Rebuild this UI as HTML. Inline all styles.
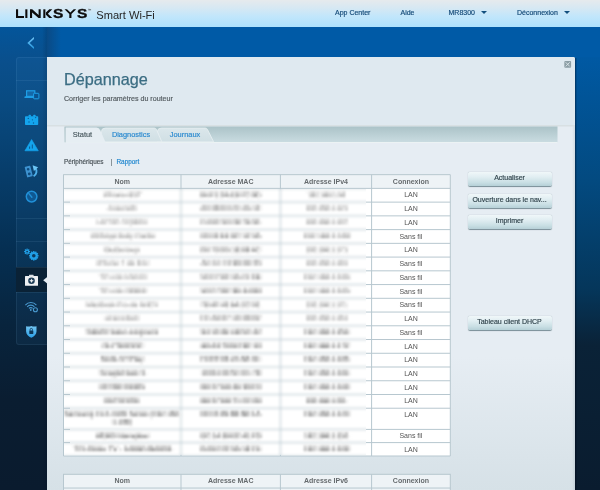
<!DOCTYPE html>
<html><head><meta charset="utf-8">
<style>
*{margin:0;padding:0;box-sizing:border-box}
html,body{width:600px;height:490px;overflow:hidden}
body{position:relative;font-family:"Liberation Sans",sans-serif;background:linear-gradient(to bottom,#0a5aa5 27px,#0059a3 57px,#034a80 180px,#05365a 290px,#0a2237 345px,#0a1c2f 490px)}
.abs{position:absolute}
.btn,.nav,.tab,.lk,#sub{-webkit-text-stroke:0.18px currentColor}
#title{-webkit-text-stroke:0.25px currentColor}
#hdr{left:0;top:0;width:600px;height:27px;background:linear-gradient(to bottom,#e6eaed 0%,#d6e8f3 30%,#c2e6fb 60%,#ade1fd 100%)}
#logo{left:16px;top:8px;font-weight:bold;font-size:12.4px;letter-spacing:0;color:#111;transform-origin:0 0;transform:scaleX(1.36);line-height:12px}
#tm{left:88px;top:8px;font-size:4px;color:#111;font-weight:bold}
#smart{left:96.3px;top:8.6px;font-size:11.1px;color:#262626;line-height:12px}
.nav{top:8px;font-size:7px;color:#164c7a;line-height:9px}
.tri{width:0;height:0;border-left:3px solid transparent;border-right:3px solid transparent;border-top:3.5px solid #12507f}
#topbar{left:47px;top:27px;width:553px;height:30px;background:linear-gradient(to right,#0a4a85 0px,#005aa6 14px,#005aa6 100%)}
#leftbar{left:0;top:27px;width:47px;height:463px;background:linear-gradient(to bottom,#03559a 0px,#0a4f8c 35px,#094b82 73px,#073d6a 148px,#052f52 223px,#08243d 298px,#0a1d31 373px,#0a1b2e 463px)}
#lshade{left:42px;top:27px;width:5px;height:463px;background:linear-gradient(to right,rgba(0,0,0,0),rgba(0,10,30,0.16))}
#chev{left:27px;top:36px}
#side{left:15.5px;top:57px;width:31.5px;height:288px;background:rgba(90,170,240,0.06);border:1px solid rgba(150,200,240,0.09);border-right:none;border-radius:3px 0 0 3px}
.sep{left:15.5px;width:31.5px;height:1px;background:rgba(150,200,240,0.1)}
#sel{left:15.5px;top:267px;width:31.5px;height:25px;background:#0a2236}
#panel{left:47px;top:57px;width:528px;height:433px;background:linear-gradient(to bottom,#e6edf3 0px,#e6edf3 300px,#d6e1e7 433px);border-radius:0 2px 0 0}
#rshade{left:575px;top:58px;width:2px;height:432px;background:linear-gradient(to right,rgba(0,5,20,0.45),rgba(0,5,20,0))}
#phead{left:47px;top:57px;width:528px;height:69px;background:#dfe9f0;border-bottom:1px solid #cfd9de;border-radius:0 2px 0 0}
#title{left:64px;top:70px;font-size:16.2px;color:#3b6d83;line-height:18px}
#sub{left:64px;top:95.2px;font-size:7.1px;color:#555d62;line-height:8px}
#close{left:564.5px;top:60.5px;width:7px;height:7px;border:1px solid #8d9ea5;background:#cfd9de}
#strip{left:65px;top:126.5px;width:492.5px;height:15.5px;background:linear-gradient(to bottom,#a9c0c6,#cbdde2)}
.tab{top:127.5px;height:14.5px;font-size:7.4px;line-height:14px;text-align:center}
.lk{top:157.5px;font-size:6.4px;line-height:8px}
table{position:absolute;border-collapse:collapse;font-size:7px;color:#444;background:#fff}
td,th{border:1px solid #b9c9d1;text-align:center;padding:0;line-height:8px}

.btn{left:467.5px;width:84px;height:14.2px;border-radius:2px;background:linear-gradient(to bottom,#f0f7f9 0%,#e1eef2 35%,#c9dfe4 75%,#b6d0d7 100%);box-shadow:0 0.8px 0.8px rgba(50,80,90,0.6);font-size:7px;color:#34474f;text-align:center;line-height:12.8px}
.bt{font-size:7px;line-height:8px;color:#5a5a5a;text-align:center;white-space:nowrap}
.bm{color:#4a4a4a}
.ct{font-size:7px;line-height:8px;color:#555;text-align:center}
.th{font-size:7px;line-height:8px;color:#666b6e;font-weight:bold;text-align:center}
#wrap{position:absolute;left:0;top:0;width:600px;height:490px;will-change:transform}
</style></head><body><div id="wrap">
<div id="hdr" class="abs"></div>
<svg class="abs" style="left:0;top:0" width="100" height="27" viewBox="0 0 100 27">
<g fill="#0d0d0d">
<path d="M16 9.3 H18.1 V16 H24 V18 H16 Z"/>
<path d="M25.3 9.3 H27.4 V18 H25.3 Z"/>
<path d="M30 9.3 H32.2 L38.6 14.9 V9.3 H40.7 V18 H38.5 L32.1 12.4 V18 H30 Z"/>
<path d="M43.3 9.3 H45.4 V18 H43.3 Z"/>
<path d="M49.3 9.3 H52.3 L47.9 13.65 L52.3 18 H49.3 L45.9 14.8 V12.5 Z"/>
<path d="M64.5 9.3 H67 L70.35 12.6 L73.7 9.3 H76.2 L71.45 14 V18 H69.3 V14 Z"/>
</g>
<text x="53.1" y="18" font-family="Liberation Sans" font-weight="bold" font-size="12.3" textLength="10.3" lengthAdjust="spacingAndGlyphs" fill="#0d0d0d" stroke="#0d0d0d" stroke-width="0.35">S</text>
<text x="77.1" y="18" font-family="Liberation Sans" font-weight="bold" font-size="12.3" textLength="10.3" lengthAdjust="spacingAndGlyphs" fill="#0d0d0d" stroke="#0d0d0d" stroke-width="0.35">S</text>
<path d="M88.2 9.2 H89.4 M88.8 9.2 V10.5 M89.6 10.5 V9.2 L90.1 9.9 L90.6 9.2 V10.5" stroke="#333" stroke-width="0.4" fill="none"/>
</svg>

<div id="smart" class="abs">Smart Wi-Fi</div>
<div class="abs nav" style="left:335px">App Center</div>
<div class="abs nav" style="left:400.5px">Aide</div>
<div class="abs nav" style="left:448.5px">MR8300</div>
<div class="abs tri" style="left:481px;top:11px"></div>
<div class="abs nav" style="left:517px">Déconnexion</div>
<div class="abs tri" style="left:563.8px;top:11px"></div>

<div id="leftbar" class="abs"></div>
<div id="topbar" class="abs"></div>
<div id="lshade" class="abs"></div>

<div id="side" class="abs"></div>
<div class="abs sep" style="top:80px"></div>
<div class="abs sep" style="top:218px"></div>
<div class="abs sep" style="top:241px"></div>
<div id="sel" class="abs"></div>
<div class="abs sep" style="top:267px"></div>
<div class="abs sep" style="top:292px"></div>

<svg class="abs" style="left:0;top:0;filter:blur(0.25px)" width="50" height="350" viewBox="0 0 50 350">
<defs>
<linearGradient id="shg" x1="0" y1="0" x2="0" y2="1"><stop offset="0" stop-color="#74c6f2"/><stop offset="1" stop-color="#2b9fe6"/></linearGradient>
</defs>
<!-- laptop + phone -->
<g fill="none" stroke="#1e9ee6">
<rect x="26.6" y="90.8" width="8.2" height="5.6" stroke-width="1.2" fill="#1468a8"/>
</g>
<path d="M24.8 96.3 H34 V98.1 H24.3 Z" fill="#1e9ee6"/>
<rect x="33.6" y="93.3" width="5.3" height="5.5" rx="0.6" fill="#0b528e" stroke="#1e9ee6" stroke-width="1"/>
<!-- calendar -->
<rect x="25" y="116.2" width="13.2" height="8.9" rx="0.8" fill="#14a5ee"/>
<rect x="28.7" y="114.8" width="2.2" height="2" rx="0.5" fill="#14a5ee"/>
<rect x="33.3" y="114.8" width="2.2" height="2" rx="0.5" fill="#14a5ee"/>
<g fill="#0b5d99"><circle cx="28.3" cy="118.4" r="0.7"/><circle cx="35.6" cy="117.6" r="0.7"/><circle cx="32.4" cy="119.8" r="0.6"/><circle cx="29" cy="122" r="0.7"/><circle cx="33.5" cy="123" r="0.7"/></g>
<!-- warning -->
<path d="M31.6 139.5 L38.3 150.8 H24.9 Z" fill="#14a5ee" stroke="#14a5ee" stroke-width="0.6" stroke-linejoin="round"/>
<path d="M32.3 144.5 V148.5 M29.6 146.5 V148.8" stroke="#0b4f85" stroke-width="0.9"/>
<!-- rotate phone -->
<g transform="rotate(-14 28.7 171.5)">
<rect x="25.8" y="166.2" width="5.8" height="10.8" rx="0.8" fill="#3d92d0"/>
<circle cx="28.7" cy="169.2" r="1.3" fill="#0f4b7e"/><circle cx="28.7" cy="174" r="1.4" fill="#0f4b7e"/>
</g>
<path d="M33.6 176.3 C36.9 174.3 37.2 170.5 35.5 168.3" fill="none" stroke="#4fb0ea" stroke-width="1.9"/>
<path d="M32.6 165.2 L38.2 167.3 L33.9 170.9 Z" fill="#6cc6f6"/>
<!-- speedometer -->
<circle cx="31.6" cy="196.6" r="5.3" fill="#0f5892" stroke="#2190d8" stroke-width="1.5"/>
<path d="M28.9 193.6 L31.9 197.3" stroke="#2190d8" stroke-width="1.4" stroke-linecap="round"/>
<!-- gears -->
<g transform="translate(27.1 251.6)">
<circle r="2.2" fill="#22a0e8"/>
<g fill="#22a0e8">
<rect x="-0.6" y="-3" width="1.2" height="1.2"/>
<rect x="-0.6" y="-3" width="1.2" height="1.2" transform="rotate(45)"/>
<rect x="-0.6" y="-3" width="1.2" height="1.2" transform="rotate(90)"/>
<rect x="-0.6" y="-3" width="1.2" height="1.2" transform="rotate(135)"/>
<rect x="-0.6" y="-3" width="1.2" height="1.2" transform="rotate(180)"/>
<rect x="-0.6" y="-3" width="1.2" height="1.2" transform="rotate(225)"/>
<rect x="-0.6" y="-3" width="1.2" height="1.2" transform="rotate(270)"/>
<rect x="-0.6" y="-3" width="1.2" height="1.2" transform="rotate(315)"/>
</g>
<circle r="0.9" fill="#0b3a60"/>
</g>
<g transform="translate(33.8 255.8)">
<circle r="3.9" fill="#22a0e8"/>
<g fill="#22a0e8">
<rect x="-0.7" y="-4.8" width="1.4" height="1.6" transform="rotate(0)"/>
<rect x="-0.7" y="-4.8" width="1.4" height="1.6" transform="rotate(30)"/>
<rect x="-0.7" y="-4.8" width="1.4" height="1.6" transform="rotate(60)"/>
<rect x="-0.7" y="-4.8" width="1.4" height="1.6" transform="rotate(90)"/>
<rect x="-0.7" y="-4.8" width="1.4" height="1.6" transform="rotate(120)"/>
<rect x="-0.7" y="-4.8" width="1.4" height="1.6" transform="rotate(150)"/>
<rect x="-0.7" y="-4.8" width="1.4" height="1.6" transform="rotate(180)"/>
<rect x="-0.7" y="-4.8" width="1.4" height="1.6" transform="rotate(210)"/>
<rect x="-0.7" y="-4.8" width="1.4" height="1.6" transform="rotate(240)"/>
<rect x="-0.7" y="-4.8" width="1.4" height="1.6" transform="rotate(270)"/>
<rect x="-0.7" y="-4.8" width="1.4" height="1.6" transform="rotate(300)"/>
<rect x="-0.7" y="-4.8" width="1.4" height="1.6" transform="rotate(330)"/>
</g>
<circle r="1.8" fill="#0b3a60"/>
</g>
<!-- medical kit -->
<rect x="25" y="276" width="13" height="9.8" rx="0.5" fill="#eef0f2"/>
<rect x="29" y="274.7" width="4.6" height="1.8" rx="0.4" fill="#d8dde2"/>
<circle cx="31.5" cy="280.8" r="3.3" fill="#1c3c55"/>
<path d="M31.5 278.5 L32.2 280.1 L33.8 280.8 L32.2 281.5 L31.5 283.1 L30.8 281.5 L29.2 280.8 L30.8 280.1 Z" fill="#eef0f2"/>
<path d="M47.2 277 L43.2 280.2 L47.2 283.4 Z" fill="#e6edf3"/>
<!-- wifi -->
<g fill="none" stroke="#4a9ad0" stroke-width="1.1">
<path d="M25.4 305.1 A7.2 7.2 0 0 1 36.4 305.1"/>
<path d="M27.2 306.8 A4.8 4.8 0 0 1 34.4 306.8"/>
<path d="M29 308.4 A2.4 2.4 0 0 1 32.6 308.4"/>
</g>
<circle cx="30.8" cy="310" r="0.9" fill="#4a9ad0"/>
<circle cx="35.4" cy="309.8" r="2" fill="#0b2d4a" stroke="#4a9ad0" stroke-width="1.1"/>
<!-- shield -->
<path d="M26.1 326.3 C28 326.8 30 326.6 31.3 325.9 C32.6 326.6 34.6 326.8 36.5 326.3 V331.5 C36.5 334.5 34 336.6 31.3 337.8 C28.6 336.6 26.1 334.5 26.1 331.5 Z" fill="url(#shg)"/>
<rect x="29.3" y="330.4" width="4" height="3.6" rx="0.4" fill="#0c3556"/>
<path d="M30.1 330.6 V329.6 A1.2 1.2 0 0 1 32.5 329.6 V330.6" fill="none" stroke="#0c3556" stroke-width="0.8"/>
<!-- chevron -->
<linearGradient id="chg" x1="0" y1="0" x2="0" y2="1"><stop offset="0" stop-color="#72c4f6"/><stop offset="1" stop-color="#2598de"/></linearGradient><path d="M33.9 36.9 L27.3 43 L33.9 49.1 L34 46.9 L29.7 43 L34 39.1 Z" fill="url(#chg)"/>
</svg>

<div id="panel" class="abs"></div>
<div id="rshade" class="abs"></div>
<div class="abs" style="left:572px;top:126px;width:3px;height:364px;background:linear-gradient(to right,rgba(120,145,160,0),rgba(120,145,160,0.18))"></div>
<div id="phead" class="abs"></div>
<div id="title" class="abs">Dépannage</div>
<div id="sub" class="abs">Corriger les paramètres du routeur</div>
<svg class="abs" style="left:560px;top:56px" width="16" height="16" viewBox="560 56 16 16"><rect x="564.3" y="60.9" width="6.8" height="6.9" rx="1" fill="#8d9fa6"/><path d="M565.7 62.3 L569.7 66.4 M569.7 62.3 L565.7 66.4" stroke="#dde7eb" stroke-width="0.9"/></svg>

<svg class="abs" style="left:0;top:0" width="600" height="160" viewBox="0 0 600 160">
<defs>
<linearGradient id="stg" x1="0" y1="0" x2="0" y2="1"><stop offset="0" stop-color="#abc3c8"/><stop offset="1" stop-color="#cadce1"/></linearGradient>
<linearGradient id="itg" x1="0" y1="0" x2="0" y2="1"><stop offset="0" stop-color="#dbe7eb"/><stop offset="1" stop-color="#d0dfe4"/></linearGradient>
</defs>
<rect x="47" y="125" width="528" height="1.5" fill="#d8e0e3"/>
<rect x="64.5" y="126.5" width="493" height="16" fill="url(#stg)"/>
<line x1="64.5" y1="142.6" x2="557.5" y2="142.6" stroke="#eef4f6" stroke-width="1"/>
<path d="M157.5 141.8 V131.5 Q157.5 128 161.5 128 H205.3 Q206.8 128 207.6 129.7 L213.6 141.8 Z" fill="url(#itg)" stroke="#e9f0f3" stroke-width="0.8"/>
<path d="M101.5 141.8 V131.5 Q101.5 128 105.5 128 H154.3 Q155.8 128 156.6 129.7 L161.8 141.8 Z" fill="url(#itg)" stroke="#e9f0f3" stroke-width="0.8"/>
<path d="M65.3 142.8 V127.6 H96.5 Q99 127.6 100.2 130.2 L105.8 142.8 Z" fill="#e6eef3"/>
<line x1="65.2" y1="127" x2="65.2" y2="142.5" stroke="#a9bec4" stroke-width="0.6"/>
</svg>

<div class="abs tab" style="left:65.5px;width:34px;color:#4a5a60">Statut</div>
<div class="abs tab" style="left:103px;width:56px;color:#2a8ad0">Diagnostics</div>
<div class="abs tab" style="left:160px;width:50px;color:#2a8ad0">Journaux</div>

<div class="abs lk" style="left:64px;color:#4a5358">Périphériques</div>
<div class="abs" style="left:111px;top:159px;width:0.8px;height:7px;background:#8a9499"></div>
<div class="abs lk" style="left:116.5px;color:#2288d0">Rapport</div>

<svg class="abs" style="left:0;top:0" width="600" height="490" viewBox="0 0 600 490"><rect x="63.5" y="174.65" width="386.8" height="281.35" fill="#fff"/><rect x="63.5" y="174.65" width="386.8" height="13.74" fill="#eef3f6"/><line x1="63.5" y1="174.65" x2="450.3" y2="174.65" stroke="#b7c7cf" stroke-width="1"/><line x1="63.5" y1="188.39000000000001" x2="450.3" y2="188.39000000000001" stroke="#b7c7cf" stroke-width="1"/><line x1="63.5" y1="202.13000000000002" x2="450.3" y2="202.13000000000002" stroke="#b7c7cf" stroke-width="1"/><line x1="63.5" y1="215.87000000000003" x2="450.3" y2="215.87000000000003" stroke="#b7c7cf" stroke-width="1"/><line x1="63.5" y1="229.61000000000004" x2="450.3" y2="229.61000000000004" stroke="#b7c7cf" stroke-width="1"/><line x1="63.5" y1="243.35000000000005" x2="450.3" y2="243.35000000000005" stroke="#b7c7cf" stroke-width="1"/><line x1="63.5" y1="257.09000000000003" x2="450.3" y2="257.09000000000003" stroke="#b7c7cf" stroke-width="1"/><line x1="63.5" y1="270.83000000000004" x2="450.3" y2="270.83000000000004" stroke="#b7c7cf" stroke-width="1"/><line x1="63.5" y1="284.57000000000005" x2="450.3" y2="284.57000000000005" stroke="#b7c7cf" stroke-width="1"/><line x1="63.5" y1="298.31000000000006" x2="450.3" y2="298.31000000000006" stroke="#b7c7cf" stroke-width="1"/><line x1="63.5" y1="312.05000000000007" x2="450.3" y2="312.05000000000007" stroke="#b7c7cf" stroke-width="1"/><line x1="63.5" y1="325.7900000000001" x2="450.3" y2="325.7900000000001" stroke="#b7c7cf" stroke-width="1"/><line x1="63.5" y1="339.5300000000001" x2="450.3" y2="339.5300000000001" stroke="#b7c7cf" stroke-width="1"/><line x1="63.5" y1="353.2700000000001" x2="450.3" y2="353.2700000000001" stroke="#b7c7cf" stroke-width="1"/><line x1="63.5" y1="367.0100000000001" x2="450.3" y2="367.0100000000001" stroke="#b7c7cf" stroke-width="1"/><line x1="63.5" y1="380.7500000000001" x2="450.3" y2="380.7500000000001" stroke="#b7c7cf" stroke-width="1"/><line x1="63.5" y1="394.4900000000001" x2="450.3" y2="394.4900000000001" stroke="#b7c7cf" stroke-width="1"/><line x1="63.5" y1="408.23000000000013" x2="450.3" y2="408.23000000000013" stroke="#b7c7cf" stroke-width="1"/><line x1="63.5" y1="429.4" x2="450.3" y2="429.4" stroke="#b7c7cf" stroke-width="1"/><line x1="63.5" y1="442.6" x2="450.3" y2="442.6" stroke="#b7c7cf" stroke-width="1"/><line x1="63.5" y1="456.0" x2="450.3" y2="456.0" stroke="#b7c7cf" stroke-width="1"/><line x1="63.5" y1="174.65" x2="63.5" y2="456.0" stroke="#b7c7cf" stroke-width="1"/><line x1="181.0" y1="174.65" x2="181.0" y2="456.0" stroke="#b7c7cf" stroke-width="1"/><line x1="280.4" y1="174.65" x2="280.4" y2="456.0" stroke="#b7c7cf" stroke-width="1"/><line x1="371.6" y1="174.65" x2="371.6" y2="456.0" stroke="#b7c7cf" stroke-width="1"/><line x1="450.3" y1="174.65" x2="450.3" y2="456.0" stroke="#b7c7cf" stroke-width="1"/><rect x="63.5" y="474.3" width="386.8" height="30" fill="#eef3f6" stroke="#b7c7cf" stroke-width="1"/><line x1="63.5" y1="488.04" x2="450.3" y2="488.04" stroke="#b7c7cf" stroke-width="1"/><line x1="181.0" y1="474.3" x2="181.0" y2="514.3" stroke="#b7c7cf" stroke-width="1"/><line x1="280.4" y1="474.3" x2="280.4" y2="514.3" stroke="#b7c7cf" stroke-width="1"/><line x1="371.6" y1="474.3" x2="371.6" y2="514.3" stroke="#b7c7cf" stroke-width="1"/></svg><div class="abs" style="left:64px;top:188.99px;width:302px;height:266.40999999999997px;overflow:hidden"><div class="abs" style="left:-64px;top:-188.99px;width:600px;height:490px;filter:blur(1.5px)"><svg class="abs" style="left:0;top:0" width="600" height="490"><rect x="60" y="188.39000000000001" width="320" height="267.61" fill="#fff"/><line x1="63.5" y1="188.39000000000001" x2="450.3" y2="188.39000000000001" stroke="#b7c7cf" stroke-width="1"/><line x1="63.5" y1="202.13000000000002" x2="450.3" y2="202.13000000000002" stroke="#b7c7cf" stroke-width="1"/><line x1="63.5" y1="215.87000000000003" x2="450.3" y2="215.87000000000003" stroke="#b7c7cf" stroke-width="1"/><line x1="63.5" y1="229.61000000000004" x2="450.3" y2="229.61000000000004" stroke="#b7c7cf" stroke-width="1"/><line x1="63.5" y1="243.35000000000005" x2="450.3" y2="243.35000000000005" stroke="#b7c7cf" stroke-width="1"/><line x1="63.5" y1="257.09000000000003" x2="450.3" y2="257.09000000000003" stroke="#b7c7cf" stroke-width="1"/><line x1="63.5" y1="270.83000000000004" x2="450.3" y2="270.83000000000004" stroke="#b7c7cf" stroke-width="1"/><line x1="63.5" y1="284.57000000000005" x2="450.3" y2="284.57000000000005" stroke="#b7c7cf" stroke-width="1"/><line x1="63.5" y1="298.31000000000006" x2="450.3" y2="298.31000000000006" stroke="#b7c7cf" stroke-width="1"/><line x1="63.5" y1="312.05000000000007" x2="450.3" y2="312.05000000000007" stroke="#b7c7cf" stroke-width="1"/><line x1="63.5" y1="325.7900000000001" x2="450.3" y2="325.7900000000001" stroke="#b7c7cf" stroke-width="1"/><line x1="63.5" y1="339.5300000000001" x2="450.3" y2="339.5300000000001" stroke="#b7c7cf" stroke-width="1"/><line x1="63.5" y1="353.2700000000001" x2="450.3" y2="353.2700000000001" stroke="#b7c7cf" stroke-width="1"/><line x1="63.5" y1="367.0100000000001" x2="450.3" y2="367.0100000000001" stroke="#b7c7cf" stroke-width="1"/><line x1="63.5" y1="380.7500000000001" x2="450.3" y2="380.7500000000001" stroke="#b7c7cf" stroke-width="1"/><line x1="63.5" y1="394.4900000000001" x2="450.3" y2="394.4900000000001" stroke="#b7c7cf" stroke-width="1"/><line x1="63.5" y1="408.23000000000013" x2="450.3" y2="408.23000000000013" stroke="#b7c7cf" stroke-width="1"/><line x1="63.5" y1="429.4" x2="450.3" y2="429.4" stroke="#b7c7cf" stroke-width="1"/><line x1="63.5" y1="442.6" x2="450.3" y2="442.6" stroke="#b7c7cf" stroke-width="1"/><line x1="63.5" y1="456.0" x2="450.3" y2="456.0" stroke="#b7c7cf" stroke-width="1"/><line x1="181.0" y1="174.65" x2="181.0" y2="456.0" stroke="#b7c7cf" stroke-width="1"/><line x1="280.4" y1="174.65" x2="280.4" y2="456.0" stroke="#b7c7cf" stroke-width="1"/></svg></div><div class="abs" style="left:-64px;top:-188.99px;width:600px;height:490px"><svg class="abs" style="left:0;top:0;filter:blur(0.9px)" width="600" height="490"><rect x="103.5" y="191.0" width="2.6" height="3.0" fill="#e8e8e8"/><rect x="106.1" y="191.0" width="2.6" height="3.0" fill="#dcdcdc"/><rect x="108.7" y="191.0" width="2.6" height="3.0" fill="#d6d6d6"/><rect x="111.3" y="191.0" width="2.6" height="3.0" fill="#eeeeee"/><rect x="113.9" y="191.0" width="2.6" height="3.0" fill="#f2f2f2"/><rect x="116.5" y="191.0" width="2.6" height="3.0" fill="#f4f4f4"/><rect x="119.1" y="191.0" width="2.6" height="3.0" fill="#eeeeee"/><rect x="121.7" y="191.0" width="2.6" height="3.0" fill="#f3f3f3"/><rect x="124.3" y="191.0" width="2.6" height="3.0" fill="#f9f9f9"/><rect x="126.9" y="191.0" width="2.6" height="3.0" fill="#f3f3f3"/><rect x="129.5" y="191.0" width="2.6" height="3.0" fill="#d9d9d9"/><rect x="132.1" y="191.0" width="2.6" height="3.0" fill="#e3e3e3"/><rect x="134.7" y="191.0" width="2.6" height="3.0" fill="#e5e5e5"/><rect x="137.3" y="191.0" width="2.6" height="3.0" fill="#d3d3d3"/><rect x="139.9" y="191.0" width="2.6" height="3.0" fill="#ececec"/><rect x="199.7" y="191.0" width="2.6" height="3.0" fill="#dcdcdc"/><rect x="202.3" y="191.0" width="2.6" height="3.0" fill="#d6d6d6"/><rect x="204.9" y="191.0" width="2.6" height="3.0" fill="#e7e7e7"/><rect x="207.5" y="191.0" width="2.6" height="3.0" fill="#e5e5e5"/><rect x="210.1" y="191.0" width="2.6" height="3.0" fill="#d5d5d5"/><rect x="212.7" y="191.0" width="2.6" height="3.0" fill="#e5e5e5"/><rect x="215.3" y="191.0" width="2.6" height="3.0" fill="#d5d5d5"/><rect x="217.9" y="191.0" width="2.6" height="3.0" fill="#f6f6f6"/><rect x="220.5" y="191.0" width="2.6" height="3.0" fill="#cfcfcf"/><rect x="223.1" y="191.0" width="2.6" height="3.0" fill="#e2e2e2"/><rect x="225.7" y="191.0" width="2.6" height="3.0" fill="#d3d3d3"/><rect x="228.3" y="191.0" width="2.6" height="3.0" fill="#f6f6f6"/><rect x="230.9" y="191.0" width="2.6" height="3.0" fill="#d6d6d6"/><rect x="233.5" y="191.0" width="2.6" height="3.0" fill="#e2e2e2"/><rect x="236.1" y="191.0" width="2.6" height="3.0" fill="#d0d0d0"/><rect x="238.7" y="191.0" width="2.6" height="3.0" fill="#e6e6e6"/><rect x="241.3" y="191.0" width="2.6" height="3.0" fill="#dfdfdf"/><rect x="243.9" y="191.0" width="2.6" height="3.0" fill="#d1d1d1"/><rect x="246.5" y="191.0" width="2.6" height="3.0" fill="#d3d3d3"/><rect x="249.1" y="191.0" width="2.6" height="3.0" fill="#ececec"/><rect x="251.7" y="191.0" width="2.6" height="3.0" fill="#d8d8d8"/><rect x="254.3" y="191.0" width="2.6" height="3.0" fill="#cccccc"/><rect x="256.9" y="191.0" width="2.6" height="3.0" fill="#d6d6d6"/><rect x="259.5" y="191.0" width="2.6" height="3.0" fill="#f3f3f3"/><rect x="306.3" y="191.0" width="2.6" height="3.0" fill="#f5f5f5"/><rect x="308.9" y="191.0" width="2.6" height="3.0" fill="#e5e5e5"/><rect x="311.5" y="191.0" width="2.6" height="3.0" fill="#d1d1d1"/><rect x="314.1" y="191.0" width="2.6" height="3.0" fill="#e2e2e2"/><rect x="316.7" y="191.0" width="2.6" height="3.0" fill="#e5e5e5"/><rect x="319.3" y="191.0" width="2.6" height="3.0" fill="#f0f0f0"/><rect x="321.9" y="191.0" width="2.6" height="3.0" fill="#e7e7e7"/><rect x="324.5" y="191.0" width="2.6" height="3.0" fill="#d8d8d8"/><rect x="327.1" y="191.0" width="2.6" height="3.0" fill="#e0e0e0"/><rect x="329.7" y="191.0" width="2.6" height="3.0" fill="#eaeaea"/><rect x="332.3" y="191.0" width="2.6" height="3.0" fill="#e4e4e4"/><rect x="334.9" y="191.0" width="2.6" height="3.0" fill="#f6f6f6"/><rect x="337.5" y="191.0" width="2.6" height="3.0" fill="#e1e1e1"/><rect x="340.1" y="191.0" width="2.6" height="3.0" fill="#e9e9e9"/><rect x="342.7" y="191.0" width="2.6" height="3.0" fill="#d5d5d5"/><rect x="103.5" y="194.0" width="2.6" height="3.0" fill="#c6c6c6"/><rect x="106.1" y="194.0" width="2.6" height="3.0" fill="#d0d0d0"/><rect x="108.7" y="194.0" width="2.6" height="3.0" fill="#c8c8c8"/><rect x="111.3" y="194.0" width="2.6" height="3.0" fill="#d3d3d3"/><rect x="113.9" y="194.0" width="2.6" height="3.0" fill="#d0d0d0"/><rect x="116.5" y="194.0" width="2.6" height="3.0" fill="#b3b3b3"/><rect x="119.1" y="194.0" width="2.6" height="3.0" fill="#cfcfcf"/><rect x="121.7" y="194.0" width="2.6" height="3.0" fill="#c6c6c6"/><rect x="124.3" y="194.0" width="2.6" height="3.0" fill="#d1d1d1"/><rect x="126.9" y="194.0" width="2.6" height="3.0" fill="#d9d9d9"/><rect x="129.5" y="194.0" width="2.6" height="3.0" fill="#bababa"/><rect x="132.1" y="194.0" width="2.6" height="3.0" fill="#d8d8d8"/><rect x="134.7" y="194.0" width="2.6" height="3.0" fill="#cccccc"/><rect x="137.3" y="194.0" width="2.6" height="3.0" fill="#d4d4d4"/><rect x="199.7" y="194.0" width="2.6" height="3.0" fill="#c1c1c1"/><rect x="202.3" y="194.0" width="2.6" height="3.0" fill="#b1b1b1"/><rect x="204.9" y="194.0" width="2.6" height="3.0" fill="#bbbbbb"/><rect x="207.5" y="194.0" width="2.6" height="3.0" fill="#c7c7c7"/><rect x="210.1" y="194.0" width="2.6" height="3.0" fill="#bbbbbb"/><rect x="212.7" y="194.0" width="2.6" height="3.0" fill="#e6e6e6"/><rect x="215.3" y="194.0" width="2.6" height="3.0" fill="#bfbfbf"/><rect x="217.9" y="194.0" width="2.6" height="3.0" fill="#f1f1f1"/><rect x="220.5" y="194.0" width="2.6" height="3.0" fill="#c2c2c2"/><rect x="223.1" y="194.0" width="2.6" height="3.0" fill="#bcbcbc"/><rect x="225.7" y="194.0" width="2.6" height="3.0" fill="#adadad"/><rect x="228.3" y="194.0" width="2.6" height="3.0" fill="#cfcfcf"/><rect x="230.9" y="194.0" width="2.6" height="3.0" fill="#b6b6b6"/><rect x="233.5" y="194.0" width="2.6" height="3.0" fill="#d3d3d3"/><rect x="236.1" y="194.0" width="2.6" height="3.0" fill="#a9a9a9"/><rect x="238.7" y="194.0" width="2.6" height="3.0" fill="#d1d1d1"/><rect x="241.3" y="194.0" width="2.6" height="3.0" fill="#cfcfcf"/><rect x="243.9" y="194.0" width="2.6" height="3.0" fill="#cecece"/><rect x="246.5" y="194.0" width="2.6" height="3.0" fill="#dfdfdf"/><rect x="249.1" y="194.0" width="2.6" height="3.0" fill="#e6e6e6"/><rect x="251.7" y="194.0" width="2.6" height="3.0" fill="#c3c3c3"/><rect x="254.3" y="194.0" width="2.6" height="3.0" fill="#959595"/><rect x="256.9" y="194.0" width="2.6" height="3.0" fill="#e0e0e0"/><rect x="259.5" y="194.0" width="2.6" height="3.0" fill="#d7d7d7"/><rect x="308.9" y="194.0" width="2.6" height="3.0" fill="#cfcfcf"/><rect x="311.5" y="194.0" width="2.6" height="3.0" fill="#b2b2b2"/><rect x="314.1" y="194.0" width="2.6" height="3.0" fill="#cdcdcd"/><rect x="316.7" y="194.0" width="2.6" height="3.0" fill="#dfdfdf"/><rect x="319.3" y="194.0" width="2.6" height="3.0" fill="#f3f3f3"/><rect x="321.9" y="194.0" width="2.6" height="3.0" fill="#c1c1c1"/><rect x="324.5" y="194.0" width="2.6" height="3.0" fill="#aeaeae"/><rect x="327.1" y="194.0" width="2.6" height="3.0" fill="#c3c3c3"/><rect x="329.7" y="194.0" width="2.6" height="3.0" fill="#cfcfcf"/><rect x="332.3" y="194.0" width="2.6" height="3.0" fill="#dfdfdf"/><rect x="334.9" y="194.0" width="2.6" height="3.0" fill="#e4e4e4"/><rect x="337.5" y="194.0" width="2.6" height="3.0" fill="#d6d6d6"/><rect x="340.1" y="194.0" width="2.6" height="3.0" fill="#b8b8b8"/><rect x="342.7" y="194.0" width="2.6" height="3.0" fill="#c1c1c1"/><rect x="103.5" y="196.9" width="2.6" height="3.0" fill="#fafafa"/><rect x="113.9" y="196.9" width="2.6" height="3.0" fill="#f8f8f8"/><rect x="116.5" y="196.9" width="2.6" height="3.0" fill="#f9f9f9"/><rect x="121.7" y="196.9" width="2.6" height="3.0" fill="#f8f8f8"/><rect x="129.5" y="196.9" width="2.6" height="3.0" fill="#f5f5f5"/><rect x="132.1" y="196.9" width="2.6" height="3.0" fill="#f9f9f9"/><rect x="134.7" y="196.9" width="2.6" height="3.0" fill="#f7f7f7"/><rect x="199.7" y="196.9" width="2.6" height="3.0" fill="#f6f6f6"/><rect x="202.3" y="196.9" width="2.6" height="3.0" fill="#f7f7f7"/><rect x="207.5" y="196.9" width="2.6" height="3.0" fill="#f7f7f7"/><rect x="215.3" y="196.9" width="2.6" height="3.0" fill="#eeeeee"/><rect x="217.9" y="196.9" width="2.6" height="3.0" fill="#f9f9f9"/><rect x="220.5" y="196.9" width="2.6" height="3.0" fill="#f0f0f0"/><rect x="228.3" y="196.9" width="2.6" height="3.0" fill="#f5f5f5"/><rect x="230.9" y="196.9" width="2.6" height="3.0" fill="#f5f5f5"/><rect x="233.5" y="196.9" width="2.6" height="3.0" fill="#f1f1f1"/><rect x="236.1" y="196.9" width="2.6" height="3.0" fill="#f2f2f2"/><rect x="246.5" y="196.9" width="2.6" height="3.0" fill="#f2f2f2"/><rect x="251.7" y="196.9" width="2.6" height="3.0" fill="#f5f5f5"/><rect x="254.3" y="196.9" width="2.6" height="3.0" fill="#f9f9f9"/><rect x="256.9" y="196.9" width="2.6" height="3.0" fill="#f2f2f2"/><rect x="308.9" y="196.9" width="2.6" height="3.0" fill="#f4f4f4"/><rect x="311.5" y="196.9" width="2.6" height="3.0" fill="#f5f5f5"/><rect x="314.1" y="196.9" width="2.6" height="3.0" fill="#f6f6f6"/><rect x="316.7" y="196.9" width="2.6" height="3.0" fill="#f5f5f5"/><rect x="319.3" y="196.9" width="2.6" height="3.0" fill="#f6f6f6"/><rect x="321.9" y="196.9" width="2.6" height="3.0" fill="#f6f6f6"/><rect x="324.5" y="196.9" width="2.6" height="3.0" fill="#f6f6f6"/><rect x="327.1" y="196.9" width="2.6" height="3.0" fill="#f6f6f6"/><rect x="329.7" y="196.9" width="2.6" height="3.0" fill="#f8f8f8"/><rect x="332.3" y="196.9" width="2.6" height="3.0" fill="#f6f6f6"/><rect x="334.9" y="196.9" width="2.6" height="3.0" fill="#f5f5f5"/><rect x="337.5" y="196.9" width="2.6" height="3.0" fill="#f8f8f8"/><rect x="340.1" y="196.9" width="2.6" height="3.0" fill="#fafafa"/><rect x="342.7" y="196.9" width="2.6" height="3.0" fill="#f6f6f6"/><rect x="108.7" y="204.7" width="2.6" height="3.0" fill="#d3d3d3"/><rect x="111.3" y="204.7" width="2.6" height="3.0" fill="#e6e6e6"/><rect x="113.9" y="204.7" width="2.6" height="3.0" fill="#e7e7e7"/><rect x="116.5" y="204.7" width="2.6" height="3.0" fill="#dddddd"/><rect x="119.1" y="204.7" width="2.6" height="3.0" fill="#e9e9e9"/><rect x="121.7" y="204.7" width="2.6" height="3.0" fill="#e8e8e8"/><rect x="124.3" y="204.7" width="2.6" height="3.0" fill="#dedede"/><rect x="126.9" y="204.7" width="2.6" height="3.0" fill="#e5e5e5"/><rect x="129.5" y="204.7" width="2.6" height="3.0" fill="#dbdbdb"/><rect x="132.1" y="204.7" width="2.6" height="3.0" fill="#c8c8c8"/><rect x="134.7" y="204.7" width="2.6" height="3.0" fill="#e7e7e7"/><rect x="199.7" y="204.7" width="2.6" height="3.0" fill="#f1f1f1"/><rect x="202.3" y="204.7" width="2.6" height="3.0" fill="#c2c2c2"/><rect x="204.9" y="204.7" width="2.6" height="3.0" fill="#cecece"/><rect x="207.5" y="204.7" width="2.6" height="3.0" fill="#d1d1d1"/><rect x="210.1" y="204.7" width="2.6" height="3.0" fill="#e0e0e0"/><rect x="212.7" y="204.7" width="2.6" height="3.0" fill="#c9c9c9"/><rect x="215.3" y="204.7" width="2.6" height="3.0" fill="#aeaeae"/><rect x="217.9" y="204.7" width="2.6" height="3.0" fill="#d4d4d4"/><rect x="220.5" y="204.7" width="2.6" height="3.0" fill="#c7c7c7"/><rect x="223.1" y="204.7" width="2.6" height="3.0" fill="#cccccc"/><rect x="225.7" y="204.7" width="2.6" height="3.0" fill="#d5d5d5"/><rect x="228.3" y="204.7" width="2.6" height="3.0" fill="#cecece"/><rect x="230.9" y="204.7" width="2.6" height="3.0" fill="#e2e2e2"/><rect x="233.5" y="204.7" width="2.6" height="3.0" fill="#c8c8c8"/><rect x="236.1" y="204.7" width="2.6" height="3.0" fill="#c8c8c8"/><rect x="238.7" y="204.7" width="2.6" height="3.0" fill="#e1e1e1"/><rect x="241.3" y="204.7" width="2.6" height="3.0" fill="#ebebeb"/><rect x="243.9" y="204.7" width="2.6" height="3.0" fill="#c4c4c4"/><rect x="246.5" y="204.7" width="2.6" height="3.0" fill="#c6c6c6"/><rect x="249.1" y="204.7" width="2.6" height="3.0" fill="#ededed"/><rect x="251.7" y="204.7" width="2.6" height="3.0" fill="#e5e5e5"/><rect x="254.3" y="204.7" width="2.6" height="3.0" fill="#d9d9d9"/><rect x="256.9" y="204.7" width="2.6" height="3.0" fill="#bababa"/><rect x="259.5" y="204.7" width="2.6" height="3.0" fill="#f0f0f0"/><rect x="306.3" y="204.7" width="2.6" height="3.0" fill="#d3d3d3"/><rect x="308.9" y="204.7" width="2.6" height="3.0" fill="#d5d5d5"/><rect x="311.5" y="204.7" width="2.6" height="3.0" fill="#d0d0d0"/><rect x="314.1" y="204.7" width="2.6" height="3.0" fill="#d0d0d0"/><rect x="316.7" y="204.7" width="2.6" height="3.0" fill="#f9f9f9"/><rect x="319.3" y="204.7" width="2.6" height="3.0" fill="#d6d6d6"/><rect x="321.9" y="204.7" width="2.6" height="3.0" fill="#c4c4c4"/><rect x="324.5" y="204.7" width="2.6" height="3.0" fill="#d2d2d2"/><rect x="327.1" y="204.7" width="2.6" height="3.0" fill="#d1d1d1"/><rect x="329.7" y="204.7" width="2.6" height="3.0" fill="#f6f6f6"/><rect x="332.3" y="204.7" width="2.6" height="3.0" fill="#dadada"/><rect x="334.9" y="204.7" width="2.6" height="3.0" fill="#f9f9f9"/><rect x="337.5" y="204.7" width="2.6" height="3.0" fill="#d6d6d6"/><rect x="340.1" y="204.7" width="2.6" height="3.0" fill="#dedede"/><rect x="342.7" y="204.7" width="2.6" height="3.0" fill="#d8d8d8"/><rect x="345.3" y="204.7" width="2.6" height="3.0" fill="#dcdcdc"/><rect x="106.1" y="207.7" width="2.6" height="3.0" fill="#ededed"/><rect x="108.7" y="207.7" width="2.6" height="3.0" fill="#d0d0d0"/><rect x="111.3" y="207.7" width="2.6" height="3.0" fill="#d2d2d2"/><rect x="113.9" y="207.7" width="2.6" height="3.0" fill="#d1d1d1"/><rect x="116.5" y="207.7" width="2.6" height="3.0" fill="#bebebe"/><rect x="119.1" y="207.7" width="2.6" height="3.0" fill="#c7c7c7"/><rect x="121.7" y="207.7" width="2.6" height="3.0" fill="#d1d1d1"/><rect x="124.3" y="207.7" width="2.6" height="3.0" fill="#d9d9d9"/><rect x="126.9" y="207.7" width="2.6" height="3.0" fill="#c1c1c1"/><rect x="129.5" y="207.7" width="2.6" height="3.0" fill="#cbcbcb"/><rect x="132.1" y="207.7" width="2.6" height="3.0" fill="#c9c9c9"/><rect x="134.7" y="207.7" width="2.6" height="3.0" fill="#dddddd"/><rect x="199.7" y="207.7" width="2.6" height="3.0" fill="#d1d1d1"/><rect x="202.3" y="207.7" width="2.6" height="3.0" fill="#c1c1c1"/><rect x="204.9" y="207.7" width="2.6" height="3.0" fill="#c6c6c6"/><rect x="207.5" y="207.7" width="2.6" height="3.0" fill="#cdcdcd"/><rect x="210.1" y="207.7" width="2.6" height="3.0" fill="#dcdcdc"/><rect x="212.7" y="207.7" width="2.6" height="3.0" fill="#c2c2c2"/><rect x="215.3" y="207.7" width="2.6" height="3.0" fill="#acacac"/><rect x="217.9" y="207.7" width="2.6" height="3.0" fill="#cacaca"/><rect x="220.5" y="207.7" width="2.6" height="3.0" fill="#c3c3c3"/><rect x="223.1" y="207.7" width="2.6" height="3.0" fill="#c6c6c6"/><rect x="225.7" y="207.7" width="2.6" height="3.0" fill="#cfcfcf"/><rect x="228.3" y="207.7" width="2.6" height="3.0" fill="#cacaca"/><rect x="230.9" y="207.7" width="2.6" height="3.0" fill="#d1d1d1"/><rect x="233.5" y="207.7" width="2.6" height="3.0" fill="#d1d1d1"/><rect x="236.1" y="207.7" width="2.6" height="3.0" fill="#c6c6c6"/><rect x="238.7" y="207.7" width="2.6" height="3.0" fill="#e0e0e0"/><rect x="241.3" y="207.7" width="2.6" height="3.0" fill="#d4d4d4"/><rect x="243.9" y="207.7" width="2.6" height="3.0" fill="#bfbfbf"/><rect x="246.5" y="207.7" width="2.6" height="3.0" fill="#c2c2c2"/><rect x="249.1" y="207.7" width="2.6" height="3.0" fill="#c9c9c9"/><rect x="251.7" y="207.7" width="2.6" height="3.0" fill="#e6e6e6"/><rect x="254.3" y="207.7" width="2.6" height="3.0" fill="#c6c6c6"/><rect x="256.9" y="207.7" width="2.6" height="3.0" fill="#b7b7b7"/><rect x="259.5" y="207.7" width="2.6" height="3.0" fill="#f1f1f1"/><rect x="306.3" y="207.7" width="2.6" height="3.0" fill="#c6c6c6"/><rect x="308.9" y="207.7" width="2.6" height="3.0" fill="#cfcfcf"/><rect x="311.5" y="207.7" width="2.6" height="3.0" fill="#c5c5c5"/><rect x="314.1" y="207.7" width="2.6" height="3.0" fill="#d4d4d4"/><rect x="316.7" y="207.7" width="2.6" height="3.0" fill="#eeeeee"/><rect x="319.3" y="207.7" width="2.6" height="3.0" fill="#c8c8c8"/><rect x="321.9" y="207.7" width="2.6" height="3.0" fill="#cecece"/><rect x="324.5" y="207.7" width="2.6" height="3.0" fill="#bcbcbc"/><rect x="327.1" y="207.7" width="2.6" height="3.0" fill="#cdcdcd"/><rect x="329.7" y="207.7" width="2.6" height="3.0" fill="#ececec"/><rect x="332.3" y="207.7" width="2.6" height="3.0" fill="#cbcbcb"/><rect x="334.9" y="207.7" width="2.6" height="3.0" fill="#eeeeee"/><rect x="337.5" y="207.7" width="2.6" height="3.0" fill="#c8c8c8"/><rect x="340.1" y="207.7" width="2.6" height="3.0" fill="#c8c8c8"/><rect x="342.7" y="207.7" width="2.6" height="3.0" fill="#e8e8e8"/><rect x="345.3" y="207.7" width="2.6" height="3.0" fill="#cdcdcd"/><rect x="95.7" y="218.5" width="2.6" height="3.0" fill="#e9e9e9"/><rect x="100.9" y="218.5" width="2.6" height="3.0" fill="#d5d5d5"/><rect x="103.5" y="218.5" width="2.6" height="3.0" fill="#dddddd"/><rect x="106.1" y="218.5" width="2.6" height="3.0" fill="#dadada"/><rect x="108.7" y="218.5" width="2.6" height="3.0" fill="#d5d5d5"/><rect x="111.3" y="218.5" width="2.6" height="3.0" fill="#d9d9d9"/><rect x="113.9" y="218.5" width="2.6" height="3.0" fill="#d4d4d4"/><rect x="116.5" y="218.5" width="2.6" height="3.0" fill="#d5d5d5"/><rect x="121.7" y="218.5" width="2.6" height="3.0" fill="#d8d8d8"/><rect x="124.3" y="218.5" width="2.6" height="3.0" fill="#dbdbdb"/><rect x="126.9" y="218.5" width="2.6" height="3.0" fill="#dddddd"/><rect x="129.5" y="218.5" width="2.6" height="3.0" fill="#dadada"/><rect x="132.1" y="218.5" width="2.6" height="3.0" fill="#dadada"/><rect x="134.7" y="218.5" width="2.6" height="3.0" fill="#cecece"/><rect x="137.3" y="218.5" width="2.6" height="3.0" fill="#dcdcdc"/><rect x="139.9" y="218.5" width="2.6" height="3.0" fill="#d6d6d6"/><rect x="142.5" y="218.5" width="2.6" height="3.0" fill="#e2e2e2"/><rect x="145.1" y="218.5" width="2.6" height="3.0" fill="#e7e7e7"/><rect x="199.7" y="218.5" width="2.6" height="3.0" fill="#d8d8d8"/><rect x="202.3" y="218.5" width="2.6" height="3.0" fill="#d8d8d8"/><rect x="204.9" y="218.5" width="2.6" height="3.0" fill="#e7e7e7"/><rect x="207.5" y="218.5" width="2.6" height="3.0" fill="#d3d3d3"/><rect x="210.1" y="218.5" width="2.6" height="3.0" fill="#d1d1d1"/><rect x="212.7" y="218.5" width="2.6" height="3.0" fill="#d1d1d1"/><rect x="215.3" y="218.5" width="2.6" height="3.0" fill="#c8c8c8"/><rect x="217.9" y="218.5" width="2.6" height="3.0" fill="#dedede"/><rect x="220.5" y="218.5" width="2.6" height="3.0" fill="#d7d7d7"/><rect x="223.1" y="218.5" width="2.6" height="3.0" fill="#cfcfcf"/><rect x="225.7" y="218.5" width="2.6" height="3.0" fill="#d3d3d3"/><rect x="228.3" y="218.5" width="2.6" height="3.0" fill="#d5d5d5"/><rect x="230.9" y="218.5" width="2.6" height="3.0" fill="#e0e0e0"/><rect x="233.5" y="218.5" width="2.6" height="3.0" fill="#cfcfcf"/><rect x="236.1" y="218.5" width="2.6" height="3.0" fill="#c1c1c1"/><rect x="238.7" y="218.5" width="2.6" height="3.0" fill="#d5d5d5"/><rect x="241.3" y="218.5" width="2.6" height="3.0" fill="#e7e7e7"/><rect x="243.9" y="218.5" width="2.6" height="3.0" fill="#c5c5c5"/><rect x="246.5" y="218.5" width="2.6" height="3.0" fill="#c7c7c7"/><rect x="249.1" y="218.5" width="2.6" height="3.0" fill="#e7e7e7"/><rect x="251.7" y="218.5" width="2.6" height="3.0" fill="#d3d3d3"/><rect x="254.3" y="218.5" width="2.6" height="3.0" fill="#cacaca"/><rect x="256.9" y="218.5" width="2.6" height="3.0" fill="#cccccc"/><rect x="306.3" y="218.5" width="2.6" height="3.0" fill="#d7d7d7"/><rect x="308.9" y="218.5" width="2.6" height="3.0" fill="#d8d8d8"/><rect x="311.5" y="218.5" width="2.6" height="3.0" fill="#d4d4d4"/><rect x="314.1" y="218.5" width="2.6" height="3.0" fill="#d4d4d4"/><rect x="316.7" y="218.5" width="2.6" height="3.0" fill="#f9f9f9"/><rect x="319.3" y="218.5" width="2.6" height="3.0" fill="#dadada"/><rect x="321.9" y="218.5" width="2.6" height="3.0" fill="#cfcfcf"/><rect x="324.5" y="218.5" width="2.6" height="3.0" fill="#d7d7d7"/><rect x="327.1" y="218.5" width="2.6" height="3.0" fill="#d7d7d7"/><rect x="329.7" y="218.5" width="2.6" height="3.0" fill="#f6f6f6"/><rect x="332.3" y="218.5" width="2.6" height="3.0" fill="#dddddd"/><rect x="334.9" y="218.5" width="2.6" height="3.0" fill="#f9f9f9"/><rect x="337.5" y="218.5" width="2.6" height="3.0" fill="#dadada"/><rect x="340.1" y="218.5" width="2.6" height="3.0" fill="#d6d6d6"/><rect x="342.7" y="218.5" width="2.6" height="3.0" fill="#dbdbdb"/><rect x="345.3" y="218.5" width="2.6" height="3.0" fill="#d3d3d3"/><rect x="95.7" y="221.4" width="2.6" height="3.0" fill="#dedede"/><rect x="98.3" y="221.4" width="2.6" height="3.0" fill="#dcdcdc"/><rect x="100.9" y="221.4" width="2.6" height="3.0" fill="#c9c9c9"/><rect x="103.5" y="221.4" width="2.6" height="3.0" fill="#cdcdcd"/><rect x="106.1" y="221.4" width="2.6" height="3.0" fill="#f0f0f0"/><rect x="108.7" y="221.4" width="2.6" height="3.0" fill="#e1e1e1"/><rect x="111.3" y="221.4" width="2.6" height="3.0" fill="#d1d1d1"/><rect x="113.9" y="221.4" width="2.6" height="3.0" fill="#c7c7c7"/><rect x="116.5" y="221.4" width="2.6" height="3.0" fill="#dedede"/><rect x="119.1" y="221.4" width="2.6" height="3.0" fill="#eeeeee"/><rect x="121.7" y="221.4" width="2.6" height="3.0" fill="#e3e3e3"/><rect x="124.3" y="221.4" width="2.6" height="3.0" fill="#d3d3d3"/><rect x="126.9" y="221.4" width="2.6" height="3.0" fill="#d6d6d6"/><rect x="129.5" y="221.4" width="2.6" height="3.0" fill="#d5d5d5"/><rect x="132.1" y="221.4" width="2.6" height="3.0" fill="#c7c7c7"/><rect x="134.7" y="221.4" width="2.6" height="3.0" fill="#bcbcbc"/><rect x="137.3" y="221.4" width="2.6" height="3.0" fill="#cacaca"/><rect x="139.9" y="221.4" width="2.6" height="3.0" fill="#d2d2d2"/><rect x="142.5" y="221.4" width="2.6" height="3.0" fill="#d2d2d2"/><rect x="145.1" y="221.4" width="2.6" height="3.0" fill="#d6d6d6"/><rect x="199.7" y="221.4" width="2.6" height="3.0" fill="#cdcdcd"/><rect x="202.3" y="221.4" width="2.6" height="3.0" fill="#d9d9d9"/><rect x="204.9" y="221.4" width="2.6" height="3.0" fill="#cdcdcd"/><rect x="207.5" y="221.4" width="2.6" height="3.0" fill="#c2c2c2"/><rect x="210.1" y="221.4" width="2.6" height="3.0" fill="#c5c5c5"/><rect x="212.7" y="221.4" width="2.6" height="3.0" fill="#bcbcbc"/><rect x="215.3" y="221.4" width="2.6" height="3.0" fill="#bcbcbc"/><rect x="217.9" y="221.4" width="2.6" height="3.0" fill="#dddddd"/><rect x="220.5" y="221.4" width="2.6" height="3.0" fill="#dedede"/><rect x="223.1" y="221.4" width="2.6" height="3.0" fill="#adadad"/><rect x="225.7" y="221.4" width="2.6" height="3.0" fill="#c6c6c6"/><rect x="228.3" y="221.4" width="2.6" height="3.0" fill="#c8c8c8"/><rect x="230.9" y="221.4" width="2.6" height="3.0" fill="#d4d4d4"/><rect x="233.5" y="221.4" width="2.6" height="3.0" fill="#cccccc"/><rect x="236.1" y="221.4" width="2.6" height="3.0" fill="#a0a0a0"/><rect x="238.7" y="221.4" width="2.6" height="3.0" fill="#c6c6c6"/><rect x="241.3" y="221.4" width="2.6" height="3.0" fill="#f1f1f1"/><rect x="243.9" y="221.4" width="2.6" height="3.0" fill="#d2d2d2"/><rect x="246.5" y="221.4" width="2.6" height="3.0" fill="#a7a7a7"/><rect x="249.1" y="221.4" width="2.6" height="3.0" fill="#d0d0d0"/><rect x="251.7" y="221.4" width="2.6" height="3.0" fill="#d6d6d6"/><rect x="254.3" y="221.4" width="2.6" height="3.0" fill="#a8a8a8"/><rect x="256.9" y="221.4" width="2.6" height="3.0" fill="#c2c2c2"/><rect x="259.5" y="221.4" width="2.6" height="3.0" fill="#ececec"/><rect x="306.3" y="221.4" width="2.6" height="3.0" fill="#c3c3c3"/><rect x="308.9" y="221.4" width="2.6" height="3.0" fill="#cbcbcb"/><rect x="311.5" y="221.4" width="2.6" height="3.0" fill="#c0c0c0"/><rect x="314.1" y="221.4" width="2.6" height="3.0" fill="#d0d0d0"/><rect x="316.7" y="221.4" width="2.6" height="3.0" fill="#eeeeee"/><rect x="319.3" y="221.4" width="2.6" height="3.0" fill="#c5c5c5"/><rect x="321.9" y="221.4" width="2.6" height="3.0" fill="#c3c3c3"/><rect x="324.5" y="221.4" width="2.6" height="3.0" fill="#b6b6b6"/><rect x="327.1" y="221.4" width="2.6" height="3.0" fill="#c6c6c6"/><rect x="329.7" y="221.4" width="2.6" height="3.0" fill="#ececec"/><rect x="332.3" y="221.4" width="2.6" height="3.0" fill="#c8c8c8"/><rect x="334.9" y="221.4" width="2.6" height="3.0" fill="#eeeeee"/><rect x="337.5" y="221.4" width="2.6" height="3.0" fill="#c5c5c5"/><rect x="340.1" y="221.4" width="2.6" height="3.0" fill="#cccccc"/><rect x="342.7" y="221.4" width="2.6" height="3.0" fill="#d6d6d6"/><rect x="345.3" y="221.4" width="2.6" height="3.0" fill="#e1e1e1"/><rect x="129.5" y="224.4" width="2.6" height="3.0" fill="#ececec"/><rect x="90.5" y="232.2" width="2.6" height="3.0" fill="#e8e8e8"/><rect x="93.1" y="232.2" width="2.6" height="3.0" fill="#dadada"/><rect x="95.7" y="232.2" width="2.6" height="3.0" fill="#dadada"/><rect x="98.3" y="232.2" width="2.6" height="3.0" fill="#e1e1e1"/><rect x="100.9" y="232.2" width="2.6" height="3.0" fill="#d3d3d3"/><rect x="103.5" y="232.2" width="2.6" height="3.0" fill="#ededed"/><rect x="106.1" y="232.2" width="2.6" height="3.0" fill="#e3e3e3"/><rect x="108.7" y="232.2" width="2.6" height="3.0" fill="#efefef"/><rect x="111.3" y="232.2" width="2.6" height="3.0" fill="#ededed"/><rect x="113.9" y="232.2" width="2.6" height="3.0" fill="#e9e9e9"/><rect x="116.5" y="232.2" width="2.6" height="3.0" fill="#efefef"/><rect x="119.1" y="232.2" width="2.6" height="3.0" fill="#d6d6d6"/><rect x="121.7" y="232.2" width="2.6" height="3.0" fill="#ececec"/><rect x="124.3" y="232.2" width="2.6" height="3.0" fill="#f1f1f1"/><rect x="126.9" y="232.2" width="2.6" height="3.0" fill="#d9d9d9"/><rect x="129.5" y="232.2" width="2.6" height="3.0" fill="#ededed"/><rect x="132.1" y="232.2" width="2.6" height="3.0" fill="#f5f5f5"/><rect x="134.7" y="232.2" width="2.6" height="3.0" fill="#e4e4e4"/><rect x="137.3" y="232.2" width="2.6" height="3.0" fill="#e1e1e1"/><rect x="139.9" y="232.2" width="2.6" height="3.0" fill="#ececec"/><rect x="142.5" y="232.2" width="2.6" height="3.0" fill="#eeeeee"/><rect x="145.1" y="232.2" width="2.6" height="3.0" fill="#eaeaea"/><rect x="147.7" y="232.2" width="2.6" height="3.0" fill="#d8d8d8"/><rect x="150.3" y="232.2" width="2.6" height="3.0" fill="#ebebeb"/><rect x="152.9" y="232.2" width="2.6" height="3.0" fill="#f1f1f1"/><rect x="199.7" y="232.2" width="2.6" height="3.0" fill="#e0e0e0"/><rect x="202.3" y="232.2" width="2.6" height="3.0" fill="#d5d5d5"/><rect x="204.9" y="232.2" width="2.6" height="3.0" fill="#cecece"/><rect x="207.5" y="232.2" width="2.6" height="3.0" fill="#dadada"/><rect x="210.1" y="232.2" width="2.6" height="3.0" fill="#e0e0e0"/><rect x="212.7" y="232.2" width="2.6" height="3.0" fill="#dadada"/><rect x="215.3" y="232.2" width="2.6" height="3.0" fill="#c7c7c7"/><rect x="217.9" y="232.2" width="2.6" height="3.0" fill="#f1f1f1"/><rect x="220.5" y="232.2" width="2.6" height="3.0" fill="#cccccc"/><rect x="223.1" y="232.2" width="2.6" height="3.0" fill="#e6e6e6"/><rect x="225.7" y="232.2" width="2.6" height="3.0" fill="#cccccc"/><rect x="228.3" y="232.2" width="2.6" height="3.0" fill="#f1f1f1"/><rect x="230.9" y="232.2" width="2.6" height="3.0" fill="#d4d4d4"/><rect x="233.5" y="232.2" width="2.6" height="3.0" fill="#d0d0d0"/><rect x="236.1" y="232.2" width="2.6" height="3.0" fill="#d2d2d2"/><rect x="238.7" y="232.2" width="2.6" height="3.0" fill="#e0e0e0"/><rect x="241.3" y="232.2" width="2.6" height="3.0" fill="#e9e9e9"/><rect x="243.9" y="232.2" width="2.6" height="3.0" fill="#dedede"/><rect x="246.5" y="232.2" width="2.6" height="3.0" fill="#cdcdcd"/><rect x="249.1" y="232.2" width="2.6" height="3.0" fill="#e1e1e1"/><rect x="251.7" y="232.2" width="2.6" height="3.0" fill="#dedede"/><rect x="254.3" y="232.2" width="2.6" height="3.0" fill="#dbdbdb"/><rect x="256.9" y="232.2" width="2.6" height="3.0" fill="#c3c3c3"/><rect x="303.7" y="232.2" width="2.6" height="3.0" fill="#d7d7d7"/><rect x="306.3" y="232.2" width="2.6" height="3.0" fill="#dfdfdf"/><rect x="308.9" y="232.2" width="2.6" height="3.0" fill="#dddddd"/><rect x="311.5" y="232.2" width="2.6" height="3.0" fill="#d8d8d8"/><rect x="314.1" y="232.2" width="2.6" height="3.0" fill="#e8e8e8"/><rect x="316.7" y="232.2" width="2.6" height="3.0" fill="#e8e8e8"/><rect x="319.3" y="232.2" width="2.6" height="3.0" fill="#eaeaea"/><rect x="321.9" y="232.2" width="2.6" height="3.0" fill="#d2d2d2"/><rect x="324.5" y="232.2" width="2.6" height="3.0" fill="#dddddd"/><rect x="327.1" y="232.2" width="2.6" height="3.0" fill="#d8d8d8"/><rect x="332.3" y="232.2" width="2.6" height="3.0" fill="#d3d3d3"/><rect x="337.5" y="232.2" width="2.6" height="3.0" fill="#d9d9d9"/><rect x="340.1" y="232.2" width="2.6" height="3.0" fill="#eeeeee"/><rect x="342.7" y="232.2" width="2.6" height="3.0" fill="#cfcfcf"/><rect x="345.3" y="232.2" width="2.6" height="3.0" fill="#dadada"/><rect x="347.9" y="232.2" width="2.6" height="3.0" fill="#dedede"/><rect x="90.5" y="235.2" width="2.6" height="3.0" fill="#cacaca"/><rect x="93.1" y="235.2" width="2.6" height="3.0" fill="#c8c8c8"/><rect x="95.7" y="235.2" width="2.6" height="3.0" fill="#c3c3c3"/><rect x="98.3" y="235.2" width="2.6" height="3.0" fill="#cfcfcf"/><rect x="100.9" y="235.2" width="2.6" height="3.0" fill="#c6c6c6"/><rect x="103.5" y="235.2" width="2.6" height="3.0" fill="#c6c6c6"/><rect x="106.1" y="235.2" width="2.6" height="3.0" fill="#c6c6c6"/><rect x="108.7" y="235.2" width="2.6" height="3.0" fill="#c6c6c6"/><rect x="111.3" y="235.2" width="2.6" height="3.0" fill="#bdbdbd"/><rect x="113.9" y="235.2" width="2.6" height="3.0" fill="#c4c4c4"/><rect x="116.5" y="235.2" width="2.6" height="3.0" fill="#e5e5e5"/><rect x="119.1" y="235.2" width="2.6" height="3.0" fill="#bbbbbb"/><rect x="121.7" y="235.2" width="2.6" height="3.0" fill="#c6c6c6"/><rect x="124.3" y="235.2" width="2.6" height="3.0" fill="#c7c7c7"/><rect x="126.9" y="235.2" width="2.6" height="3.0" fill="#bababa"/><rect x="129.5" y="235.2" width="2.6" height="3.0" fill="#c8c8c8"/><rect x="132.1" y="235.2" width="2.6" height="3.0" fill="#e8e8e8"/><rect x="134.7" y="235.2" width="2.6" height="3.0" fill="#d5d5d5"/><rect x="137.3" y="235.2" width="2.6" height="3.0" fill="#e1e1e1"/><rect x="139.9" y="235.2" width="2.6" height="3.0" fill="#c8c8c8"/><rect x="142.5" y="235.2" width="2.6" height="3.0" fill="#b0b0b0"/><rect x="145.1" y="235.2" width="2.6" height="3.0" fill="#d2d2d2"/><rect x="147.7" y="235.2" width="2.6" height="3.0" fill="#c0c0c0"/><rect x="150.3" y="235.2" width="2.6" height="3.0" fill="#c1c1c1"/><rect x="152.9" y="235.2" width="2.6" height="3.0" fill="#d2d2d2"/><rect x="199.7" y="235.2" width="2.6" height="3.0" fill="#cdcdcd"/><rect x="202.3" y="235.2" width="2.6" height="3.0" fill="#bfbfbf"/><rect x="204.9" y="235.2" width="2.6" height="3.0" fill="#bababa"/><rect x="207.5" y="235.2" width="2.6" height="3.0" fill="#c6c6c6"/><rect x="210.1" y="235.2" width="2.6" height="3.0" fill="#cacaca"/><rect x="212.7" y="235.2" width="2.6" height="3.0" fill="#c5c5c5"/><rect x="215.3" y="235.2" width="2.6" height="3.0" fill="#a2a2a2"/><rect x="217.9" y="235.2" width="2.6" height="3.0" fill="#ececec"/><rect x="220.5" y="235.2" width="2.6" height="3.0" fill="#a4a4a4"/><rect x="223.1" y="235.2" width="2.6" height="3.0" fill="#c8c8c8"/><rect x="225.7" y="235.2" width="2.6" height="3.0" fill="#a0a0a0"/><rect x="228.3" y="235.2" width="2.6" height="3.0" fill="#e9e9e9"/><rect x="230.9" y="235.2" width="2.6" height="3.0" fill="#b5b5b5"/><rect x="233.5" y="235.2" width="2.6" height="3.0" fill="#a8a8a8"/><rect x="236.1" y="235.2" width="2.6" height="3.0" fill="#d1d1d1"/><rect x="238.7" y="235.2" width="2.6" height="3.0" fill="#dfdfdf"/><rect x="241.3" y="235.2" width="2.6" height="3.0" fill="#eaeaea"/><rect x="243.9" y="235.2" width="2.6" height="3.0" fill="#b9b9b9"/><rect x="246.5" y="235.2" width="2.6" height="3.0" fill="#b0b0b0"/><rect x="249.1" y="235.2" width="2.6" height="3.0" fill="#e7e7e7"/><rect x="251.7" y="235.2" width="2.6" height="3.0" fill="#d0d0d0"/><rect x="254.3" y="235.2" width="2.6" height="3.0" fill="#aaaaaa"/><rect x="256.9" y="235.2" width="2.6" height="3.0" fill="#bababa"/><rect x="259.5" y="235.2" width="2.6" height="3.0" fill="#d6d6d6"/><rect x="303.7" y="235.2" width="2.6" height="3.0" fill="#bebebe"/><rect x="306.3" y="235.2" width="2.6" height="3.0" fill="#cfcfcf"/><rect x="308.9" y="235.2" width="2.6" height="3.0" fill="#c0c0c0"/><rect x="311.5" y="235.2" width="2.6" height="3.0" fill="#bbbbbb"/><rect x="314.1" y="235.2" width="2.6" height="3.0" fill="#e3e3e3"/><rect x="316.7" y="235.2" width="2.6" height="3.0" fill="#e3e3e3"/><rect x="319.3" y="235.2" width="2.6" height="3.0" fill="#cccccc"/><rect x="321.9" y="235.2" width="2.6" height="3.0" fill="#a9a9a9"/><rect x="324.5" y="235.2" width="2.6" height="3.0" fill="#b7b7b7"/><rect x="327.1" y="235.2" width="2.6" height="3.0" fill="#bbbbbb"/><rect x="329.7" y="235.2" width="2.6" height="3.0" fill="#f1f1f1"/><rect x="332.3" y="235.2" width="2.6" height="3.0" fill="#bbbbbb"/><rect x="334.9" y="235.2" width="2.6" height="3.0" fill="#eeeeee"/><rect x="337.5" y="235.2" width="2.6" height="3.0" fill="#cbcbcb"/><rect x="340.1" y="235.2" width="2.6" height="3.0" fill="#cecece"/><rect x="342.7" y="235.2" width="2.6" height="3.0" fill="#c0c0c0"/><rect x="345.3" y="235.2" width="2.6" height="3.0" fill="#bcbcbc"/><rect x="347.9" y="235.2" width="2.6" height="3.0" fill="#c8c8c8"/><rect x="108.7" y="238.1" width="2.6" height="3.0" fill="#eeeeee"/><rect x="111.3" y="238.1" width="2.6" height="3.0" fill="#ededed"/><rect x="129.5" y="238.1" width="2.6" height="3.0" fill="#eaeaea"/><rect x="103.5" y="246.0" width="2.6" height="3.0" fill="#e7e7e7"/><rect x="106.1" y="246.0" width="2.6" height="3.0" fill="#e0e0e0"/><rect x="108.7" y="246.0" width="2.6" height="3.0" fill="#eaeaea"/><rect x="111.3" y="246.0" width="2.6" height="3.0" fill="#f9f9f9"/><rect x="113.9" y="246.0" width="2.6" height="3.0" fill="#e4e4e4"/><rect x="116.5" y="246.0" width="2.6" height="3.0" fill="#e1e1e1"/><rect x="119.1" y="246.0" width="2.6" height="3.0" fill="#f2f2f2"/><rect x="121.7" y="246.0" width="2.6" height="3.0" fill="#f6f6f6"/><rect x="124.3" y="246.0" width="2.6" height="3.0" fill="#efefef"/><rect x="126.9" y="246.0" width="2.6" height="3.0" fill="#ededed"/><rect x="129.5" y="246.0" width="2.6" height="3.0" fill="#f5f5f5"/><rect x="132.1" y="246.0" width="2.6" height="3.0" fill="#f8f8f8"/><rect x="134.7" y="246.0" width="2.6" height="3.0" fill="#f2f2f2"/><rect x="137.3" y="246.0" width="2.6" height="3.0" fill="#f2f2f2"/><rect x="199.7" y="246.0" width="2.6" height="3.0" fill="#dcdcdc"/><rect x="202.3" y="246.0" width="2.6" height="3.0" fill="#d2d2d2"/><rect x="204.9" y="246.0" width="2.6" height="3.0" fill="#dddddd"/><rect x="207.5" y="246.0" width="2.6" height="3.0" fill="#dfdfdf"/><rect x="210.1" y="246.0" width="2.6" height="3.0" fill="#eaeaea"/><rect x="212.7" y="246.0" width="2.6" height="3.0" fill="#d3d3d3"/><rect x="215.3" y="246.0" width="2.6" height="3.0" fill="#d3d3d3"/><rect x="217.9" y="246.0" width="2.6" height="3.0" fill="#e1e1e1"/><rect x="220.5" y="246.0" width="2.6" height="3.0" fill="#d7d7d7"/><rect x="223.1" y="246.0" width="2.6" height="3.0" fill="#d6d6d6"/><rect x="225.7" y="246.0" width="2.6" height="3.0" fill="#d6d6d6"/><rect x="228.3" y="246.0" width="2.6" height="3.0" fill="#ececec"/><rect x="230.9" y="246.0" width="2.6" height="3.0" fill="#eaeaea"/><rect x="233.5" y="246.0" width="2.6" height="3.0" fill="#e4e4e4"/><rect x="236.1" y="246.0" width="2.6" height="3.0" fill="#c8c8c8"/><rect x="238.7" y="246.0" width="2.6" height="3.0" fill="#e8e8e8"/><rect x="241.3" y="246.0" width="2.6" height="3.0" fill="#dddddd"/><rect x="243.9" y="246.0" width="2.6" height="3.0" fill="#dadada"/><rect x="246.5" y="246.0" width="2.6" height="3.0" fill="#c7c7c7"/><rect x="249.1" y="246.0" width="2.6" height="3.0" fill="#f1f1f1"/><rect x="251.7" y="246.0" width="2.6" height="3.0" fill="#dfdfdf"/><rect x="254.3" y="246.0" width="2.6" height="3.0" fill="#e0e0e0"/><rect x="256.9" y="246.0" width="2.6" height="3.0" fill="#d5d5d5"/><rect x="259.5" y="246.0" width="2.6" height="3.0" fill="#f1f1f1"/><rect x="306.3" y="246.0" width="2.6" height="3.0" fill="#dedede"/><rect x="308.9" y="246.0" width="2.6" height="3.0" fill="#dedede"/><rect x="311.5" y="246.0" width="2.6" height="3.0" fill="#dbdbdb"/><rect x="314.1" y="246.0" width="2.6" height="3.0" fill="#dbdbdb"/><rect x="316.7" y="246.0" width="2.6" height="3.0" fill="#f9f9f9"/><rect x="319.3" y="246.0" width="2.6" height="3.0" fill="#e1e1e1"/><rect x="321.9" y="246.0" width="2.6" height="3.0" fill="#dedede"/><rect x="324.5" y="246.0" width="2.6" height="3.0" fill="#e0e0e0"/><rect x="327.1" y="246.0" width="2.6" height="3.0" fill="#e0e0e0"/><rect x="329.7" y="246.0" width="2.6" height="3.0" fill="#f6f6f6"/><rect x="332.3" y="246.0" width="2.6" height="3.0" fill="#e4e4e4"/><rect x="334.9" y="246.0" width="2.6" height="3.0" fill="#f9f9f9"/><rect x="337.5" y="246.0" width="2.6" height="3.0" fill="#e1e1e1"/><rect x="340.1" y="246.0" width="2.6" height="3.0" fill="#e3e3e3"/><rect x="342.7" y="246.0" width="2.6" height="3.0" fill="#dedede"/><rect x="345.3" y="246.0" width="2.6" height="3.0" fill="#e7e7e7"/><rect x="103.5" y="248.9" width="2.6" height="3.0" fill="#d3d3d3"/><rect x="106.1" y="248.9" width="2.6" height="3.0" fill="#d0d0d0"/><rect x="108.7" y="248.9" width="2.6" height="3.0" fill="#b4b4b4"/><rect x="111.3" y="248.9" width="2.6" height="3.0" fill="#d0d0d0"/><rect x="113.9" y="248.9" width="2.6" height="3.0" fill="#c2c2c2"/><rect x="116.5" y="248.9" width="2.6" height="3.0" fill="#cfcfcf"/><rect x="119.1" y="248.9" width="2.6" height="3.0" fill="#bbbbbb"/><rect x="121.7" y="248.9" width="2.6" height="3.0" fill="#cdcdcd"/><rect x="124.3" y="248.9" width="2.6" height="3.0" fill="#d1d1d1"/><rect x="126.9" y="248.9" width="2.6" height="3.0" fill="#c9c9c9"/><rect x="129.5" y="248.9" width="2.6" height="3.0" fill="#bfbfbf"/><rect x="132.1" y="248.9" width="2.6" height="3.0" fill="#c8c8c8"/><rect x="134.7" y="248.9" width="2.6" height="3.0" fill="#c8c8c8"/><rect x="137.3" y="248.9" width="2.6" height="3.0" fill="#cacaca"/><rect x="199.7" y="248.9" width="2.6" height="3.0" fill="#c9c9c9"/><rect x="202.3" y="248.9" width="2.6" height="3.0" fill="#c6c6c6"/><rect x="204.9" y="248.9" width="2.6" height="3.0" fill="#b9b9b9"/><rect x="207.5" y="248.9" width="2.6" height="3.0" fill="#c8c8c8"/><rect x="210.1" y="248.9" width="2.6" height="3.0" fill="#f3f3f3"/><rect x="212.7" y="248.9" width="2.6" height="3.0" fill="#d1d1d1"/><rect x="215.3" y="248.9" width="2.6" height="3.0" fill="#c6c6c6"/><rect x="217.9" y="248.9" width="2.6" height="3.0" fill="#c8c8c8"/><rect x="220.5" y="248.9" width="2.6" height="3.0" fill="#c6c6c6"/><rect x="223.1" y="248.9" width="2.6" height="3.0" fill="#bbbbbb"/><rect x="225.7" y="248.9" width="2.6" height="3.0" fill="#c6c6c6"/><rect x="228.3" y="248.9" width="2.6" height="3.0" fill="#c3c3c3"/><rect x="230.9" y="248.9" width="2.6" height="3.0" fill="#f1f1f1"/><rect x="233.5" y="248.9" width="2.6" height="3.0" fill="#c5c5c5"/><rect x="236.1" y="248.9" width="2.6" height="3.0" fill="#a0a0a0"/><rect x="238.7" y="248.9" width="2.6" height="3.0" fill="#dedede"/><rect x="241.3" y="248.9" width="2.6" height="3.0" fill="#bfbfbf"/><rect x="243.9" y="248.9" width="2.6" height="3.0" fill="#b8b8b8"/><rect x="246.5" y="248.9" width="2.6" height="3.0" fill="#9b9b9b"/><rect x="249.1" y="248.9" width="2.6" height="3.0" fill="#e5e5e5"/><rect x="251.7" y="248.9" width="2.6" height="3.0" fill="#aeaeae"/><rect x="254.3" y="248.9" width="2.6" height="3.0" fill="#adadad"/><rect x="256.9" y="248.9" width="2.6" height="3.0" fill="#e3e3e3"/><rect x="259.5" y="248.9" width="2.6" height="3.0" fill="#f0f0f0"/><rect x="306.3" y="248.9" width="2.6" height="3.0" fill="#cacaca"/><rect x="308.9" y="248.9" width="2.6" height="3.0" fill="#cdcdcd"/><rect x="311.5" y="248.9" width="2.6" height="3.0" fill="#bfbfbf"/><rect x="314.1" y="248.9" width="2.6" height="3.0" fill="#d4d4d4"/><rect x="316.7" y="248.9" width="2.6" height="3.0" fill="#f5f5f5"/><rect x="319.3" y="248.9" width="2.6" height="3.0" fill="#cbcbcb"/><rect x="321.9" y="248.9" width="2.6" height="3.0" fill="#bcbcbc"/><rect x="324.5" y="248.9" width="2.6" height="3.0" fill="#b1b1b1"/><rect x="327.1" y="248.9" width="2.6" height="3.0" fill="#c6c6c6"/><rect x="329.7" y="248.9" width="2.6" height="3.0" fill="#f3f3f3"/><rect x="332.3" y="248.9" width="2.6" height="3.0" fill="#cdcdcd"/><rect x="334.9" y="248.9" width="2.6" height="3.0" fill="#f5f5f5"/><rect x="337.5" y="248.9" width="2.6" height="3.0" fill="#cbcbcb"/><rect x="340.1" y="248.9" width="2.6" height="3.0" fill="#d7d7d7"/><rect x="342.7" y="248.9" width="2.6" height="3.0" fill="#f7f7f7"/><rect x="345.3" y="248.9" width="2.6" height="3.0" fill="#cdcdcd"/><rect x="106.1" y="251.9" width="2.6" height="3.0" fill="#f3f3f3"/><rect x="111.3" y="251.9" width="2.6" height="3.0" fill="#f3f3f3"/><rect x="113.9" y="251.9" width="2.6" height="3.0" fill="#f8f8f8"/><rect x="116.5" y="251.9" width="2.6" height="3.0" fill="#f4f4f4"/><rect x="119.1" y="251.9" width="2.6" height="3.0" fill="#f8f8f8"/><rect x="121.7" y="251.9" width="2.6" height="3.0" fill="#f9f9f9"/><rect x="126.9" y="251.9" width="2.6" height="3.0" fill="#f5f5f5"/><rect x="132.1" y="251.9" width="2.6" height="3.0" fill="#f4f4f4"/><rect x="134.7" y="251.9" width="2.6" height="3.0" fill="#e3e3e3"/><rect x="137.3" y="251.9" width="2.6" height="3.0" fill="#f8f8f8"/><rect x="199.7" y="251.9" width="2.6" height="3.0" fill="#f6f6f6"/><rect x="202.3" y="251.9" width="2.6" height="3.0" fill="#f6f6f6"/><rect x="204.9" y="251.9" width="2.6" height="3.0" fill="#f9f9f9"/><rect x="207.5" y="251.9" width="2.6" height="3.0" fill="#f7f7f7"/><rect x="215.3" y="251.9" width="2.6" height="3.0" fill="#f1f1f1"/><rect x="217.9" y="251.9" width="2.6" height="3.0" fill="#f9f9f9"/><rect x="220.5" y="251.9" width="2.6" height="3.0" fill="#f4f4f4"/><rect x="223.1" y="251.9" width="2.6" height="3.0" fill="#f8f8f8"/><rect x="225.7" y="251.9" width="2.6" height="3.0" fill="#f4f4f4"/><rect x="228.3" y="251.9" width="2.6" height="3.0" fill="#f9f9f9"/><rect x="230.9" y="251.9" width="2.6" height="3.0" fill="#f5f5f5"/><rect x="233.5" y="251.9" width="2.6" height="3.0" fill="#f3f3f3"/><rect x="236.1" y="251.9" width="2.6" height="3.0" fill="#eeeeee"/><rect x="238.7" y="251.9" width="2.6" height="3.0" fill="#f3f3f3"/><rect x="241.3" y="251.9" width="2.6" height="3.0" fill="#f8f8f8"/><rect x="243.9" y="251.9" width="2.6" height="3.0" fill="#f7f7f7"/><rect x="246.5" y="251.9" width="2.6" height="3.0" fill="#f2f2f2"/><rect x="256.9" y="251.9" width="2.6" height="3.0" fill="#f0f0f0"/><rect x="306.3" y="251.9" width="2.6" height="3.0" fill="#f0f0f0"/><rect x="308.9" y="251.9" width="2.6" height="3.0" fill="#f6f6f6"/><rect x="311.5" y="251.9" width="2.6" height="3.0" fill="#f9f9f9"/><rect x="314.1" y="251.9" width="2.6" height="3.0" fill="#f3f3f3"/><rect x="316.7" y="251.9" width="2.6" height="3.0" fill="#f8f8f8"/><rect x="319.3" y="251.9" width="2.6" height="3.0" fill="#f1f1f1"/><rect x="321.9" y="251.9" width="2.6" height="3.0" fill="#f7f7f7"/><rect x="327.1" y="251.9" width="2.6" height="3.0" fill="#f6f6f6"/><rect x="329.7" y="251.9" width="2.6" height="3.0" fill="#f7f7f7"/><rect x="332.3" y="251.9" width="2.6" height="3.0" fill="#f3f3f3"/><rect x="334.9" y="251.9" width="2.6" height="3.0" fill="#f8f8f8"/><rect x="337.5" y="251.9" width="2.6" height="3.0" fill="#f1f1f1"/><rect x="342.7" y="251.9" width="2.6" height="3.0" fill="#f9f9f9"/><rect x="345.3" y="251.9" width="2.6" height="3.0" fill="#f4f4f4"/><rect x="95.7" y="259.7" width="2.6" height="3.0" fill="#e9e9e9"/><rect x="98.3" y="259.7" width="2.6" height="3.0" fill="#cccccc"/><rect x="100.9" y="259.7" width="2.6" height="3.0" fill="#d3d3d3"/><rect x="103.5" y="259.7" width="2.6" height="3.0" fill="#cacaca"/><rect x="106.1" y="259.7" width="2.6" height="3.0" fill="#e9e9e9"/><rect x="108.7" y="259.7" width="2.6" height="3.0" fill="#e7e7e7"/><rect x="111.3" y="259.7" width="2.6" height="3.0" fill="#d9d9d9"/><rect x="113.9" y="259.7" width="2.6" height="3.0" fill="#e7e7e7"/><rect x="116.5" y="259.7" width="2.6" height="3.0" fill="#e9e9e9"/><rect x="119.1" y="259.7" width="2.6" height="3.0" fill="#fafafa"/><rect x="121.7" y="259.7" width="2.6" height="3.0" fill="#cecece"/><rect x="126.9" y="259.7" width="2.6" height="3.0" fill="#e4e4e4"/><rect x="129.5" y="259.7" width="2.6" height="3.0" fill="#d0d0d0"/><rect x="132.1" y="259.7" width="2.6" height="3.0" fill="#e2e2e2"/><rect x="137.3" y="259.7" width="2.6" height="3.0" fill="#c1c1c1"/><rect x="139.9" y="259.7" width="2.6" height="3.0" fill="#e4e4e4"/><rect x="142.5" y="259.7" width="2.6" height="3.0" fill="#d7d7d7"/><rect x="145.1" y="259.7" width="2.6" height="3.0" fill="#e6e6e6"/><rect x="147.7" y="259.7" width="2.6" height="3.0" fill="#eeeeee"/><rect x="202.3" y="259.7" width="2.6" height="3.0" fill="#b3b3b3"/><rect x="204.9" y="259.7" width="2.6" height="3.0" fill="#dadada"/><rect x="207.5" y="259.7" width="2.6" height="3.0" fill="#d4d4d4"/><rect x="210.1" y="259.7" width="2.6" height="3.0" fill="#eaeaea"/><rect x="212.7" y="259.7" width="2.6" height="3.0" fill="#cacaca"/><rect x="215.3" y="259.7" width="2.6" height="3.0" fill="#dcdcdc"/><rect x="217.9" y="259.7" width="2.6" height="3.0" fill="#d2d2d2"/><rect x="220.5" y="259.7" width="2.6" height="3.0" fill="#ededed"/><rect x="223.1" y="259.7" width="2.6" height="3.0" fill="#cecece"/><rect x="225.7" y="259.7" width="2.6" height="3.0" fill="#dbdbdb"/><rect x="228.3" y="259.7" width="2.6" height="3.0" fill="#c3c3c3"/><rect x="230.9" y="259.7" width="2.6" height="3.0" fill="#e0e0e0"/><rect x="233.5" y="259.7" width="2.6" height="3.0" fill="#b9b9b9"/><rect x="236.1" y="259.7" width="2.6" height="3.0" fill="#c0c0c0"/><rect x="238.7" y="259.7" width="2.6" height="3.0" fill="#c9c9c9"/><rect x="241.3" y="259.7" width="2.6" height="3.0" fill="#dddddd"/><rect x="243.9" y="259.7" width="2.6" height="3.0" fill="#c1c1c1"/><rect x="246.5" y="259.7" width="2.6" height="3.0" fill="#bcbcbc"/><rect x="249.1" y="259.7" width="2.6" height="3.0" fill="#d3d3d3"/><rect x="251.7" y="259.7" width="2.6" height="3.0" fill="#e1e1e1"/><rect x="254.3" y="259.7" width="2.6" height="3.0" fill="#b4b4b4"/><rect x="256.9" y="259.7" width="2.6" height="3.0" fill="#c2c2c2"/><rect x="259.5" y="259.7" width="2.6" height="3.0" fill="#dfdfdf"/><rect x="306.3" y="259.7" width="2.6" height="3.0" fill="#d3d3d3"/><rect x="308.9" y="259.7" width="2.6" height="3.0" fill="#d5d5d5"/><rect x="311.5" y="259.7" width="2.6" height="3.0" fill="#d0d0d0"/><rect x="314.1" y="259.7" width="2.6" height="3.0" fill="#d0d0d0"/><rect x="316.7" y="259.7" width="2.6" height="3.0" fill="#f9f9f9"/><rect x="319.3" y="259.7" width="2.6" height="3.0" fill="#d6d6d6"/><rect x="321.9" y="259.7" width="2.6" height="3.0" fill="#c4c4c4"/><rect x="324.5" y="259.7" width="2.6" height="3.0" fill="#d2d2d2"/><rect x="327.1" y="259.7" width="2.6" height="3.0" fill="#d1d1d1"/><rect x="329.7" y="259.7" width="2.6" height="3.0" fill="#f6f6f6"/><rect x="332.3" y="259.7" width="2.6" height="3.0" fill="#dadada"/><rect x="334.9" y="259.7" width="2.6" height="3.0" fill="#f9f9f9"/><rect x="337.5" y="259.7" width="2.6" height="3.0" fill="#d6d6d6"/><rect x="340.1" y="259.7" width="2.6" height="3.0" fill="#cbcbcb"/><rect x="342.7" y="259.7" width="2.6" height="3.0" fill="#dadada"/><rect x="345.3" y="259.7" width="2.6" height="3.0" fill="#dcdcdc"/><rect x="95.7" y="262.7" width="2.6" height="3.0" fill="#e0e0e0"/><rect x="98.3" y="262.7" width="2.6" height="3.0" fill="#c9c9c9"/><rect x="100.9" y="262.7" width="2.6" height="3.0" fill="#ececec"/><rect x="103.5" y="262.7" width="2.6" height="3.0" fill="#d0d0d0"/><rect x="106.1" y="262.7" width="2.6" height="3.0" fill="#cecece"/><rect x="108.7" y="262.7" width="2.6" height="3.0" fill="#d2d2d2"/><rect x="111.3" y="262.7" width="2.6" height="3.0" fill="#d8d8d8"/><rect x="113.9" y="262.7" width="2.6" height="3.0" fill="#bdbdbd"/><rect x="116.5" y="262.7" width="2.6" height="3.0" fill="#d4d4d4"/><rect x="121.7" y="262.7" width="2.6" height="3.0" fill="#dfdfdf"/><rect x="126.9" y="262.7" width="2.6" height="3.0" fill="#cecece"/><rect x="129.5" y="262.7" width="2.6" height="3.0" fill="#bdbdbd"/><rect x="132.1" y="262.7" width="2.6" height="3.0" fill="#c7c7c7"/><rect x="137.3" y="262.7" width="2.6" height="3.0" fill="#bcbcbc"/><rect x="139.9" y="262.7" width="2.6" height="3.0" fill="#dbdbdb"/><rect x="142.5" y="262.7" width="2.6" height="3.0" fill="#d0d0d0"/><rect x="145.1" y="262.7" width="2.6" height="3.0" fill="#d0d0d0"/><rect x="147.7" y="262.7" width="2.6" height="3.0" fill="#ededed"/><rect x="199.7" y="262.7" width="2.6" height="3.0" fill="#dfdfdf"/><rect x="202.3" y="262.7" width="2.6" height="3.0" fill="#cacaca"/><rect x="204.9" y="262.7" width="2.6" height="3.0" fill="#b8b8b8"/><rect x="207.5" y="262.7" width="2.6" height="3.0" fill="#d4d4d4"/><rect x="210.1" y="262.7" width="2.6" height="3.0" fill="#e8e8e8"/><rect x="212.7" y="262.7" width="2.6" height="3.0" fill="#c6c6c6"/><rect x="215.3" y="262.7" width="2.6" height="3.0" fill="#cacaca"/><rect x="217.9" y="262.7" width="2.6" height="3.0" fill="#d2d2d2"/><rect x="220.5" y="262.7" width="2.6" height="3.0" fill="#eeeeee"/><rect x="223.1" y="262.7" width="2.6" height="3.0" fill="#d2d2d2"/><rect x="225.7" y="262.7" width="2.6" height="3.0" fill="#dedede"/><rect x="228.3" y="262.7" width="2.6" height="3.0" fill="#bfbfbf"/><rect x="230.9" y="262.7" width="2.6" height="3.0" fill="#ececec"/><rect x="233.5" y="262.7" width="2.6" height="3.0" fill="#a5a5a5"/><rect x="236.1" y="262.7" width="2.6" height="3.0" fill="#bdbdbd"/><rect x="238.7" y="262.7" width="2.6" height="3.0" fill="#c2c2c2"/><rect x="241.3" y="262.7" width="2.6" height="3.0" fill="#dbdbdb"/><rect x="243.9" y="262.7" width="2.6" height="3.0" fill="#bdbdbd"/><rect x="246.5" y="262.7" width="2.6" height="3.0" fill="#b6b6b6"/><rect x="249.1" y="262.7" width="2.6" height="3.0" fill="#cdcdcd"/><rect x="251.7" y="262.7" width="2.6" height="3.0" fill="#e9e9e9"/><rect x="254.3" y="262.7" width="2.6" height="3.0" fill="#bdbdbd"/><rect x="256.9" y="262.7" width="2.6" height="3.0" fill="#d3d3d3"/><rect x="259.5" y="262.7" width="2.6" height="3.0" fill="#cecece"/><rect x="306.3" y="262.7" width="2.6" height="3.0" fill="#c6c6c6"/><rect x="308.9" y="262.7" width="2.6" height="3.0" fill="#cfcfcf"/><rect x="311.5" y="262.7" width="2.6" height="3.0" fill="#c5c5c5"/><rect x="314.1" y="262.7" width="2.6" height="3.0" fill="#d4d4d4"/><rect x="316.7" y="262.7" width="2.6" height="3.0" fill="#eeeeee"/><rect x="319.3" y="262.7" width="2.6" height="3.0" fill="#c8c8c8"/><rect x="321.9" y="262.7" width="2.6" height="3.0" fill="#cecece"/><rect x="324.5" y="262.7" width="2.6" height="3.0" fill="#bcbcbc"/><rect x="327.1" y="262.7" width="2.6" height="3.0" fill="#cdcdcd"/><rect x="329.7" y="262.7" width="2.6" height="3.0" fill="#ececec"/><rect x="332.3" y="262.7" width="2.6" height="3.0" fill="#cbcbcb"/><rect x="334.9" y="262.7" width="2.6" height="3.0" fill="#eeeeee"/><rect x="337.5" y="262.7" width="2.6" height="3.0" fill="#c8c8c8"/><rect x="340.1" y="262.7" width="2.6" height="3.0" fill="#c9c9c9"/><rect x="342.7" y="262.7" width="2.6" height="3.0" fill="#d5d5d5"/><rect x="345.3" y="262.7" width="2.6" height="3.0" fill="#cdcdcd"/><rect x="98.3" y="273.4" width="2.6" height="3.0" fill="#efefef"/><rect x="100.9" y="273.4" width="2.6" height="3.0" fill="#cdcdcd"/><rect x="103.5" y="273.4" width="2.6" height="3.0" fill="#d7d7d7"/><rect x="106.1" y="273.4" width="2.6" height="3.0" fill="#dbdbdb"/><rect x="108.7" y="273.4" width="2.6" height="3.0" fill="#f3f3f3"/><rect x="111.3" y="273.4" width="2.6" height="3.0" fill="#efefef"/><rect x="113.9" y="273.4" width="2.6" height="3.0" fill="#eaeaea"/><rect x="116.5" y="273.4" width="2.6" height="3.0" fill="#dedede"/><rect x="119.1" y="273.4" width="2.6" height="3.0" fill="#dfdfdf"/><rect x="121.7" y="273.4" width="2.6" height="3.0" fill="#f2f2f2"/><rect x="124.3" y="273.4" width="2.6" height="3.0" fill="#e2e2e2"/><rect x="126.9" y="273.4" width="2.6" height="3.0" fill="#eeeeee"/><rect x="129.5" y="273.4" width="2.6" height="3.0" fill="#d4d4d4"/><rect x="132.1" y="273.4" width="2.6" height="3.0" fill="#e1e1e1"/><rect x="134.7" y="273.4" width="2.6" height="3.0" fill="#dadada"/><rect x="137.3" y="273.4" width="2.6" height="3.0" fill="#e7e7e7"/><rect x="139.9" y="273.4" width="2.6" height="3.0" fill="#d8d8d8"/><rect x="142.5" y="273.4" width="2.6" height="3.0" fill="#dbdbdb"/><rect x="145.1" y="273.4" width="2.6" height="3.0" fill="#e8e8e8"/><rect x="199.7" y="273.4" width="2.6" height="3.0" fill="#d9d9d9"/><rect x="202.3" y="273.4" width="2.6" height="3.0" fill="#dcdcdc"/><rect x="204.9" y="273.4" width="2.6" height="3.0" fill="#cacaca"/><rect x="207.5" y="273.4" width="2.6" height="3.0" fill="#d9d9d9"/><rect x="210.1" y="273.4" width="2.6" height="3.0" fill="#d2d2d2"/><rect x="212.7" y="273.4" width="2.6" height="3.0" fill="#dadada"/><rect x="215.3" y="273.4" width="2.6" height="3.0" fill="#d6d6d6"/><rect x="217.9" y="273.4" width="2.6" height="3.0" fill="#d4d4d4"/><rect x="220.5" y="273.4" width="2.6" height="3.0" fill="#d1d1d1"/><rect x="223.1" y="273.4" width="2.6" height="3.0" fill="#cdcdcd"/><rect x="225.7" y="273.4" width="2.6" height="3.0" fill="#c6c6c6"/><rect x="228.3" y="273.4" width="2.6" height="3.0" fill="#e4e4e4"/><rect x="230.9" y="273.4" width="2.6" height="3.0" fill="#e1e1e1"/><rect x="233.5" y="273.4" width="2.6" height="3.0" fill="#d3d3d3"/><rect x="236.1" y="273.4" width="2.6" height="3.0" fill="#c0c0c0"/><rect x="238.7" y="273.4" width="2.6" height="3.0" fill="#f0f0f0"/><rect x="241.3" y="273.4" width="2.6" height="3.0" fill="#e0e0e0"/><rect x="243.9" y="273.4" width="2.6" height="3.0" fill="#d3d3d3"/><rect x="246.5" y="273.4" width="2.6" height="3.0" fill="#cfcfcf"/><rect x="249.1" y="273.4" width="2.6" height="3.0" fill="#f2f2f2"/><rect x="251.7" y="273.4" width="2.6" height="3.0" fill="#c5c5c5"/><rect x="254.3" y="273.4" width="2.6" height="3.0" fill="#d7d7d7"/><rect x="256.9" y="273.4" width="2.6" height="3.0" fill="#bfbfbf"/><rect x="259.5" y="273.4" width="2.6" height="3.0" fill="#efefef"/><rect x="303.7" y="273.4" width="2.6" height="3.0" fill="#d4d4d4"/><rect x="306.3" y="273.4" width="2.6" height="3.0" fill="#e0e0e0"/><rect x="308.9" y="273.4" width="2.6" height="3.0" fill="#d6d6d6"/><rect x="311.5" y="273.4" width="2.6" height="3.0" fill="#dddddd"/><rect x="314.1" y="273.4" width="2.6" height="3.0" fill="#dfdfdf"/><rect x="316.7" y="273.4" width="2.6" height="3.0" fill="#ededed"/><rect x="319.3" y="273.4" width="2.6" height="3.0" fill="#e2e2e2"/><rect x="321.9" y="273.4" width="2.6" height="3.0" fill="#c7c7c7"/><rect x="324.5" y="273.4" width="2.6" height="3.0" fill="#d7d7d7"/><rect x="327.1" y="273.4" width="2.6" height="3.0" fill="#d4d4d4"/><rect x="332.3" y="273.4" width="2.6" height="3.0" fill="#d2d2d2"/><rect x="337.5" y="273.4" width="2.6" height="3.0" fill="#d0d0d0"/><rect x="340.1" y="273.4" width="2.6" height="3.0" fill="#e7e7e7"/><rect x="342.7" y="273.4" width="2.6" height="3.0" fill="#d2d2d2"/><rect x="345.3" y="273.4" width="2.6" height="3.0" fill="#d1d1d1"/><rect x="347.9" y="273.4" width="2.6" height="3.0" fill="#ebebeb"/><rect x="100.9" y="276.4" width="2.6" height="3.0" fill="#d8d8d8"/><rect x="103.5" y="276.4" width="2.6" height="3.0" fill="#cfcfcf"/><rect x="106.1" y="276.4" width="2.6" height="3.0" fill="#eaeaea"/><rect x="108.7" y="276.4" width="2.6" height="3.0" fill="#dedede"/><rect x="111.3" y="276.4" width="2.6" height="3.0" fill="#d1d1d1"/><rect x="113.9" y="276.4" width="2.6" height="3.0" fill="#d6d6d6"/><rect x="116.5" y="276.4" width="2.6" height="3.0" fill="#cacaca"/><rect x="119.1" y="276.4" width="2.6" height="3.0" fill="#bfbfbf"/><rect x="121.7" y="276.4" width="2.6" height="3.0" fill="#e3e3e3"/><rect x="124.3" y="276.4" width="2.6" height="3.0" fill="#d4d4d4"/><rect x="126.9" y="276.4" width="2.6" height="3.0" fill="#d3d3d3"/><rect x="129.5" y="276.4" width="2.6" height="3.0" fill="#d6d6d6"/><rect x="132.1" y="276.4" width="2.6" height="3.0" fill="#bebebe"/><rect x="134.7" y="276.4" width="2.6" height="3.0" fill="#d1d1d1"/><rect x="137.3" y="276.4" width="2.6" height="3.0" fill="#d4d4d4"/><rect x="139.9" y="276.4" width="2.6" height="3.0" fill="#cecece"/><rect x="142.5" y="276.4" width="2.6" height="3.0" fill="#d3d3d3"/><rect x="145.1" y="276.4" width="2.6" height="3.0" fill="#dedede"/><rect x="199.7" y="276.4" width="2.6" height="3.0" fill="#e0e0e0"/><rect x="202.3" y="276.4" width="2.6" height="3.0" fill="#bababa"/><rect x="204.9" y="276.4" width="2.6" height="3.0" fill="#bdbdbd"/><rect x="207.5" y="276.4" width="2.6" height="3.0" fill="#cfcfcf"/><rect x="210.1" y="276.4" width="2.6" height="3.0" fill="#c5c5c5"/><rect x="212.7" y="276.4" width="2.6" height="3.0" fill="#dadada"/><rect x="215.3" y="276.4" width="2.6" height="3.0" fill="#cfcfcf"/><rect x="217.9" y="276.4" width="2.6" height="3.0" fill="#f2f2f2"/><rect x="220.5" y="276.4" width="2.6" height="3.0" fill="#bbbbbb"/><rect x="223.1" y="276.4" width="2.6" height="3.0" fill="#b6b6b6"/><rect x="225.7" y="276.4" width="2.6" height="3.0" fill="#bbbbbb"/><rect x="228.3" y="276.4" width="2.6" height="3.0" fill="#e5e5e5"/><rect x="230.9" y="276.4" width="2.6" height="3.0" fill="#d9d9d9"/><rect x="233.5" y="276.4" width="2.6" height="3.0" fill="#b3b3b3"/><rect x="236.1" y="276.4" width="2.6" height="3.0" fill="#bebebe"/><rect x="238.7" y="276.4" width="2.6" height="3.0" fill="#c9c9c9"/><rect x="241.3" y="276.4" width="2.6" height="3.0" fill="#cbcbcb"/><rect x="243.9" y="276.4" width="2.6" height="3.0" fill="#d7d7d7"/><rect x="246.5" y="276.4" width="2.6" height="3.0" fill="#b9b9b9"/><rect x="249.1" y="276.4" width="2.6" height="3.0" fill="#f1f1f1"/><rect x="251.7" y="276.4" width="2.6" height="3.0" fill="#bababa"/><rect x="254.3" y="276.4" width="2.6" height="3.0" fill="#c8c8c8"/><rect x="256.9" y="276.4" width="2.6" height="3.0" fill="#969696"/><rect x="259.5" y="276.4" width="2.6" height="3.0" fill="#e1e1e1"/><rect x="303.7" y="276.4" width="2.6" height="3.0" fill="#c7c7c7"/><rect x="306.3" y="276.4" width="2.6" height="3.0" fill="#d9d9d9"/><rect x="308.9" y="276.4" width="2.6" height="3.0" fill="#bcbcbc"/><rect x="311.5" y="276.4" width="2.6" height="3.0" fill="#c3c3c3"/><rect x="314.1" y="276.4" width="2.6" height="3.0" fill="#e4e4e4"/><rect x="316.7" y="276.4" width="2.6" height="3.0" fill="#e9e9e9"/><rect x="319.3" y="276.4" width="2.6" height="3.0" fill="#cbcbcb"/><rect x="321.9" y="276.4" width="2.6" height="3.0" fill="#b6b6b6"/><rect x="324.5" y="276.4" width="2.6" height="3.0" fill="#b9b9b9"/><rect x="327.1" y="276.4" width="2.6" height="3.0" fill="#c1c1c1"/><rect x="329.7" y="276.4" width="2.6" height="3.0" fill="#f0f0f0"/><rect x="332.3" y="276.4" width="2.6" height="3.0" fill="#c0c0c0"/><rect x="334.9" y="276.4" width="2.6" height="3.0" fill="#f0f0f0"/><rect x="337.5" y="276.4" width="2.6" height="3.0" fill="#c5c5c5"/><rect x="340.1" y="276.4" width="2.6" height="3.0" fill="#d1d1d1"/><rect x="342.7" y="276.4" width="2.6" height="3.0" fill="#c8c8c8"/><rect x="345.3" y="276.4" width="2.6" height="3.0" fill="#c4c4c4"/><rect x="347.9" y="276.4" width="2.6" height="3.0" fill="#d3d3d3"/><rect x="98.3" y="287.2" width="2.6" height="3.0" fill="#ededed"/><rect x="100.9" y="287.2" width="2.6" height="3.0" fill="#d1d1d1"/><rect x="103.5" y="287.2" width="2.6" height="3.0" fill="#d9d9d9"/><rect x="106.1" y="287.2" width="2.6" height="3.0" fill="#e1e1e1"/><rect x="108.7" y="287.2" width="2.6" height="3.0" fill="#f2f2f2"/><rect x="111.3" y="287.2" width="2.6" height="3.0" fill="#f3f3f3"/><rect x="113.9" y="287.2" width="2.6" height="3.0" fill="#ededed"/><rect x="116.5" y="287.2" width="2.6" height="3.0" fill="#e3e3e3"/><rect x="119.1" y="287.2" width="2.6" height="3.0" fill="#e3e3e3"/><rect x="121.7" y="287.2" width="2.6" height="3.0" fill="#f5f5f5"/><rect x="124.3" y="287.2" width="2.6" height="3.0" fill="#ebebeb"/><rect x="126.9" y="287.2" width="2.6" height="3.0" fill="#dddddd"/><rect x="129.5" y="287.2" width="2.6" height="3.0" fill="#d5d5d5"/><rect x="132.1" y="287.2" width="2.6" height="3.0" fill="#d9d9d9"/><rect x="134.7" y="287.2" width="2.6" height="3.0" fill="#d6d6d6"/><rect x="137.3" y="287.2" width="2.6" height="3.0" fill="#d9d9d9"/><rect x="139.9" y="287.2" width="2.6" height="3.0" fill="#e7e7e7"/><rect x="142.5" y="287.2" width="2.6" height="3.0" fill="#d9d9d9"/><rect x="145.1" y="287.2" width="2.6" height="3.0" fill="#eeeeee"/><rect x="199.7" y="287.2" width="2.6" height="3.0" fill="#e4e4e4"/><rect x="202.3" y="287.2" width="2.6" height="3.0" fill="#dedede"/><rect x="204.9" y="287.2" width="2.6" height="3.0" fill="#d5d5d5"/><rect x="207.5" y="287.2" width="2.6" height="3.0" fill="#d9d9d9"/><rect x="210.1" y="287.2" width="2.6" height="3.0" fill="#dbdbdb"/><rect x="212.7" y="287.2" width="2.6" height="3.0" fill="#d4d4d4"/><rect x="215.3" y="287.2" width="2.6" height="3.0" fill="#e6e6e6"/><rect x="217.9" y="287.2" width="2.6" height="3.0" fill="#d0d0d0"/><rect x="220.5" y="287.2" width="2.6" height="3.0" fill="#d4d4d4"/><rect x="223.1" y="287.2" width="2.6" height="3.0" fill="#cbcbcb"/><rect x="225.7" y="287.2" width="2.6" height="3.0" fill="#d1d1d1"/><rect x="228.3" y="287.2" width="2.6" height="3.0" fill="#dfdfdf"/><rect x="230.9" y="287.2" width="2.6" height="3.0" fill="#e5e5e5"/><rect x="233.5" y="287.2" width="2.6" height="3.0" fill="#c5c5c5"/><rect x="236.1" y="287.2" width="2.6" height="3.0" fill="#cfcfcf"/><rect x="238.7" y="287.2" width="2.6" height="3.0" fill="#e1e1e1"/><rect x="241.3" y="287.2" width="2.6" height="3.0" fill="#f2f2f2"/><rect x="243.9" y="287.2" width="2.6" height="3.0" fill="#c8c8c8"/><rect x="246.5" y="287.2" width="2.6" height="3.0" fill="#ededed"/><rect x="249.1" y="287.2" width="2.6" height="3.0" fill="#d8d8d8"/><rect x="251.7" y="287.2" width="2.6" height="3.0" fill="#d3d3d3"/><rect x="254.3" y="287.2" width="2.6" height="3.0" fill="#cbcbcb"/><rect x="256.9" y="287.2" width="2.6" height="3.0" fill="#d8d8d8"/><rect x="259.5" y="287.2" width="2.6" height="3.0" fill="#dbdbdb"/><rect x="303.7" y="287.2" width="2.6" height="3.0" fill="#d8d8d8"/><rect x="306.3" y="287.2" width="2.6" height="3.0" fill="#e4e4e4"/><rect x="308.9" y="287.2" width="2.6" height="3.0" fill="#dadada"/><rect x="311.5" y="287.2" width="2.6" height="3.0" fill="#dddddd"/><rect x="314.1" y="287.2" width="2.6" height="3.0" fill="#e3e3e3"/><rect x="316.7" y="287.2" width="2.6" height="3.0" fill="#eeeeee"/><rect x="319.3" y="287.2" width="2.6" height="3.0" fill="#e6e6e6"/><rect x="321.9" y="287.2" width="2.6" height="3.0" fill="#d3d3d3"/><rect x="324.5" y="287.2" width="2.6" height="3.0" fill="#dcdcdc"/><rect x="327.1" y="287.2" width="2.6" height="3.0" fill="#d9d9d9"/><rect x="332.3" y="287.2" width="2.6" height="3.0" fill="#d6d6d6"/><rect x="337.5" y="287.2" width="2.6" height="3.0" fill="#d4d4d4"/><rect x="340.1" y="287.2" width="2.6" height="3.0" fill="#ebebeb"/><rect x="342.7" y="287.2" width="2.6" height="3.0" fill="#d6d6d6"/><rect x="345.3" y="287.2" width="2.6" height="3.0" fill="#d5d5d5"/><rect x="347.9" y="287.2" width="2.6" height="3.0" fill="#f3f3f3"/><rect x="100.9" y="290.1" width="2.6" height="3.0" fill="#d5d5d5"/><rect x="103.5" y="290.1" width="2.6" height="3.0" fill="#cacaca"/><rect x="106.1" y="290.1" width="2.6" height="3.0" fill="#e7e7e7"/><rect x="108.7" y="290.1" width="2.6" height="3.0" fill="#dadada"/><rect x="111.3" y="290.1" width="2.6" height="3.0" fill="#d1d1d1"/><rect x="113.9" y="290.1" width="2.6" height="3.0" fill="#d2d2d2"/><rect x="116.5" y="290.1" width="2.6" height="3.0" fill="#c3c3c3"/><rect x="119.1" y="290.1" width="2.6" height="3.0" fill="#bdbdbd"/><rect x="121.7" y="290.1" width="2.6" height="3.0" fill="#dfdfdf"/><rect x="124.3" y="290.1" width="2.6" height="3.0" fill="#dfdfdf"/><rect x="126.9" y="290.1" width="2.6" height="3.0" fill="#d6d6d6"/><rect x="129.5" y="290.1" width="2.6" height="3.0" fill="#b6b6b6"/><rect x="132.1" y="290.1" width="2.6" height="3.0" fill="#cacaca"/><rect x="134.7" y="290.1" width="2.6" height="3.0" fill="#b4b4b4"/><rect x="137.3" y="290.1" width="2.6" height="3.0" fill="#bdbdbd"/><rect x="139.9" y="290.1" width="2.6" height="3.0" fill="#d1d1d1"/><rect x="142.5" y="290.1" width="2.6" height="3.0" fill="#bdbdbd"/><rect x="145.1" y="290.1" width="2.6" height="3.0" fill="#e3e3e3"/><rect x="199.7" y="290.1" width="2.6" height="3.0" fill="#e4e4e4"/><rect x="202.3" y="290.1" width="2.6" height="3.0" fill="#a5a5a5"/><rect x="204.9" y="290.1" width="2.6" height="3.0" fill="#c1c1c1"/><rect x="207.5" y="290.1" width="2.6" height="3.0" fill="#c5c5c5"/><rect x="210.1" y="290.1" width="2.6" height="3.0" fill="#c6c6c6"/><rect x="212.7" y="290.1" width="2.6" height="3.0" fill="#d4d4d4"/><rect x="215.3" y="290.1" width="2.6" height="3.0" fill="#dedede"/><rect x="217.9" y="290.1" width="2.6" height="3.0" fill="#e6e6e6"/><rect x="220.5" y="290.1" width="2.6" height="3.0" fill="#bfbfbf"/><rect x="223.1" y="290.1" width="2.6" height="3.0" fill="#aaaaaa"/><rect x="225.7" y="290.1" width="2.6" height="3.0" fill="#b1b1b1"/><rect x="228.3" y="290.1" width="2.6" height="3.0" fill="#e0e0e0"/><rect x="230.9" y="290.1" width="2.6" height="3.0" fill="#e7e7e7"/><rect x="233.5" y="290.1" width="2.6" height="3.0" fill="#999999"/><rect x="236.1" y="290.1" width="2.6" height="3.0" fill="#aaaaaa"/><rect x="238.7" y="290.1" width="2.6" height="3.0" fill="#c5c5c5"/><rect x="241.3" y="290.1" width="2.6" height="3.0" fill="#e0e0e0"/><rect x="243.9" y="290.1" width="2.6" height="3.0" fill="#a2a2a2"/><rect x="246.5" y="290.1" width="2.6" height="3.0" fill="#cacaca"/><rect x="249.1" y="290.1" width="2.6" height="3.0" fill="#bdbdbd"/><rect x="251.7" y="290.1" width="2.6" height="3.0" fill="#bababa"/><rect x="254.3" y="290.1" width="2.6" height="3.0" fill="#a4a4a4"/><rect x="256.9" y="290.1" width="2.6" height="3.0" fill="#b9b9b9"/><rect x="259.5" y="290.1" width="2.6" height="3.0" fill="#c3c3c3"/><rect x="303.7" y="290.1" width="2.6" height="3.0" fill="#c4c4c4"/><rect x="306.3" y="290.1" width="2.6" height="3.0" fill="#d5d5d5"/><rect x="308.9" y="290.1" width="2.6" height="3.0" fill="#b9b9b9"/><rect x="311.5" y="290.1" width="2.6" height="3.0" fill="#c2c2c2"/><rect x="314.1" y="290.1" width="2.6" height="3.0" fill="#e0e0e0"/><rect x="316.7" y="290.1" width="2.6" height="3.0" fill="#e9e9e9"/><rect x="319.3" y="290.1" width="2.6" height="3.0" fill="#c7c7c7"/><rect x="321.9" y="290.1" width="2.6" height="3.0" fill="#ababab"/><rect x="324.5" y="290.1" width="2.6" height="3.0" fill="#b4b4b4"/><rect x="327.1" y="290.1" width="2.6" height="3.0" fill="#bdbdbd"/><rect x="329.7" y="290.1" width="2.6" height="3.0" fill="#f0f0f0"/><rect x="332.3" y="290.1" width="2.6" height="3.0" fill="#bcbcbc"/><rect x="334.9" y="290.1" width="2.6" height="3.0" fill="#f0f0f0"/><rect x="337.5" y="290.1" width="2.6" height="3.0" fill="#c1c1c1"/><rect x="340.1" y="290.1" width="2.6" height="3.0" fill="#cdcdcd"/><rect x="342.7" y="290.1" width="2.6" height="3.0" fill="#c6c6c6"/><rect x="345.3" y="290.1" width="2.6" height="3.0" fill="#c9c9c9"/><rect x="347.9" y="290.1" width="2.6" height="3.0" fill="#d1d1d1"/><rect x="85.3" y="300.9" width="2.6" height="3.0" fill="#e7e7e7"/><rect x="87.9" y="300.9" width="2.6" height="3.0" fill="#f2f2f2"/><rect x="90.5" y="300.9" width="2.6" height="3.0" fill="#dfdfdf"/><rect x="93.1" y="300.9" width="2.6" height="3.0" fill="#ececec"/><rect x="95.7" y="300.9" width="2.6" height="3.0" fill="#f3f3f3"/><rect x="98.3" y="300.9" width="2.6" height="3.0" fill="#e4e4e4"/><rect x="100.9" y="300.9" width="2.6" height="3.0" fill="#dbdbdb"/><rect x="103.5" y="300.9" width="2.6" height="3.0" fill="#f3f3f3"/><rect x="106.1" y="300.9" width="2.6" height="3.0" fill="#f4f4f4"/><rect x="108.7" y="300.9" width="2.6" height="3.0" fill="#eeeeee"/><rect x="111.3" y="300.9" width="2.6" height="3.0" fill="#e7e7e7"/><rect x="113.9" y="300.9" width="2.6" height="3.0" fill="#f8f8f8"/><rect x="116.5" y="300.9" width="2.6" height="3.0" fill="#e5e5e5"/><rect x="119.1" y="300.9" width="2.6" height="3.0" fill="#dbdbdb"/><rect x="121.7" y="300.9" width="2.6" height="3.0" fill="#f2f2f2"/><rect x="124.3" y="300.9" width="2.6" height="3.0" fill="#efefef"/><rect x="129.5" y="300.9" width="2.6" height="3.0" fill="#f4f4f4"/><rect x="132.1" y="300.9" width="2.6" height="3.0" fill="#e3e3e3"/><rect x="134.7" y="300.9" width="2.6" height="3.0" fill="#eeeeee"/><rect x="139.9" y="300.9" width="2.6" height="3.0" fill="#dbdbdb"/><rect x="142.5" y="300.9" width="2.6" height="3.0" fill="#ebebeb"/><rect x="145.1" y="300.9" width="2.6" height="3.0" fill="#eeeeee"/><rect x="147.7" y="300.9" width="2.6" height="3.0" fill="#d7d7d7"/><rect x="150.3" y="300.9" width="2.6" height="3.0" fill="#dfdfdf"/><rect x="152.9" y="300.9" width="2.6" height="3.0" fill="#e2e2e2"/><rect x="155.5" y="300.9" width="2.6" height="3.0" fill="#e8e8e8"/><rect x="199.7" y="300.9" width="2.6" height="3.0" fill="#ebebeb"/><rect x="202.3" y="300.9" width="2.6" height="3.0" fill="#d3d3d3"/><rect x="204.9" y="300.9" width="2.6" height="3.0" fill="#cfcfcf"/><rect x="207.5" y="300.9" width="2.6" height="3.0" fill="#e3e3e3"/><rect x="210.1" y="300.9" width="2.6" height="3.0" fill="#f1f1f1"/><rect x="212.7" y="300.9" width="2.6" height="3.0" fill="#d3d3d3"/><rect x="215.3" y="300.9" width="2.6" height="3.0" fill="#cfcfcf"/><rect x="217.9" y="300.9" width="2.6" height="3.0" fill="#ececec"/><rect x="220.5" y="300.9" width="2.6" height="3.0" fill="#eeeeee"/><rect x="223.1" y="300.9" width="2.6" height="3.0" fill="#d8d8d8"/><rect x="225.7" y="300.9" width="2.6" height="3.0" fill="#cacaca"/><rect x="228.3" y="300.9" width="2.6" height="3.0" fill="#f6f6f6"/><rect x="230.9" y="300.9" width="2.6" height="3.0" fill="#d5d5d5"/><rect x="233.5" y="300.9" width="2.6" height="3.0" fill="#f1f1f1"/><rect x="236.1" y="300.9" width="2.6" height="3.0" fill="#cccccc"/><rect x="238.7" y="300.9" width="2.6" height="3.0" fill="#f7f7f7"/><rect x="241.3" y="300.9" width="2.6" height="3.0" fill="#dadada"/><rect x="243.9" y="300.9" width="2.6" height="3.0" fill="#d9d9d9"/><rect x="246.5" y="300.9" width="2.6" height="3.0" fill="#d1d1d1"/><rect x="249.1" y="300.9" width="2.6" height="3.0" fill="#e4e4e4"/><rect x="251.7" y="300.9" width="2.6" height="3.0" fill="#dedede"/><rect x="254.3" y="300.9" width="2.6" height="3.0" fill="#dadada"/><rect x="256.9" y="300.9" width="2.6" height="3.0" fill="#d0d0d0"/><rect x="306.3" y="300.9" width="2.6" height="3.0" fill="#dbdbdb"/><rect x="308.9" y="300.9" width="2.6" height="3.0" fill="#e3e3e3"/><rect x="311.5" y="300.9" width="2.6" height="3.0" fill="#dddddd"/><rect x="314.1" y="300.9" width="2.6" height="3.0" fill="#d7d7d7"/><rect x="319.3" y="300.9" width="2.6" height="3.0" fill="#dfdfdf"/><rect x="321.9" y="300.9" width="2.6" height="3.0" fill="#e0e0e0"/><rect x="324.5" y="300.9" width="2.6" height="3.0" fill="#dfdfdf"/><rect x="327.1" y="300.9" width="2.6" height="3.0" fill="#e1e1e1"/><rect x="329.7" y="300.9" width="2.6" height="3.0" fill="#f4f4f4"/><rect x="332.3" y="300.9" width="2.6" height="3.0" fill="#e7e7e7"/><rect x="334.9" y="300.9" width="2.6" height="3.0" fill="#f6f6f6"/><rect x="337.5" y="300.9" width="2.6" height="3.0" fill="#e5e5e5"/><rect x="340.1" y="300.9" width="2.6" height="3.0" fill="#d9d9d9"/><rect x="342.7" y="300.9" width="2.6" height="3.0" fill="#dddddd"/><rect x="345.3" y="300.9" width="2.6" height="3.0" fill="#f5f5f5"/><rect x="85.3" y="303.9" width="2.6" height="3.0" fill="#d9d9d9"/><rect x="87.9" y="303.9" width="2.6" height="3.0" fill="#bfbfbf"/><rect x="90.5" y="303.9" width="2.6" height="3.0" fill="#c6c6c6"/><rect x="93.1" y="303.9" width="2.6" height="3.0" fill="#b0b0b0"/><rect x="95.7" y="303.9" width="2.6" height="3.0" fill="#d1d1d1"/><rect x="98.3" y="303.9" width="2.6" height="3.0" fill="#c1c1c1"/><rect x="100.9" y="303.9" width="2.6" height="3.0" fill="#c6c6c6"/><rect x="103.5" y="303.9" width="2.6" height="3.0" fill="#c8c8c8"/><rect x="106.1" y="303.9" width="2.6" height="3.0" fill="#c8c8c8"/><rect x="108.7" y="303.9" width="2.6" height="3.0" fill="#c0c0c0"/><rect x="111.3" y="303.9" width="2.6" height="3.0" fill="#bdbdbd"/><rect x="113.9" y="303.9" width="2.6" height="3.0" fill="#dfdfdf"/><rect x="116.5" y="303.9" width="2.6" height="3.0" fill="#d3d3d3"/><rect x="119.1" y="303.9" width="2.6" height="3.0" fill="#dddddd"/><rect x="121.7" y="303.9" width="2.6" height="3.0" fill="#d6d6d6"/><rect x="124.3" y="303.9" width="2.6" height="3.0" fill="#cfcfcf"/><rect x="126.9" y="303.9" width="2.6" height="3.0" fill="#d6d6d6"/><rect x="129.5" y="303.9" width="2.6" height="3.0" fill="#d4d4d4"/><rect x="132.1" y="303.9" width="2.6" height="3.0" fill="#bababa"/><rect x="134.7" y="303.9" width="2.6" height="3.0" fill="#b8b8b8"/><rect x="137.3" y="303.9" width="2.6" height="3.0" fill="#f7f7f7"/><rect x="139.9" y="303.9" width="2.6" height="3.0" fill="#c4c4c4"/><rect x="142.5" y="303.9" width="2.6" height="3.0" fill="#bbbbbb"/><rect x="145.1" y="303.9" width="2.6" height="3.0" fill="#d7d7d7"/><rect x="147.7" y="303.9" width="2.6" height="3.0" fill="#b4b4b4"/><rect x="150.3" y="303.9" width="2.6" height="3.0" fill="#e4e4e4"/><rect x="152.9" y="303.9" width="2.6" height="3.0" fill="#e0e0e0"/><rect x="155.5" y="303.9" width="2.6" height="3.0" fill="#cecece"/><rect x="199.7" y="303.9" width="2.6" height="3.0" fill="#ebebeb"/><rect x="202.3" y="303.9" width="2.6" height="3.0" fill="#dddddd"/><rect x="204.9" y="303.9" width="2.6" height="3.0" fill="#a8a8a8"/><rect x="207.5" y="303.9" width="2.6" height="3.0" fill="#cbcbcb"/><rect x="210.1" y="303.9" width="2.6" height="3.0" fill="#c5c5c5"/><rect x="212.7" y="303.9" width="2.6" height="3.0" fill="#aaaaaa"/><rect x="215.3" y="303.9" width="2.6" height="3.0" fill="#c2c2c2"/><rect x="217.9" y="303.9" width="2.6" height="3.0" fill="#e8e8e8"/><rect x="220.5" y="303.9" width="2.6" height="3.0" fill="#c7c7c7"/><rect x="223.1" y="303.9" width="2.6" height="3.0" fill="#b5b5b5"/><rect x="225.7" y="303.9" width="2.6" height="3.0" fill="#aeaeae"/><rect x="228.3" y="303.9" width="2.6" height="3.0" fill="#f0f0f0"/><rect x="230.9" y="303.9" width="2.6" height="3.0" fill="#a8a8a8"/><rect x="233.5" y="303.9" width="2.6" height="3.0" fill="#a9a9a9"/><rect x="236.1" y="303.9" width="2.6" height="3.0" fill="#b1b1b1"/><rect x="238.7" y="303.9" width="2.6" height="3.0" fill="#e2e2e2"/><rect x="241.3" y="303.9" width="2.6" height="3.0" fill="#cccccc"/><rect x="243.9" y="303.9" width="2.6" height="3.0" fill="#c3c3c3"/><rect x="246.5" y="303.9" width="2.6" height="3.0" fill="#d6d6d6"/><rect x="249.1" y="303.9" width="2.6" height="3.0" fill="#e1e1e1"/><rect x="251.7" y="303.9" width="2.6" height="3.0" fill="#cccccc"/><rect x="254.3" y="303.9" width="2.6" height="3.0" fill="#b3b3b3"/><rect x="256.9" y="303.9" width="2.6" height="3.0" fill="#bebebe"/><rect x="259.5" y="303.9" width="2.6" height="3.0" fill="#fafafa"/><rect x="306.3" y="303.9" width="2.6" height="3.0" fill="#cbcbcb"/><rect x="308.9" y="303.9" width="2.6" height="3.0" fill="#d3d3d3"/><rect x="311.5" y="303.9" width="2.6" height="3.0" fill="#c0c0c0"/><rect x="314.1" y="303.9" width="2.6" height="3.0" fill="#cecece"/><rect x="316.7" y="303.9" width="2.6" height="3.0" fill="#f6f6f6"/><rect x="319.3" y="303.9" width="2.6" height="3.0" fill="#cbcbcb"/><rect x="321.9" y="303.9" width="2.6" height="3.0" fill="#bfbfbf"/><rect x="324.5" y="303.9" width="2.6" height="3.0" fill="#b0b0b0"/><rect x="327.1" y="303.9" width="2.6" height="3.0" fill="#c8c8c8"/><rect x="329.7" y="303.9" width="2.6" height="3.0" fill="#f3f3f3"/><rect x="332.3" y="303.9" width="2.6" height="3.0" fill="#cecece"/><rect x="334.9" y="303.9" width="2.6" height="3.0" fill="#f4f4f4"/><rect x="337.5" y="303.9" width="2.6" height="3.0" fill="#cecece"/><rect x="340.1" y="303.9" width="2.6" height="3.0" fill="#d5d5d5"/><rect x="342.7" y="303.9" width="2.6" height="3.0" fill="#e4e4e4"/><rect x="345.3" y="303.9" width="2.6" height="3.0" fill="#e6e6e6"/><rect x="93.1" y="306.8" width="2.6" height="3.0" fill="#f5f5f5"/><rect x="95.7" y="306.8" width="2.6" height="3.0" fill="#f5f5f5"/><rect x="98.3" y="306.8" width="2.6" height="3.0" fill="#f9f9f9"/><rect x="100.9" y="306.8" width="2.6" height="3.0" fill="#f5f5f5"/><rect x="106.1" y="306.8" width="2.6" height="3.0" fill="#f9f9f9"/><rect x="108.7" y="306.8" width="2.6" height="3.0" fill="#f6f6f6"/><rect x="124.3" y="306.8" width="2.6" height="3.0" fill="#f6f6f6"/><rect x="129.5" y="306.8" width="2.6" height="3.0" fill="#f8f8f8"/><rect x="132.1" y="306.8" width="2.6" height="3.0" fill="#fafafa"/><rect x="134.7" y="306.8" width="2.6" height="3.0" fill="#f6f6f6"/><rect x="142.5" y="306.8" width="2.6" height="3.0" fill="#f8f8f8"/><rect x="147.7" y="306.8" width="2.6" height="3.0" fill="#f7f7f7"/><rect x="150.3" y="306.8" width="2.6" height="3.0" fill="#f6f6f6"/><rect x="204.9" y="306.8" width="2.6" height="3.0" fill="#f1f1f1"/><rect x="207.5" y="306.8" width="2.6" height="3.0" fill="#f9f9f9"/><rect x="212.7" y="306.8" width="2.6" height="3.0" fill="#f8f8f8"/><rect x="225.7" y="306.8" width="2.6" height="3.0" fill="#f1f1f1"/><rect x="228.3" y="306.8" width="2.6" height="3.0" fill="#fafafa"/><rect x="230.9" y="306.8" width="2.6" height="3.0" fill="#f4f4f4"/><rect x="233.5" y="306.8" width="2.6" height="3.0" fill="#f9f9f9"/><rect x="238.7" y="306.8" width="2.6" height="3.0" fill="#f6f6f6"/><rect x="241.3" y="306.8" width="2.6" height="3.0" fill="#f0f0f0"/><rect x="243.9" y="306.8" width="2.6" height="3.0" fill="#f6f6f6"/><rect x="246.5" y="306.8" width="2.6" height="3.0" fill="#f1f1f1"/><rect x="251.7" y="306.8" width="2.6" height="3.0" fill="#f7f7f7"/><rect x="254.3" y="306.8" width="2.6" height="3.0" fill="#f9f9f9"/><rect x="256.9" y="306.8" width="2.6" height="3.0" fill="#efefef"/><rect x="259.5" y="306.8" width="2.6" height="3.0" fill="#fafafa"/><rect x="306.3" y="306.8" width="2.6" height="3.0" fill="#f1f1f1"/><rect x="308.9" y="306.8" width="2.6" height="3.0" fill="#f6f6f6"/><rect x="311.5" y="306.8" width="2.6" height="3.0" fill="#f9f9f9"/><rect x="314.1" y="306.8" width="2.6" height="3.0" fill="#f1f1f1"/><rect x="316.7" y="306.8" width="2.6" height="3.0" fill="#f9f9f9"/><rect x="319.3" y="306.8" width="2.6" height="3.0" fill="#f1f1f1"/><rect x="321.9" y="306.8" width="2.6" height="3.0" fill="#f7f7f7"/><rect x="327.1" y="306.8" width="2.6" height="3.0" fill="#f7f7f7"/><rect x="329.7" y="306.8" width="2.6" height="3.0" fill="#f6f6f6"/><rect x="332.3" y="306.8" width="2.6" height="3.0" fill="#f4f4f4"/><rect x="334.9" y="306.8" width="2.6" height="3.0" fill="#f7f7f7"/><rect x="337.5" y="306.8" width="2.6" height="3.0" fill="#f3f3f3"/><rect x="342.7" y="306.8" width="2.6" height="3.0" fill="#f7f7f7"/><rect x="345.3" y="306.8" width="2.6" height="3.0" fill="#f7f7f7"/><rect x="103.5" y="314.7" width="2.6" height="3.0" fill="#f8f8f8"/><rect x="106.1" y="314.7" width="2.6" height="3.0" fill="#e5e5e5"/><rect x="108.7" y="314.7" width="2.6" height="3.0" fill="#dadada"/><rect x="111.3" y="314.7" width="2.6" height="3.0" fill="#e7e7e7"/><rect x="113.9" y="314.7" width="2.6" height="3.0" fill="#dedede"/><rect x="116.5" y="314.7" width="2.6" height="3.0" fill="#e5e5e5"/><rect x="119.1" y="314.7" width="2.6" height="3.0" fill="#e7e7e7"/><rect x="121.7" y="314.7" width="2.6" height="3.0" fill="#e1e1e1"/><rect x="124.3" y="314.7" width="2.6" height="3.0" fill="#e6e6e6"/><rect x="126.9" y="314.7" width="2.6" height="3.0" fill="#cacaca"/><rect x="129.5" y="314.7" width="2.6" height="3.0" fill="#e5e5e5"/><rect x="132.1" y="314.7" width="2.6" height="3.0" fill="#e6e6e6"/><rect x="134.7" y="314.7" width="2.6" height="3.0" fill="#d4d4d4"/><rect x="137.3" y="314.7" width="2.6" height="3.0" fill="#eaeaea"/><rect x="199.7" y="314.7" width="2.6" height="3.0" fill="#cfcfcf"/><rect x="202.3" y="314.7" width="2.6" height="3.0" fill="#dedede"/><rect x="204.9" y="314.7" width="2.6" height="3.0" fill="#c7c7c7"/><rect x="207.5" y="314.7" width="2.6" height="3.0" fill="#dfdfdf"/><rect x="210.1" y="314.7" width="2.6" height="3.0" fill="#f2f2f2"/><rect x="212.7" y="314.7" width="2.6" height="3.0" fill="#bababa"/><rect x="215.3" y="314.7" width="2.6" height="3.0" fill="#d3d3d3"/><rect x="217.9" y="314.7" width="2.6" height="3.0" fill="#cecece"/><rect x="220.5" y="314.7" width="2.6" height="3.0" fill="#d9d9d9"/><rect x="223.1" y="314.7" width="2.6" height="3.0" fill="#bebebe"/><rect x="225.7" y="314.7" width="2.6" height="3.0" fill="#d9d9d9"/><rect x="228.3" y="314.7" width="2.6" height="3.0" fill="#d1d1d1"/><rect x="230.9" y="314.7" width="2.6" height="3.0" fill="#e9e9e9"/><rect x="233.5" y="314.7" width="2.6" height="3.0" fill="#d8d8d8"/><rect x="236.1" y="314.7" width="2.6" height="3.0" fill="#bdbdbd"/><rect x="238.7" y="314.7" width="2.6" height="3.0" fill="#d3d3d3"/><rect x="241.3" y="314.7" width="2.6" height="3.0" fill="#e0e0e0"/><rect x="243.9" y="314.7" width="2.6" height="3.0" fill="#c2c2c2"/><rect x="246.5" y="314.7" width="2.6" height="3.0" fill="#b8b8b8"/><rect x="249.1" y="314.7" width="2.6" height="3.0" fill="#d2d2d2"/><rect x="251.7" y="314.7" width="2.6" height="3.0" fill="#cdcdcd"/><rect x="254.3" y="314.7" width="2.6" height="3.0" fill="#c7c7c7"/><rect x="256.9" y="314.7" width="2.6" height="3.0" fill="#d0d0d0"/><rect x="259.5" y="314.7" width="2.6" height="3.0" fill="#e2e2e2"/><rect x="306.3" y="314.7" width="2.6" height="3.0" fill="#d3d3d3"/><rect x="308.9" y="314.7" width="2.6" height="3.0" fill="#d5d5d5"/><rect x="311.5" y="314.7" width="2.6" height="3.0" fill="#d0d0d0"/><rect x="314.1" y="314.7" width="2.6" height="3.0" fill="#d0d0d0"/><rect x="316.7" y="314.7" width="2.6" height="3.0" fill="#f9f9f9"/><rect x="319.3" y="314.7" width="2.6" height="3.0" fill="#d6d6d6"/><rect x="321.9" y="314.7" width="2.6" height="3.0" fill="#c4c4c4"/><rect x="324.5" y="314.7" width="2.6" height="3.0" fill="#d2d2d2"/><rect x="327.1" y="314.7" width="2.6" height="3.0" fill="#d1d1d1"/><rect x="329.7" y="314.7" width="2.6" height="3.0" fill="#f6f6f6"/><rect x="332.3" y="314.7" width="2.6" height="3.0" fill="#dadada"/><rect x="334.9" y="314.7" width="2.6" height="3.0" fill="#f9f9f9"/><rect x="337.5" y="314.7" width="2.6" height="3.0" fill="#d6d6d6"/><rect x="340.1" y="314.7" width="2.6" height="3.0" fill="#c5c5c5"/><rect x="342.7" y="314.7" width="2.6" height="3.0" fill="#e4e4e4"/><rect x="345.3" y="314.7" width="2.6" height="3.0" fill="#dcdcdc"/><rect x="103.5" y="317.6" width="2.6" height="3.0" fill="#ebebeb"/><rect x="106.1" y="317.6" width="2.6" height="3.0" fill="#c3c3c3"/><rect x="108.7" y="317.6" width="2.6" height="3.0" fill="#cbcbcb"/><rect x="111.3" y="317.6" width="2.6" height="3.0" fill="#dedede"/><rect x="113.9" y="317.6" width="2.6" height="3.0" fill="#b5b5b5"/><rect x="116.5" y="317.6" width="2.6" height="3.0" fill="#d0d0d0"/><rect x="119.1" y="317.6" width="2.6" height="3.0" fill="#d8d8d8"/><rect x="121.7" y="317.6" width="2.6" height="3.0" fill="#c9c9c9"/><rect x="124.3" y="317.6" width="2.6" height="3.0" fill="#d7d7d7"/><rect x="126.9" y="317.6" width="2.6" height="3.0" fill="#c1c1c1"/><rect x="129.5" y="317.6" width="2.6" height="3.0" fill="#c7c7c7"/><rect x="132.1" y="317.6" width="2.6" height="3.0" fill="#c8c8c8"/><rect x="134.7" y="317.6" width="2.6" height="3.0" fill="#cbcbcb"/><rect x="137.3" y="317.6" width="2.6" height="3.0" fill="#e2e2e2"/><rect x="199.7" y="317.6" width="2.6" height="3.0" fill="#cccccc"/><rect x="202.3" y="317.6" width="2.6" height="3.0" fill="#e0e0e0"/><rect x="204.9" y="317.6" width="2.6" height="3.0" fill="#c3c3c3"/><rect x="207.5" y="317.6" width="2.6" height="3.0" fill="#dfdfdf"/><rect x="210.1" y="317.6" width="2.6" height="3.0" fill="#d4d4d4"/><rect x="212.7" y="317.6" width="2.6" height="3.0" fill="#c5c5c5"/><rect x="215.3" y="317.6" width="2.6" height="3.0" fill="#b8b8b8"/><rect x="217.9" y="317.6" width="2.6" height="3.0" fill="#c5c5c5"/><rect x="220.5" y="317.6" width="2.6" height="3.0" fill="#d3d3d3"/><rect x="223.1" y="317.6" width="2.6" height="3.0" fill="#bbbbbb"/><rect x="225.7" y="317.6" width="2.6" height="3.0" fill="#d7d7d7"/><rect x="228.3" y="317.6" width="2.6" height="3.0" fill="#f4f4f4"/><rect x="230.9" y="317.6" width="2.6" height="3.0" fill="#e9e9e9"/><rect x="233.5" y="317.6" width="2.6" height="3.0" fill="#c6c6c6"/><rect x="236.1" y="317.6" width="2.6" height="3.0" fill="#bababa"/><rect x="238.7" y="317.6" width="2.6" height="3.0" fill="#cfcfcf"/><rect x="241.3" y="317.6" width="2.6" height="3.0" fill="#dddddd"/><rect x="243.9" y="317.6" width="2.6" height="3.0" fill="#bbbbbb"/><rect x="246.5" y="317.6" width="2.6" height="3.0" fill="#b6b6b6"/><rect x="249.1" y="317.6" width="2.6" height="3.0" fill="#cacaca"/><rect x="251.7" y="317.6" width="2.6" height="3.0" fill="#c9c9c9"/><rect x="254.3" y="317.6" width="2.6" height="3.0" fill="#c2c2c2"/><rect x="256.9" y="317.6" width="2.6" height="3.0" fill="#b6b6b6"/><rect x="259.5" y="317.6" width="2.6" height="3.0" fill="#f4f4f4"/><rect x="306.3" y="317.6" width="2.6" height="3.0" fill="#c6c6c6"/><rect x="308.9" y="317.6" width="2.6" height="3.0" fill="#cfcfcf"/><rect x="311.5" y="317.6" width="2.6" height="3.0" fill="#c5c5c5"/><rect x="314.1" y="317.6" width="2.6" height="3.0" fill="#d4d4d4"/><rect x="316.7" y="317.6" width="2.6" height="3.0" fill="#eeeeee"/><rect x="319.3" y="317.6" width="2.6" height="3.0" fill="#c8c8c8"/><rect x="321.9" y="317.6" width="2.6" height="3.0" fill="#cecece"/><rect x="324.5" y="317.6" width="2.6" height="3.0" fill="#bcbcbc"/><rect x="327.1" y="317.6" width="2.6" height="3.0" fill="#cdcdcd"/><rect x="329.7" y="317.6" width="2.6" height="3.0" fill="#ececec"/><rect x="332.3" y="317.6" width="2.6" height="3.0" fill="#cbcbcb"/><rect x="334.9" y="317.6" width="2.6" height="3.0" fill="#eeeeee"/><rect x="337.5" y="317.6" width="2.6" height="3.0" fill="#c8c8c8"/><rect x="340.1" y="317.6" width="2.6" height="3.0" fill="#cecece"/><rect x="342.7" y="317.6" width="2.6" height="3.0" fill="#d5d5d5"/><rect x="345.3" y="317.6" width="2.6" height="3.0" fill="#cdcdcd"/><rect x="85.3" y="328.4" width="2.6" height="3.0" fill="#d6d6d6"/><rect x="87.9" y="328.4" width="2.6" height="3.0" fill="#c4c4c4"/><rect x="90.5" y="328.4" width="2.6" height="3.0" fill="#d8d8d8"/><rect x="93.1" y="328.4" width="2.6" height="3.0" fill="#bdbdbd"/><rect x="95.7" y="328.4" width="2.6" height="3.0" fill="#d0d0d0"/><rect x="98.3" y="328.4" width="2.6" height="3.0" fill="#dadada"/><rect x="100.9" y="328.4" width="2.6" height="3.0" fill="#bcbcbc"/><rect x="103.5" y="328.4" width="2.6" height="3.0" fill="#c8c8c8"/><rect x="106.1" y="328.4" width="2.6" height="3.0" fill="#d2d2d2"/><rect x="108.7" y="328.4" width="2.6" height="3.0" fill="#e0e0e0"/><rect x="111.3" y="328.4" width="2.6" height="3.0" fill="#cbcbcb"/><rect x="113.9" y="328.4" width="2.6" height="3.0" fill="#e4e4e4"/><rect x="116.5" y="328.4" width="2.6" height="3.0" fill="#d3d3d3"/><rect x="119.1" y="328.4" width="2.6" height="3.0" fill="#d5d5d5"/><rect x="121.7" y="328.4" width="2.6" height="3.0" fill="#e9e9e9"/><rect x="124.3" y="328.4" width="2.6" height="3.0" fill="#d7d7d7"/><rect x="129.5" y="328.4" width="2.6" height="3.0" fill="#d6d6d6"/><rect x="132.1" y="328.4" width="2.6" height="3.0" fill="#e8e8e8"/><rect x="134.7" y="328.4" width="2.6" height="3.0" fill="#d2d2d2"/><rect x="137.3" y="328.4" width="2.6" height="3.0" fill="#e2e2e2"/><rect x="139.9" y="328.4" width="2.6" height="3.0" fill="#d2d2d2"/><rect x="142.5" y="328.4" width="2.6" height="3.0" fill="#dcdcdc"/><rect x="145.1" y="328.4" width="2.6" height="3.0" fill="#dfdfdf"/><rect x="147.7" y="328.4" width="2.6" height="3.0" fill="#e2e2e2"/><rect x="150.3" y="328.4" width="2.6" height="3.0" fill="#dedede"/><rect x="152.9" y="328.4" width="2.6" height="3.0" fill="#d9d9d9"/><rect x="155.5" y="328.4" width="2.6" height="3.0" fill="#d3d3d3"/><rect x="199.7" y="328.4" width="2.6" height="3.0" fill="#dedede"/><rect x="202.3" y="328.4" width="2.6" height="3.0" fill="#c4c4c4"/><rect x="204.9" y="328.4" width="2.6" height="3.0" fill="#e0e0e0"/><rect x="207.5" y="328.4" width="2.6" height="3.0" fill="#d0d0d0"/><rect x="210.1" y="328.4" width="2.6" height="3.0" fill="#e6e6e6"/><rect x="212.7" y="328.4" width="2.6" height="3.0" fill="#d5d5d5"/><rect x="215.3" y="328.4" width="2.6" height="3.0" fill="#bebebe"/><rect x="217.9" y="328.4" width="2.6" height="3.0" fill="#dfdfdf"/><rect x="220.5" y="328.4" width="2.6" height="3.0" fill="#d7d7d7"/><rect x="223.1" y="328.4" width="2.6" height="3.0" fill="#b5b5b5"/><rect x="225.7" y="328.4" width="2.6" height="3.0" fill="#cfcfcf"/><rect x="228.3" y="328.4" width="2.6" height="3.0" fill="#eaeaea"/><rect x="230.9" y="328.4" width="2.6" height="3.0" fill="#dcdcdc"/><rect x="233.5" y="328.4" width="2.6" height="3.0" fill="#dadada"/><rect x="236.1" y="328.4" width="2.6" height="3.0" fill="#bbbbbb"/><rect x="238.7" y="328.4" width="2.6" height="3.0" fill="#d1d1d1"/><rect x="241.3" y="328.4" width="2.6" height="3.0" fill="#c9c9c9"/><rect x="243.9" y="328.4" width="2.6" height="3.0" fill="#d7d7d7"/><rect x="246.5" y="328.4" width="2.6" height="3.0" fill="#c9c9c9"/><rect x="249.1" y="328.4" width="2.6" height="3.0" fill="#dadada"/><rect x="251.7" y="328.4" width="2.6" height="3.0" fill="#f1f1f1"/><rect x="254.3" y="328.4" width="2.6" height="3.0" fill="#b9b9b9"/><rect x="256.9" y="328.4" width="2.6" height="3.0" fill="#dadada"/><rect x="259.5" y="328.4" width="2.6" height="3.0" fill="#d5d5d5"/><rect x="303.7" y="328.4" width="2.6" height="3.0" fill="#cbcbcb"/><rect x="306.3" y="328.4" width="2.6" height="3.0" fill="#e1e1e1"/><rect x="308.9" y="328.4" width="2.6" height="3.0" fill="#c0c0c0"/><rect x="311.5" y="328.4" width="2.6" height="3.0" fill="#d8d8d8"/><rect x="314.1" y="328.4" width="2.6" height="3.0" fill="#d2d2d2"/><rect x="316.7" y="328.4" width="2.6" height="3.0" fill="#eeeeee"/><rect x="319.3" y="328.4" width="2.6" height="3.0" fill="#d5d5d5"/><rect x="321.9" y="328.4" width="2.6" height="3.0" fill="#b9b9b9"/><rect x="324.5" y="328.4" width="2.6" height="3.0" fill="#cacaca"/><rect x="327.1" y="328.4" width="2.6" height="3.0" fill="#c8c8c8"/><rect x="329.7" y="328.4" width="2.6" height="3.0" fill="#f9f9f9"/><rect x="332.3" y="328.4" width="2.6" height="3.0" fill="#c8c8c8"/><rect x="337.5" y="328.4" width="2.6" height="3.0" fill="#c9c9c9"/><rect x="340.1" y="328.4" width="2.6" height="3.0" fill="#b5b5b5"/><rect x="342.7" y="328.4" width="2.6" height="3.0" fill="#d9d9d9"/><rect x="345.3" y="328.4" width="2.6" height="3.0" fill="#c7c7c7"/><rect x="347.9" y="328.4" width="2.6" height="3.0" fill="#f0f0f0"/><rect x="85.3" y="331.4" width="2.6" height="3.0" fill="#e2e2e2"/><rect x="87.9" y="331.4" width="2.6" height="3.0" fill="#b8b8b8"/><rect x="90.5" y="331.4" width="2.6" height="3.0" fill="#b3b3b3"/><rect x="93.1" y="331.4" width="2.6" height="3.0" fill="#959595"/><rect x="95.7" y="331.4" width="2.6" height="3.0" fill="#b4b4b4"/><rect x="98.3" y="331.4" width="2.6" height="3.0" fill="#afafaf"/><rect x="100.9" y="331.4" width="2.6" height="3.0" fill="#c1c1c1"/><rect x="103.5" y="331.4" width="2.6" height="3.0" fill="#bdbdbd"/><rect x="106.1" y="331.4" width="2.6" height="3.0" fill="#c6c6c6"/><rect x="108.7" y="331.4" width="2.6" height="3.0" fill="#eaeaea"/><rect x="111.3" y="331.4" width="2.6" height="3.0" fill="#a6a6a6"/><rect x="113.9" y="331.4" width="2.6" height="3.0" fill="#b5b5b5"/><rect x="116.5" y="331.4" width="2.6" height="3.0" fill="#9e9e9e"/><rect x="119.1" y="331.4" width="2.6" height="3.0" fill="#b0b0b0"/><rect x="121.7" y="331.4" width="2.6" height="3.0" fill="#b7b7b7"/><rect x="124.3" y="331.4" width="2.6" height="3.0" fill="#c6c6c6"/><rect x="126.9" y="331.4" width="2.6" height="3.0" fill="#dcdcdc"/><rect x="129.5" y="331.4" width="2.6" height="3.0" fill="#aeaeae"/><rect x="132.1" y="331.4" width="2.6" height="3.0" fill="#c0c0c0"/><rect x="134.7" y="331.4" width="2.6" height="3.0" fill="#acacac"/><rect x="137.3" y="331.4" width="2.6" height="3.0" fill="#bebebe"/><rect x="139.9" y="331.4" width="2.6" height="3.0" fill="#a5a5a5"/><rect x="142.5" y="331.4" width="2.6" height="3.0" fill="#bcbcbc"/><rect x="145.1" y="331.4" width="2.6" height="3.0" fill="#c0c0c0"/><rect x="147.7" y="331.4" width="2.6" height="3.0" fill="#a4a4a4"/><rect x="150.3" y="331.4" width="2.6" height="3.0" fill="#bbbbbb"/><rect x="152.9" y="331.4" width="2.6" height="3.0" fill="#cbcbcb"/><rect x="155.5" y="331.4" width="2.6" height="3.0" fill="#a7a7a7"/><rect x="199.7" y="331.4" width="2.6" height="3.0" fill="#e1e1e1"/><rect x="202.3" y="331.4" width="2.6" height="3.0" fill="#9e9e9e"/><rect x="204.9" y="331.4" width="2.6" height="3.0" fill="#c5c5c5"/><rect x="207.5" y="331.4" width="2.6" height="3.0" fill="#bbbbbb"/><rect x="210.1" y="331.4" width="2.6" height="3.0" fill="#e6e6e6"/><rect x="212.7" y="331.4" width="2.6" height="3.0" fill="#b4b4b4"/><rect x="215.3" y="331.4" width="2.6" height="3.0" fill="#b4b4b4"/><rect x="217.9" y="331.4" width="2.6" height="3.0" fill="#d4d4d4"/><rect x="220.5" y="331.4" width="2.6" height="3.0" fill="#c3c3c3"/><rect x="223.1" y="331.4" width="2.6" height="3.0" fill="#a0a0a0"/><rect x="225.7" y="331.4" width="2.6" height="3.0" fill="#a4a4a4"/><rect x="228.3" y="331.4" width="2.6" height="3.0" fill="#e4e4e4"/><rect x="230.9" y="331.4" width="2.6" height="3.0" fill="#b9b9b9"/><rect x="233.5" y="331.4" width="2.6" height="3.0" fill="#bdbdbd"/><rect x="236.1" y="331.4" width="2.6" height="3.0" fill="#969696"/><rect x="238.7" y="331.4" width="2.6" height="3.0" fill="#c2c2c2"/><rect x="241.3" y="331.4" width="2.6" height="3.0" fill="#d1d1d1"/><rect x="243.9" y="331.4" width="2.6" height="3.0" fill="#b0b0b0"/><rect x="246.5" y="331.4" width="2.6" height="3.0" fill="#bcbcbc"/><rect x="249.1" y="331.4" width="2.6" height="3.0" fill="#d9d9d9"/><rect x="251.7" y="331.4" width="2.6" height="3.0" fill="#d6d6d6"/><rect x="254.3" y="331.4" width="2.6" height="3.0" fill="#a8a8a8"/><rect x="256.9" y="331.4" width="2.6" height="3.0" fill="#bebebe"/><rect x="259.5" y="331.4" width="2.6" height="3.0" fill="#dddddd"/><rect x="303.7" y="331.4" width="2.6" height="3.0" fill="#c1c1c1"/><rect x="306.3" y="331.4" width="2.6" height="3.0" fill="#d7d7d7"/><rect x="308.9" y="331.4" width="2.6" height="3.0" fill="#989898"/><rect x="311.5" y="331.4" width="2.6" height="3.0" fill="#bbbbbb"/><rect x="314.1" y="331.4" width="2.6" height="3.0" fill="#d8d8d8"/><rect x="316.7" y="331.4" width="2.6" height="3.0" fill="#e5e5e5"/><rect x="319.3" y="331.4" width="2.6" height="3.0" fill="#b5b5b5"/><rect x="321.9" y="331.4" width="2.6" height="3.0" fill="#a4a4a4"/><rect x="324.5" y="331.4" width="2.6" height="3.0" fill="#a0a0a0"/><rect x="327.1" y="331.4" width="2.6" height="3.0" fill="#b0b0b0"/><rect x="329.7" y="331.4" width="2.6" height="3.0" fill="#eaeaea"/><rect x="332.3" y="331.4" width="2.6" height="3.0" fill="#acacac"/><rect x="334.9" y="331.4" width="2.6" height="3.0" fill="#eeeeee"/><rect x="337.5" y="331.4" width="2.6" height="3.0" fill="#a8a8a8"/><rect x="340.1" y="331.4" width="2.6" height="3.0" fill="#cdcdcd"/><rect x="342.7" y="331.4" width="2.6" height="3.0" fill="#b2b2b2"/><rect x="345.3" y="331.4" width="2.6" height="3.0" fill="#a8a8a8"/><rect x="347.9" y="331.4" width="2.6" height="3.0" fill="#e2e2e2"/><rect x="139.9" y="334.3" width="2.6" height="3.0" fill="#d3d3d3"/><rect x="100.9" y="342.1" width="2.6" height="3.0" fill="#ececec"/><rect x="103.5" y="342.1" width="2.6" height="3.0" fill="#d1d1d1"/><rect x="106.1" y="342.1" width="2.6" height="3.0" fill="#c7c7c7"/><rect x="108.7" y="342.1" width="2.6" height="3.0" fill="#f5f5f5"/><rect x="111.3" y="342.1" width="2.6" height="3.0" fill="#d6d6d6"/><rect x="113.9" y="342.1" width="2.6" height="3.0" fill="#d3d3d3"/><rect x="116.5" y="342.1" width="2.6" height="3.0" fill="#c3c3c3"/><rect x="119.1" y="342.1" width="2.6" height="3.0" fill="#c7c7c7"/><rect x="121.7" y="342.1" width="2.6" height="3.0" fill="#d8d8d8"/><rect x="124.3" y="342.1" width="2.6" height="3.0" fill="#cccccc"/><rect x="126.9" y="342.1" width="2.6" height="3.0" fill="#cdcdcd"/><rect x="129.5" y="342.1" width="2.6" height="3.0" fill="#d1d1d1"/><rect x="132.1" y="342.1" width="2.6" height="3.0" fill="#cfcfcf"/><rect x="134.7" y="342.1" width="2.6" height="3.0" fill="#d2d2d2"/><rect x="137.3" y="342.1" width="2.6" height="3.0" fill="#cfcfcf"/><rect x="139.9" y="342.1" width="2.6" height="3.0" fill="#d2d2d2"/><rect x="142.5" y="342.1" width="2.6" height="3.0" fill="#f3f3f3"/><rect x="199.7" y="342.1" width="2.6" height="3.0" fill="#eeeeee"/><rect x="202.3" y="342.1" width="2.6" height="3.0" fill="#cdcdcd"/><rect x="204.9" y="342.1" width="2.6" height="3.0" fill="#d2d2d2"/><rect x="207.5" y="342.1" width="2.6" height="3.0" fill="#d5d5d5"/><rect x="210.1" y="342.1" width="2.6" height="3.0" fill="#f3f3f3"/><rect x="212.7" y="342.1" width="2.6" height="3.0" fill="#c3c3c3"/><rect x="215.3" y="342.1" width="2.6" height="3.0" fill="#e1e1e1"/><rect x="217.9" y="342.1" width="2.6" height="3.0" fill="#cccccc"/><rect x="220.5" y="342.1" width="2.6" height="3.0" fill="#e8e8e8"/><rect x="223.1" y="342.1" width="2.6" height="3.0" fill="#bfbfbf"/><rect x="225.7" y="342.1" width="2.6" height="3.0" fill="#d1d1d1"/><rect x="228.3" y="342.1" width="2.6" height="3.0" fill="#d4d4d4"/><rect x="230.9" y="342.1" width="2.6" height="3.0" fill="#cecece"/><rect x="233.5" y="342.1" width="2.6" height="3.0" fill="#d3d3d3"/><rect x="236.1" y="342.1" width="2.6" height="3.0" fill="#dcdcdc"/><rect x="238.7" y="342.1" width="2.6" height="3.0" fill="#d0d0d0"/><rect x="241.3" y="342.1" width="2.6" height="3.0" fill="#dadada"/><rect x="243.9" y="342.1" width="2.6" height="3.0" fill="#c2c2c2"/><rect x="246.5" y="342.1" width="2.6" height="3.0" fill="#cacaca"/><rect x="249.1" y="342.1" width="2.6" height="3.0" fill="#dedede"/><rect x="251.7" y="342.1" width="2.6" height="3.0" fill="#ebebeb"/><rect x="254.3" y="342.1" width="2.6" height="3.0" fill="#cdcdcd"/><rect x="256.9" y="342.1" width="2.6" height="3.0" fill="#d4d4d4"/><rect x="259.5" y="342.1" width="2.6" height="3.0" fill="#d9d9d9"/><rect x="303.7" y="342.1" width="2.6" height="3.0" fill="#cfcfcf"/><rect x="306.3" y="342.1" width="2.6" height="3.0" fill="#e5e5e5"/><rect x="308.9" y="342.1" width="2.6" height="3.0" fill="#c5c5c5"/><rect x="311.5" y="342.1" width="2.6" height="3.0" fill="#d8d8d8"/><rect x="314.1" y="342.1" width="2.6" height="3.0" fill="#d7d7d7"/><rect x="316.7" y="342.1" width="2.6" height="3.0" fill="#eeeeee"/><rect x="319.3" y="342.1" width="2.6" height="3.0" fill="#d9d9d9"/><rect x="321.9" y="342.1" width="2.6" height="3.0" fill="#c8c8c8"/><rect x="324.5" y="342.1" width="2.6" height="3.0" fill="#d1d1d1"/><rect x="327.1" y="342.1" width="2.6" height="3.0" fill="#cfcfcf"/><rect x="329.7" y="342.1" width="2.6" height="3.0" fill="#f9f9f9"/><rect x="332.3" y="342.1" width="2.6" height="3.0" fill="#cdcdcd"/><rect x="337.5" y="342.1" width="2.6" height="3.0" fill="#c7c7c7"/><rect x="340.1" y="342.1" width="2.6" height="3.0" fill="#eeeeee"/><rect x="342.7" y="342.1" width="2.6" height="3.0" fill="#c9c9c9"/><rect x="345.3" y="342.1" width="2.6" height="3.0" fill="#cdcdcd"/><rect x="347.9" y="342.1" width="2.6" height="3.0" fill="#e5e5e5"/><rect x="100.9" y="345.1" width="2.6" height="3.0" fill="#d7d7d7"/><rect x="103.5" y="345.1" width="2.6" height="3.0" fill="#d0d0d0"/><rect x="106.1" y="345.1" width="2.6" height="3.0" fill="#9d9d9d"/><rect x="108.7" y="345.1" width="2.6" height="3.0" fill="#d7d7d7"/><rect x="111.3" y="345.1" width="2.6" height="3.0" fill="#b9b9b9"/><rect x="116.5" y="345.1" width="2.6" height="3.0" fill="#cccccc"/><rect x="119.1" y="345.1" width="2.6" height="3.0" fill="#9b9b9b"/><rect x="121.7" y="345.1" width="2.6" height="3.0" fill="#b8b8b8"/><rect x="124.3" y="345.1" width="2.6" height="3.0" fill="#b3b3b3"/><rect x="126.9" y="345.1" width="2.6" height="3.0" fill="#b0b0b0"/><rect x="129.5" y="345.1" width="2.6" height="3.0" fill="#d0d0d0"/><rect x="132.1" y="345.1" width="2.6" height="3.0" fill="#a4a4a4"/><rect x="134.7" y="345.1" width="2.6" height="3.0" fill="#d1d1d1"/><rect x="137.3" y="345.1" width="2.6" height="3.0" fill="#a3a3a3"/><rect x="139.9" y="345.1" width="2.6" height="3.0" fill="#d3d3d3"/><rect x="142.5" y="345.1" width="2.6" height="3.0" fill="#f2f2f2"/><rect x="199.7" y="345.1" width="2.6" height="3.0" fill="#d6d6d6"/><rect x="202.3" y="345.1" width="2.6" height="3.0" fill="#969696"/><rect x="204.9" y="345.1" width="2.6" height="3.0" fill="#aeaeae"/><rect x="207.5" y="345.1" width="2.6" height="3.0" fill="#bababa"/><rect x="210.1" y="345.1" width="2.6" height="3.0" fill="#c3c3c3"/><rect x="212.7" y="345.1" width="2.6" height="3.0" fill="#afafaf"/><rect x="215.3" y="345.1" width="2.6" height="3.0" fill="#c6c6c6"/><rect x="217.9" y="345.1" width="2.6" height="3.0" fill="#a9a9a9"/><rect x="220.5" y="345.1" width="2.6" height="3.0" fill="#f1f1f1"/><rect x="223.1" y="345.1" width="2.6" height="3.0" fill="#c3c3c3"/><rect x="225.7" y="345.1" width="2.6" height="3.0" fill="#b5b5b5"/><rect x="228.3" y="345.1" width="2.6" height="3.0" fill="#b8b8b8"/><rect x="230.9" y="345.1" width="2.6" height="3.0" fill="#b7b7b7"/><rect x="233.5" y="345.1" width="2.6" height="3.0" fill="#a7a7a7"/><rect x="236.1" y="345.1" width="2.6" height="3.0" fill="#c6c6c6"/><rect x="238.7" y="345.1" width="2.6" height="3.0" fill="#c6c6c6"/><rect x="241.3" y="345.1" width="2.6" height="3.0" fill="#dbdbdb"/><rect x="243.9" y="345.1" width="2.6" height="3.0" fill="#919191"/><rect x="246.5" y="345.1" width="2.6" height="3.0" fill="#adadad"/><rect x="249.1" y="345.1" width="2.6" height="3.0" fill="#dfdfdf"/><rect x="251.7" y="345.1" width="2.6" height="3.0" fill="#eaeaea"/><rect x="254.3" y="345.1" width="2.6" height="3.0" fill="#a7a7a7"/><rect x="256.9" y="345.1" width="2.6" height="3.0" fill="#bcbcbc"/><rect x="259.5" y="345.1" width="2.6" height="3.0" fill="#c3c3c3"/><rect x="303.7" y="345.1" width="2.6" height="3.0" fill="#bdbdbd"/><rect x="306.3" y="345.1" width="2.6" height="3.0" fill="#d2d2d2"/><rect x="308.9" y="345.1" width="2.6" height="3.0" fill="#939393"/><rect x="311.5" y="345.1" width="2.6" height="3.0" fill="#bbbbbb"/><rect x="314.1" y="345.1" width="2.6" height="3.0" fill="#d3d3d3"/><rect x="316.7" y="345.1" width="2.6" height="3.0" fill="#e5e5e5"/><rect x="319.3" y="345.1" width="2.6" height="3.0" fill="#b0b0b0"/><rect x="321.9" y="345.1" width="2.6" height="3.0" fill="#969696"/><rect x="324.5" y="345.1" width="2.6" height="3.0" fill="#9a9a9a"/><rect x="327.1" y="345.1" width="2.6" height="3.0" fill="#ababab"/><rect x="329.7" y="345.1" width="2.6" height="3.0" fill="#eaeaea"/><rect x="332.3" y="345.1" width="2.6" height="3.0" fill="#a7a7a7"/><rect x="334.9" y="345.1" width="2.6" height="3.0" fill="#efefef"/><rect x="337.5" y="345.1" width="2.6" height="3.0" fill="#aaaaaa"/><rect x="340.1" y="345.1" width="2.6" height="3.0" fill="#efefef"/><rect x="342.7" y="345.1" width="2.6" height="3.0" fill="#cdcdcd"/><rect x="345.3" y="345.1" width="2.6" height="3.0" fill="#a8a8a8"/><rect x="347.9" y="345.1" width="2.6" height="3.0" fill="#ededed"/><rect x="100.9" y="355.9" width="2.6" height="3.0" fill="#a3a3a3"/><rect x="103.5" y="355.9" width="2.6" height="3.0" fill="#c5c5c5"/><rect x="106.1" y="355.9" width="2.6" height="3.0" fill="#c7c7c7"/><rect x="108.7" y="355.9" width="2.6" height="3.0" fill="#d7d7d7"/><rect x="111.3" y="355.9" width="2.6" height="3.0" fill="#b1b1b1"/><rect x="113.9" y="355.9" width="2.6" height="3.0" fill="#c0c0c0"/><rect x="116.5" y="355.9" width="2.6" height="3.0" fill="#f9f9f9"/><rect x="119.1" y="355.9" width="2.6" height="3.0" fill="#bdbdbd"/><rect x="121.7" y="355.9" width="2.6" height="3.0" fill="#c4c4c4"/><rect x="124.3" y="355.9" width="2.6" height="3.0" fill="#c7c7c7"/><rect x="126.9" y="355.9" width="2.6" height="3.0" fill="#c7c7c7"/><rect x="129.5" y="355.9" width="2.6" height="3.0" fill="#b5b5b5"/><rect x="132.1" y="355.9" width="2.6" height="3.0" fill="#bababa"/><rect x="134.7" y="355.9" width="2.6" height="3.0" fill="#bdbdbd"/><rect x="137.3" y="355.9" width="2.6" height="3.0" fill="#d1d1d1"/><rect x="139.9" y="355.9" width="2.6" height="3.0" fill="#e1e1e1"/><rect x="142.5" y="355.9" width="2.6" height="3.0" fill="#e4e4e4"/><rect x="199.7" y="355.9" width="2.6" height="3.0" fill="#c2c2c2"/><rect x="202.3" y="355.9" width="2.6" height="3.0" fill="#cccccc"/><rect x="204.9" y="355.9" width="2.6" height="3.0" fill="#bbbbbb"/><rect x="207.5" y="355.9" width="2.6" height="3.0" fill="#cccccc"/><rect x="210.1" y="355.9" width="2.6" height="3.0" fill="#afafaf"/><rect x="212.7" y="355.9" width="2.6" height="3.0" fill="#c5c5c5"/><rect x="215.3" y="355.9" width="2.6" height="3.0" fill="#a6a6a6"/><rect x="217.9" y="355.9" width="2.6" height="3.0" fill="#d8d8d8"/><rect x="220.5" y="355.9" width="2.6" height="3.0" fill="#c2c2c2"/><rect x="223.1" y="355.9" width="2.6" height="3.0" fill="#b8b8b8"/><rect x="225.7" y="355.9" width="2.6" height="3.0" fill="#9d9d9d"/><rect x="228.3" y="355.9" width="2.6" height="3.0" fill="#efefef"/><rect x="230.9" y="355.9" width="2.6" height="3.0" fill="#d1d1d1"/><rect x="233.5" y="355.9" width="2.6" height="3.0" fill="#bebebe"/><rect x="236.1" y="355.9" width="2.6" height="3.0" fill="#bababa"/><rect x="238.7" y="355.9" width="2.6" height="3.0" fill="#f1f1f1"/><rect x="241.3" y="355.9" width="2.6" height="3.0" fill="#a7a7a7"/><rect x="243.9" y="355.9" width="2.6" height="3.0" fill="#c4c4c4"/><rect x="246.5" y="355.9" width="2.6" height="3.0" fill="#a3a3a3"/><rect x="249.1" y="355.9" width="2.6" height="3.0" fill="#f0f0f0"/><rect x="251.7" y="355.9" width="2.6" height="3.0" fill="#c0c0c0"/><rect x="254.3" y="355.9" width="2.6" height="3.0" fill="#b1b1b1"/><rect x="256.9" y="355.9" width="2.6" height="3.0" fill="#d1d1d1"/><rect x="259.5" y="355.9" width="2.6" height="3.0" fill="#f1f1f1"/><rect x="303.7" y="355.9" width="2.6" height="3.0" fill="#c3c3c3"/><rect x="306.3" y="355.9" width="2.6" height="3.0" fill="#d9d9d9"/><rect x="308.9" y="355.9" width="2.6" height="3.0" fill="#afafaf"/><rect x="311.5" y="355.9" width="2.6" height="3.0" fill="#d7d7d7"/><rect x="314.1" y="355.9" width="2.6" height="3.0" fill="#c8c8c8"/><rect x="316.7" y="355.9" width="2.6" height="3.0" fill="#ededed"/><rect x="319.3" y="355.9" width="2.6" height="3.0" fill="#cbcbcb"/><rect x="321.9" y="355.9" width="2.6" height="3.0" fill="#a0a0a0"/><rect x="324.5" y="355.9" width="2.6" height="3.0" fill="#bbbbbb"/><rect x="327.1" y="355.9" width="2.6" height="3.0" fill="#b5b5b5"/><rect x="329.7" y="355.9" width="2.6" height="3.0" fill="#f9f9f9"/><rect x="332.3" y="355.9" width="2.6" height="3.0" fill="#bebebe"/><rect x="337.5" y="355.9" width="2.6" height="3.0" fill="#b9b9b9"/><rect x="340.1" y="355.9" width="2.6" height="3.0" fill="#cfcfcf"/><rect x="342.7" y="355.9" width="2.6" height="3.0" fill="#b5b5b5"/><rect x="345.3" y="355.9" width="2.6" height="3.0" fill="#9f9f9f"/><rect x="347.9" y="355.9" width="2.6" height="3.0" fill="#ebebeb"/><rect x="100.9" y="358.8" width="2.6" height="3.0" fill="#c9c9c9"/><rect x="103.5" y="358.8" width="2.6" height="3.0" fill="#b5b5b5"/><rect x="106.1" y="358.8" width="2.6" height="3.0" fill="#bababa"/><rect x="108.7" y="358.8" width="2.6" height="3.0" fill="#c7c7c7"/><rect x="111.3" y="358.8" width="2.6" height="3.0" fill="#bababa"/><rect x="113.9" y="358.8" width="2.6" height="3.0" fill="#acacac"/><rect x="116.5" y="358.8" width="2.6" height="3.0" fill="#dddddd"/><rect x="119.1" y="358.8" width="2.6" height="3.0" fill="#dadada"/><rect x="121.7" y="358.8" width="2.6" height="3.0" fill="#bdbdbd"/><rect x="124.3" y="358.8" width="2.6" height="3.0" fill="#eaeaea"/><rect x="126.9" y="358.8" width="2.6" height="3.0" fill="#e3e3e3"/><rect x="129.5" y="358.8" width="2.6" height="3.0" fill="#c5c5c5"/><rect x="132.1" y="358.8" width="2.6" height="3.0" fill="#f3f3f3"/><rect x="134.7" y="358.8" width="2.6" height="3.0" fill="#adadad"/><rect x="137.3" y="358.8" width="2.6" height="3.0" fill="#a5a5a5"/><rect x="139.9" y="358.8" width="2.6" height="3.0" fill="#b9b9b9"/><rect x="142.5" y="358.8" width="2.6" height="3.0" fill="#e7e7e7"/><rect x="199.7" y="358.8" width="2.6" height="3.0" fill="#d0d0d0"/><rect x="202.3" y="358.8" width="2.6" height="3.0" fill="#ececec"/><rect x="204.9" y="358.8" width="2.6" height="3.0" fill="#c0c0c0"/><rect x="207.5" y="358.8" width="2.6" height="3.0" fill="#d1d1d1"/><rect x="210.1" y="358.8" width="2.6" height="3.0" fill="#c1c1c1"/><rect x="212.7" y="358.8" width="2.6" height="3.0" fill="#d9d9d9"/><rect x="215.3" y="358.8" width="2.6" height="3.0" fill="#c3c3c3"/><rect x="217.9" y="358.8" width="2.6" height="3.0" fill="#ebebeb"/><rect x="220.5" y="358.8" width="2.6" height="3.0" fill="#cbcbcb"/><rect x="223.1" y="358.8" width="2.6" height="3.0" fill="#c4c4c4"/><rect x="225.7" y="358.8" width="2.6" height="3.0" fill="#b2b2b2"/><rect x="228.3" y="358.8" width="2.6" height="3.0" fill="#e6e6e6"/><rect x="230.9" y="358.8" width="2.6" height="3.0" fill="#b8b8b8"/><rect x="233.5" y="358.8" width="2.6" height="3.0" fill="#cecece"/><rect x="236.1" y="358.8" width="2.6" height="3.0" fill="#cccccc"/><rect x="238.7" y="358.8" width="2.6" height="3.0" fill="#dadada"/><rect x="241.3" y="358.8" width="2.6" height="3.0" fill="#cacaca"/><rect x="243.9" y="358.8" width="2.6" height="3.0" fill="#a6a6a6"/><rect x="246.5" y="358.8" width="2.6" height="3.0" fill="#c1c1c1"/><rect x="249.1" y="358.8" width="2.6" height="3.0" fill="#eaeaea"/><rect x="251.7" y="358.8" width="2.6" height="3.0" fill="#cccccc"/><rect x="254.3" y="358.8" width="2.6" height="3.0" fill="#b4b4b4"/><rect x="256.9" y="358.8" width="2.6" height="3.0" fill="#d1d1d1"/><rect x="259.5" y="358.8" width="2.6" height="3.0" fill="#f0f0f0"/><rect x="303.7" y="358.8" width="2.6" height="3.0" fill="#c9c9c9"/><rect x="306.3" y="358.8" width="2.6" height="3.0" fill="#dfdfdf"/><rect x="308.9" y="358.8" width="2.6" height="3.0" fill="#a8a8a8"/><rect x="311.5" y="358.8" width="2.6" height="3.0" fill="#bcbcbc"/><rect x="314.1" y="358.8" width="2.6" height="3.0" fill="#e2e2e2"/><rect x="316.7" y="358.8" width="2.6" height="3.0" fill="#e5e5e5"/><rect x="319.3" y="358.8" width="2.6" height="3.0" fill="#bfbfbf"/><rect x="321.9" y="358.8" width="2.6" height="3.0" fill="#bebebe"/><rect x="324.5" y="358.8" width="2.6" height="3.0" fill="#afafaf"/><rect x="327.1" y="358.8" width="2.6" height="3.0" fill="#c4c4c4"/><rect x="329.7" y="358.8" width="2.6" height="3.0" fill="#eaeaea"/><rect x="332.3" y="358.8" width="2.6" height="3.0" fill="#b6b6b6"/><rect x="334.9" y="358.8" width="2.6" height="3.0" fill="#efefef"/><rect x="337.5" y="358.8" width="2.6" height="3.0" fill="#b9b9b9"/><rect x="340.1" y="358.8" width="2.6" height="3.0" fill="#c6c6c6"/><rect x="342.7" y="358.8" width="2.6" height="3.0" fill="#c6c6c6"/><rect x="345.3" y="358.8" width="2.6" height="3.0" fill="#bebebe"/><rect x="347.9" y="358.8" width="2.6" height="3.0" fill="#dcdcdc"/><rect x="139.9" y="361.8" width="2.6" height="3.0" fill="#e9e9e9"/><rect x="98.3" y="369.6" width="2.6" height="3.0" fill="#e3e3e3"/><rect x="100.9" y="369.6" width="2.6" height="3.0" fill="#b9b9b9"/><rect x="103.5" y="369.6" width="2.6" height="3.0" fill="#d8d8d8"/><rect x="106.1" y="369.6" width="2.6" height="3.0" fill="#dbdbdb"/><rect x="108.7" y="369.6" width="2.6" height="3.0" fill="#d6d6d6"/><rect x="111.3" y="369.6" width="2.6" height="3.0" fill="#dbdbdb"/><rect x="113.9" y="369.6" width="2.6" height="3.0" fill="#d4d4d4"/><rect x="116.5" y="369.6" width="2.6" height="3.0" fill="#c3c3c3"/><rect x="119.1" y="369.6" width="2.6" height="3.0" fill="#d6d6d6"/><rect x="121.7" y="369.6" width="2.6" height="3.0" fill="#c3c3c3"/><rect x="124.3" y="369.6" width="2.6" height="3.0" fill="#d9d9d9"/><rect x="126.9" y="369.6" width="2.6" height="3.0" fill="#c5c5c5"/><rect x="129.5" y="369.6" width="2.6" height="3.0" fill="#dedede"/><rect x="132.1" y="369.6" width="2.6" height="3.0" fill="#d0d0d0"/><rect x="134.7" y="369.6" width="2.6" height="3.0" fill="#cbcbcb"/><rect x="137.3" y="369.6" width="2.6" height="3.0" fill="#e7e7e7"/><rect x="139.9" y="369.6" width="2.6" height="3.0" fill="#d7d7d7"/><rect x="142.5" y="369.6" width="2.6" height="3.0" fill="#c1c1c1"/><rect x="199.7" y="369.6" width="2.6" height="3.0" fill="#f7f7f7"/><rect x="202.3" y="369.6" width="2.6" height="3.0" fill="#c7c7c7"/><rect x="204.9" y="369.6" width="2.6" height="3.0" fill="#c0c0c0"/><rect x="207.5" y="369.6" width="2.6" height="3.0" fill="#cacaca"/><rect x="210.1" y="369.6" width="2.6" height="3.0" fill="#c1c1c1"/><rect x="212.7" y="369.6" width="2.6" height="3.0" fill="#bababa"/><rect x="215.3" y="369.6" width="2.6" height="3.0" fill="#dfdfdf"/><rect x="217.9" y="369.6" width="2.6" height="3.0" fill="#cbcbcb"/><rect x="220.5" y="369.6" width="2.6" height="3.0" fill="#dbdbdb"/><rect x="223.1" y="369.6" width="2.6" height="3.0" fill="#bebebe"/><rect x="225.7" y="369.6" width="2.6" height="3.0" fill="#bababa"/><rect x="228.3" y="369.6" width="2.6" height="3.0" fill="#d8d8d8"/><rect x="230.9" y="369.6" width="2.6" height="3.0" fill="#b2b2b2"/><rect x="233.5" y="369.6" width="2.6" height="3.0" fill="#c8c8c8"/><rect x="236.1" y="369.6" width="2.6" height="3.0" fill="#d0d0d0"/><rect x="238.7" y="369.6" width="2.6" height="3.0" fill="#dfdfdf"/><rect x="241.3" y="369.6" width="2.6" height="3.0" fill="#c4c4c4"/><rect x="243.9" y="369.6" width="2.6" height="3.0" fill="#c4c4c4"/><rect x="246.5" y="369.6" width="2.6" height="3.0" fill="#cbcbcb"/><rect x="249.1" y="369.6" width="2.6" height="3.0" fill="#ececec"/><rect x="251.7" y="369.6" width="2.6" height="3.0" fill="#e3e3e3"/><rect x="254.3" y="369.6" width="2.6" height="3.0" fill="#bfbfbf"/><rect x="256.9" y="369.6" width="2.6" height="3.0" fill="#ababab"/><rect x="259.5" y="369.6" width="2.6" height="3.0" fill="#dfdfdf"/><rect x="303.7" y="369.6" width="2.6" height="3.0" fill="#c7c7c7"/><rect x="306.3" y="369.6" width="2.6" height="3.0" fill="#dcdcdc"/><rect x="308.9" y="369.6" width="2.6" height="3.0" fill="#b9b9b9"/><rect x="311.5" y="369.6" width="2.6" height="3.0" fill="#d8d8d8"/><rect x="314.1" y="369.6" width="2.6" height="3.0" fill="#cdcdcd"/><rect x="316.7" y="369.6" width="2.6" height="3.0" fill="#ededed"/><rect x="319.3" y="369.6" width="2.6" height="3.0" fill="#d0d0d0"/><rect x="321.9" y="369.6" width="2.6" height="3.0" fill="#a9a9a9"/><rect x="324.5" y="369.6" width="2.6" height="3.0" fill="#c4c4c4"/><rect x="327.1" y="369.6" width="2.6" height="3.0" fill="#bfbfbf"/><rect x="329.7" y="369.6" width="2.6" height="3.0" fill="#f9f9f9"/><rect x="332.3" y="369.6" width="2.6" height="3.0" fill="#c3c3c3"/><rect x="337.5" y="369.6" width="2.6" height="3.0" fill="#bdbdbd"/><rect x="340.1" y="369.6" width="2.6" height="3.0" fill="#d3d3d3"/><rect x="342.7" y="369.6" width="2.6" height="3.0" fill="#c0c0c0"/><rect x="345.3" y="369.6" width="2.6" height="3.0" fill="#c0c0c0"/><rect x="347.9" y="369.6" width="2.6" height="3.0" fill="#efefef"/><rect x="98.3" y="372.6" width="2.6" height="3.0" fill="#ececec"/><rect x="100.9" y="372.6" width="2.6" height="3.0" fill="#bebebe"/><rect x="103.5" y="372.6" width="2.6" height="3.0" fill="#b2b2b2"/><rect x="106.1" y="372.6" width="2.6" height="3.0" fill="#cfcfcf"/><rect x="108.7" y="372.6" width="2.6" height="3.0" fill="#a9a9a9"/><rect x="111.3" y="372.6" width="2.6" height="3.0" fill="#a0a0a0"/><rect x="113.9" y="372.6" width="2.6" height="3.0" fill="#b1b1b1"/><rect x="116.5" y="372.6" width="2.6" height="3.0" fill="#ababab"/><rect x="119.1" y="372.6" width="2.6" height="3.0" fill="#afafaf"/><rect x="121.7" y="372.6" width="2.6" height="3.0" fill="#c0c0c0"/><rect x="124.3" y="372.6" width="2.6" height="3.0" fill="#dbdbdb"/><rect x="126.9" y="372.6" width="2.6" height="3.0" fill="#a8a8a8"/><rect x="129.5" y="372.6" width="2.6" height="3.0" fill="#adadad"/><rect x="132.1" y="372.6" width="2.6" height="3.0" fill="#a9a9a9"/><rect x="134.7" y="372.6" width="2.6" height="3.0" fill="#aeaeae"/><rect x="137.3" y="372.6" width="2.6" height="3.0" fill="#d9d9d9"/><rect x="139.9" y="372.6" width="2.6" height="3.0" fill="#e7e7e7"/><rect x="142.5" y="372.6" width="2.6" height="3.0" fill="#b0b0b0"/><rect x="145.1" y="372.6" width="2.6" height="3.0" fill="#f6f6f6"/><rect x="199.7" y="372.6" width="2.6" height="3.0" fill="#f6f6f6"/><rect x="202.3" y="372.6" width="2.6" height="3.0" fill="#b4b4b4"/><rect x="204.9" y="372.6" width="2.6" height="3.0" fill="#bcbcbc"/><rect x="207.5" y="372.6" width="2.6" height="3.0" fill="#c4c4c4"/><rect x="210.1" y="372.6" width="2.6" height="3.0" fill="#bdbdbd"/><rect x="212.7" y="372.6" width="2.6" height="3.0" fill="#b3b3b3"/><rect x="215.3" y="372.6" width="2.6" height="3.0" fill="#cdcdcd"/><rect x="217.9" y="372.6" width="2.6" height="3.0" fill="#bfbfbf"/><rect x="220.5" y="372.6" width="2.6" height="3.0" fill="#d7d7d7"/><rect x="223.1" y="372.6" width="2.6" height="3.0" fill="#b7b7b7"/><rect x="225.7" y="372.6" width="2.6" height="3.0" fill="#b5b5b5"/><rect x="228.3" y="372.6" width="2.6" height="3.0" fill="#d6d6d6"/><rect x="230.9" y="372.6" width="2.6" height="3.0" fill="#d5d5d5"/><rect x="233.5" y="372.6" width="2.6" height="3.0" fill="#aeaeae"/><rect x="236.1" y="372.6" width="2.6" height="3.0" fill="#cfcfcf"/><rect x="238.7" y="372.6" width="2.6" height="3.0" fill="#dddddd"/><rect x="241.3" y="372.6" width="2.6" height="3.0" fill="#c1c1c1"/><rect x="243.9" y="372.6" width="2.6" height="3.0" fill="#bfbfbf"/><rect x="246.5" y="372.6" width="2.6" height="3.0" fill="#c9c9c9"/><rect x="249.1" y="372.6" width="2.6" height="3.0" fill="#dadada"/><rect x="251.7" y="372.6" width="2.6" height="3.0" fill="#e8e8e8"/><rect x="254.3" y="372.6" width="2.6" height="3.0" fill="#dcdcdc"/><rect x="256.9" y="372.6" width="2.6" height="3.0" fill="#a4a4a4"/><rect x="259.5" y="372.6" width="2.6" height="3.0" fill="#dbdbdb"/><rect x="303.7" y="372.6" width="2.6" height="3.0" fill="#c5c5c5"/><rect x="306.3" y="372.6" width="2.6" height="3.0" fill="#dcdcdc"/><rect x="308.9" y="372.6" width="2.6" height="3.0" fill="#9f9f9f"/><rect x="311.5" y="372.6" width="2.6" height="3.0" fill="#bbbbbb"/><rect x="314.1" y="372.6" width="2.6" height="3.0" fill="#dedede"/><rect x="316.7" y="372.6" width="2.6" height="3.0" fill="#e5e5e5"/><rect x="319.3" y="372.6" width="2.6" height="3.0" fill="#bababa"/><rect x="321.9" y="372.6" width="2.6" height="3.0" fill="#b4b4b4"/><rect x="324.5" y="372.6" width="2.6" height="3.0" fill="#a7a7a7"/><rect x="327.1" y="372.6" width="2.6" height="3.0" fill="#bababa"/><rect x="329.7" y="372.6" width="2.6" height="3.0" fill="#eaeaea"/><rect x="332.3" y="372.6" width="2.6" height="3.0" fill="#b1b1b1"/><rect x="334.9" y="372.6" width="2.6" height="3.0" fill="#efefef"/><rect x="337.5" y="372.6" width="2.6" height="3.0" fill="#b4b4b4"/><rect x="340.1" y="372.6" width="2.6" height="3.0" fill="#c2c2c2"/><rect x="342.7" y="372.6" width="2.6" height="3.0" fill="#bababa"/><rect x="345.3" y="372.6" width="2.6" height="3.0" fill="#b0b0b0"/><rect x="347.9" y="372.6" width="2.6" height="3.0" fill="#e4e4e4"/><rect x="111.3" y="375.5" width="2.6" height="3.0" fill="#ededed"/><rect x="113.9" y="375.5" width="2.6" height="3.0" fill="#e3e3e3"/><rect x="98.3" y="383.4" width="2.6" height="3.0" fill="#e2e2e2"/><rect x="100.9" y="383.4" width="2.6" height="3.0" fill="#cfcfcf"/><rect x="103.5" y="383.4" width="2.6" height="3.0" fill="#bababa"/><rect x="106.1" y="383.4" width="2.6" height="3.0" fill="#d1d1d1"/><rect x="108.7" y="383.4" width="2.6" height="3.0" fill="#cbcbcb"/><rect x="111.3" y="383.4" width="2.6" height="3.0" fill="#c9c9c9"/><rect x="113.9" y="383.4" width="2.6" height="3.0" fill="#b9b9b9"/><rect x="116.5" y="383.4" width="2.6" height="3.0" fill="#c0c0c0"/><rect x="119.1" y="383.4" width="2.6" height="3.0" fill="#c8c8c8"/><rect x="121.7" y="383.4" width="2.6" height="3.0" fill="#dfdfdf"/><rect x="124.3" y="383.4" width="2.6" height="3.0" fill="#c6c6c6"/><rect x="126.9" y="383.4" width="2.6" height="3.0" fill="#cacaca"/><rect x="129.5" y="383.4" width="2.6" height="3.0" fill="#c5c5c5"/><rect x="132.1" y="383.4" width="2.6" height="3.0" fill="#d0d0d0"/><rect x="134.7" y="383.4" width="2.6" height="3.0" fill="#bfbfbf"/><rect x="137.3" y="383.4" width="2.6" height="3.0" fill="#bababa"/><rect x="139.9" y="383.4" width="2.6" height="3.0" fill="#c6c6c6"/><rect x="142.5" y="383.4" width="2.6" height="3.0" fill="#dedede"/><rect x="199.7" y="383.4" width="2.6" height="3.0" fill="#dadada"/><rect x="202.3" y="383.4" width="2.6" height="3.0" fill="#c1c1c1"/><rect x="204.9" y="383.4" width="2.6" height="3.0" fill="#c9c9c9"/><rect x="207.5" y="383.4" width="2.6" height="3.0" fill="#cecece"/><rect x="210.1" y="383.4" width="2.6" height="3.0" fill="#e2e2e2"/><rect x="212.7" y="383.4" width="2.6" height="3.0" fill="#c1c1c1"/><rect x="215.3" y="383.4" width="2.6" height="3.0" fill="#dbdbdb"/><rect x="217.9" y="383.4" width="2.6" height="3.0" fill="#cccccc"/><rect x="220.5" y="383.4" width="2.6" height="3.0" fill="#c9c9c9"/><rect x="223.1" y="383.4" width="2.6" height="3.0" fill="#d5d5d5"/><rect x="225.7" y="383.4" width="2.6" height="3.0" fill="#c8c8c8"/><rect x="228.3" y="383.4" width="2.6" height="3.0" fill="#cacaca"/><rect x="230.9" y="383.4" width="2.6" height="3.0" fill="#f0f0f0"/><rect x="233.5" y="383.4" width="2.6" height="3.0" fill="#bfbfbf"/><rect x="236.1" y="383.4" width="2.6" height="3.0" fill="#c7c7c7"/><rect x="238.7" y="383.4" width="2.6" height="3.0" fill="#dddddd"/><rect x="241.3" y="383.4" width="2.6" height="3.0" fill="#e3e3e3"/><rect x="243.9" y="383.4" width="2.6" height="3.0" fill="#bababa"/><rect x="246.5" y="383.4" width="2.6" height="3.0" fill="#c6c6c6"/><rect x="249.1" y="383.4" width="2.6" height="3.0" fill="#d0d0d0"/><rect x="251.7" y="383.4" width="2.6" height="3.0" fill="#c8c8c8"/><rect x="254.3" y="383.4" width="2.6" height="3.0" fill="#d5d5d5"/><rect x="256.9" y="383.4" width="2.6" height="3.0" fill="#cccccc"/><rect x="259.5" y="383.4" width="2.6" height="3.0" fill="#d8d8d8"/><rect x="303.7" y="383.4" width="2.6" height="3.0" fill="#cbcbcb"/><rect x="306.3" y="383.4" width="2.6" height="3.0" fill="#e1e1e1"/><rect x="308.9" y="383.4" width="2.6" height="3.0" fill="#c0c0c0"/><rect x="311.5" y="383.4" width="2.6" height="3.0" fill="#d8d8d8"/><rect x="314.1" y="383.4" width="2.6" height="3.0" fill="#d2d2d2"/><rect x="316.7" y="383.4" width="2.6" height="3.0" fill="#eeeeee"/><rect x="319.3" y="383.4" width="2.6" height="3.0" fill="#d5d5d5"/><rect x="321.9" y="383.4" width="2.6" height="3.0" fill="#b9b9b9"/><rect x="324.5" y="383.4" width="2.6" height="3.0" fill="#cacaca"/><rect x="327.1" y="383.4" width="2.6" height="3.0" fill="#c8c8c8"/><rect x="329.7" y="383.4" width="2.6" height="3.0" fill="#f9f9f9"/><rect x="332.3" y="383.4" width="2.6" height="3.0" fill="#c8c8c8"/><rect x="337.5" y="383.4" width="2.6" height="3.0" fill="#c2c2c2"/><rect x="340.1" y="383.4" width="2.6" height="3.0" fill="#dcdcdc"/><rect x="342.7" y="383.4" width="2.6" height="3.0" fill="#d1d1d1"/><rect x="345.3" y="383.4" width="2.6" height="3.0" fill="#bebebe"/><rect x="347.9" y="383.4" width="2.6" height="3.0" fill="#e2e2e2"/><rect x="98.3" y="386.3" width="2.6" height="3.0" fill="#d8d8d8"/><rect x="100.9" y="386.3" width="2.6" height="3.0" fill="#bdbdbd"/><rect x="103.5" y="386.3" width="2.6" height="3.0" fill="#afafaf"/><rect x="106.1" y="386.3" width="2.6" height="3.0" fill="#cfcfcf"/><rect x="108.7" y="386.3" width="2.6" height="3.0" fill="#d1d1d1"/><rect x="111.3" y="386.3" width="2.6" height="3.0" fill="#c9c9c9"/><rect x="113.9" y="386.3" width="2.6" height="3.0" fill="#a8a8a8"/><rect x="116.5" y="386.3" width="2.6" height="3.0" fill="#a2a2a2"/><rect x="119.1" y="386.3" width="2.6" height="3.0" fill="#bababa"/><rect x="121.7" y="386.3" width="2.6" height="3.0" fill="#dddddd"/><rect x="124.3" y="386.3" width="2.6" height="3.0" fill="#bababa"/><rect x="126.9" y="386.3" width="2.6" height="3.0" fill="#bdbdbd"/><rect x="129.5" y="386.3" width="2.6" height="3.0" fill="#a6a6a6"/><rect x="132.1" y="386.3" width="2.6" height="3.0" fill="#bebebe"/><rect x="134.7" y="386.3" width="2.6" height="3.0" fill="#a0a0a0"/><rect x="137.3" y="386.3" width="2.6" height="3.0" fill="#ababab"/><rect x="139.9" y="386.3" width="2.6" height="3.0" fill="#cccccc"/><rect x="142.5" y="386.3" width="2.6" height="3.0" fill="#b3b3b3"/><rect x="199.7" y="386.3" width="2.6" height="3.0" fill="#cdcdcd"/><rect x="202.3" y="386.3" width="2.6" height="3.0" fill="#a8a8a8"/><rect x="204.9" y="386.3" width="2.6" height="3.0" fill="#ababab"/><rect x="207.5" y="386.3" width="2.6" height="3.0" fill="#b9b9b9"/><rect x="210.1" y="386.3" width="2.6" height="3.0" fill="#dddddd"/><rect x="212.7" y="386.3" width="2.6" height="3.0" fill="#b5b5b5"/><rect x="215.3" y="386.3" width="2.6" height="3.0" fill="#cbcbcb"/><rect x="217.9" y="386.3" width="2.6" height="3.0" fill="#f6f6f6"/><rect x="220.5" y="386.3" width="2.6" height="3.0" fill="#b4b4b4"/><rect x="223.1" y="386.3" width="2.6" height="3.0" fill="#aeaeae"/><rect x="225.7" y="386.3" width="2.6" height="3.0" fill="#ababab"/><rect x="228.3" y="386.3" width="2.6" height="3.0" fill="#b2b2b2"/><rect x="230.9" y="386.3" width="2.6" height="3.0" fill="#dfdfdf"/><rect x="233.5" y="386.3" width="2.6" height="3.0" fill="#a5a5a5"/><rect x="236.1" y="386.3" width="2.6" height="3.0" fill="#a8a8a8"/><rect x="238.7" y="386.3" width="2.6" height="3.0" fill="#bcbcbc"/><rect x="241.3" y="386.3" width="2.6" height="3.0" fill="#eaeaea"/><rect x="243.9" y="386.3" width="2.6" height="3.0" fill="#979797"/><rect x="246.5" y="386.3" width="2.6" height="3.0" fill="#b7b7b7"/><rect x="249.1" y="386.3" width="2.6" height="3.0" fill="#b9b9b9"/><rect x="251.7" y="386.3" width="2.6" height="3.0" fill="#bbbbbb"/><rect x="254.3" y="386.3" width="2.6" height="3.0" fill="#d5d5d5"/><rect x="256.9" y="386.3" width="2.6" height="3.0" fill="#c0c0c0"/><rect x="259.5" y="386.3" width="2.6" height="3.0" fill="#cbcbcb"/><rect x="303.7" y="386.3" width="2.6" height="3.0" fill="#c1c1c1"/><rect x="306.3" y="386.3" width="2.6" height="3.0" fill="#d7d7d7"/><rect x="308.9" y="386.3" width="2.6" height="3.0" fill="#989898"/><rect x="311.5" y="386.3" width="2.6" height="3.0" fill="#bbbbbb"/><rect x="314.1" y="386.3" width="2.6" height="3.0" fill="#d8d8d8"/><rect x="316.7" y="386.3" width="2.6" height="3.0" fill="#e5e5e5"/><rect x="319.3" y="386.3" width="2.6" height="3.0" fill="#b5b5b5"/><rect x="321.9" y="386.3" width="2.6" height="3.0" fill="#a4a4a4"/><rect x="324.5" y="386.3" width="2.6" height="3.0" fill="#a0a0a0"/><rect x="327.1" y="386.3" width="2.6" height="3.0" fill="#b0b0b0"/><rect x="329.7" y="386.3" width="2.6" height="3.0" fill="#eaeaea"/><rect x="332.3" y="386.3" width="2.6" height="3.0" fill="#acacac"/><rect x="334.9" y="386.3" width="2.6" height="3.0" fill="#efefef"/><rect x="337.5" y="386.3" width="2.6" height="3.0" fill="#afafaf"/><rect x="340.1" y="386.3" width="2.6" height="3.0" fill="#bcbcbc"/><rect x="342.7" y="386.3" width="2.6" height="3.0" fill="#b6b6b6"/><rect x="345.3" y="386.3" width="2.6" height="3.0" fill="#a7a7a7"/><rect x="347.9" y="386.3" width="2.6" height="3.0" fill="#d7d7d7"/><rect x="103.5" y="397.1" width="2.6" height="3.0" fill="#d9d9d9"/><rect x="106.1" y="397.1" width="2.6" height="3.0" fill="#cccccc"/><rect x="108.7" y="397.1" width="2.6" height="3.0" fill="#cbcbcb"/><rect x="111.3" y="397.1" width="2.6" height="3.0" fill="#dadada"/><rect x="113.9" y="397.1" width="2.6" height="3.0" fill="#c5c5c5"/><rect x="116.5" y="397.1" width="2.6" height="3.0" fill="#d1d1d1"/><rect x="119.1" y="397.1" width="2.6" height="3.0" fill="#cdcdcd"/><rect x="121.7" y="397.1" width="2.6" height="3.0" fill="#cbcbcb"/><rect x="124.3" y="397.1" width="2.6" height="3.0" fill="#d4d4d4"/><rect x="126.9" y="397.1" width="2.6" height="3.0" fill="#d0d0d0"/><rect x="129.5" y="397.1" width="2.6" height="3.0" fill="#c9c9c9"/><rect x="132.1" y="397.1" width="2.6" height="3.0" fill="#c5c5c5"/><rect x="134.7" y="397.1" width="2.6" height="3.0" fill="#cdcdcd"/><rect x="137.3" y="397.1" width="2.6" height="3.0" fill="#e2e2e2"/><rect x="199.7" y="397.1" width="2.6" height="3.0" fill="#dedede"/><rect x="202.3" y="397.1" width="2.6" height="3.0" fill="#c7c7c7"/><rect x="204.9" y="397.1" width="2.6" height="3.0" fill="#cfcfcf"/><rect x="207.5" y="397.1" width="2.6" height="3.0" fill="#d4d4d4"/><rect x="210.1" y="397.1" width="2.6" height="3.0" fill="#e2e2e2"/><rect x="212.7" y="397.1" width="2.6" height="3.0" fill="#c5c5c5"/><rect x="215.3" y="397.1" width="2.6" height="3.0" fill="#dedede"/><rect x="217.9" y="397.1" width="2.6" height="3.0" fill="#cfcfcf"/><rect x="220.5" y="397.1" width="2.6" height="3.0" fill="#cecece"/><rect x="223.1" y="397.1" width="2.6" height="3.0" fill="#d5d5d5"/><rect x="225.7" y="397.1" width="2.6" height="3.0" fill="#cdcdcd"/><rect x="228.3" y="397.1" width="2.6" height="3.0" fill="#d0d0d0"/><rect x="230.9" y="397.1" width="2.6" height="3.0" fill="#eaeaea"/><rect x="233.5" y="397.1" width="2.6" height="3.0" fill="#c2c2c2"/><rect x="236.1" y="397.1" width="2.6" height="3.0" fill="#d9d9d9"/><rect x="238.7" y="397.1" width="2.6" height="3.0" fill="#e8e8e8"/><rect x="241.3" y="397.1" width="2.6" height="3.0" fill="#dddddd"/><rect x="243.9" y="397.1" width="2.6" height="3.0" fill="#cbcbcb"/><rect x="246.5" y="397.1" width="2.6" height="3.0" fill="#cecece"/><rect x="249.1" y="397.1" width="2.6" height="3.0" fill="#dadada"/><rect x="251.7" y="397.1" width="2.6" height="3.0" fill="#dcdcdc"/><rect x="254.3" y="397.1" width="2.6" height="3.0" fill="#c6c6c6"/><rect x="256.9" y="397.1" width="2.6" height="3.0" fill="#d0d0d0"/><rect x="259.5" y="397.1" width="2.6" height="3.0" fill="#dbdbdb"/><rect x="306.3" y="397.1" width="2.6" height="3.0" fill="#cccccc"/><rect x="308.9" y="397.1" width="2.6" height="3.0" fill="#d4d4d4"/><rect x="311.5" y="397.1" width="2.6" height="3.0" fill="#cbcbcb"/><rect x="314.1" y="397.1" width="2.6" height="3.0" fill="#cacaca"/><rect x="316.7" y="397.1" width="2.6" height="3.0" fill="#f8f8f8"/><rect x="319.3" y="397.1" width="2.6" height="3.0" fill="#d2d2d2"/><rect x="321.9" y="397.1" width="2.6" height="3.0" fill="#cfcfcf"/><rect x="324.5" y="397.1" width="2.6" height="3.0" fill="#d0d0d0"/><rect x="327.1" y="397.1" width="2.6" height="3.0" fill="#d3d3d3"/><rect x="329.7" y="397.1" width="2.6" height="3.0" fill="#f2f2f2"/><rect x="332.3" y="397.1" width="2.6" height="3.0" fill="#d9d9d9"/><rect x="334.9" y="397.1" width="2.6" height="3.0" fill="#ededed"/><rect x="337.5" y="397.1" width="2.6" height="3.0" fill="#cacaca"/><rect x="340.1" y="397.1" width="2.6" height="3.0" fill="#cccccc"/><rect x="342.7" y="397.1" width="2.6" height="3.0" fill="#d1d1d1"/><rect x="103.5" y="400.1" width="2.6" height="3.0" fill="#c5c5c5"/><rect x="106.1" y="400.1" width="2.6" height="3.0" fill="#b3b3b3"/><rect x="108.7" y="400.1" width="2.6" height="3.0" fill="#adadad"/><rect x="111.3" y="400.1" width="2.6" height="3.0" fill="#b7b7b7"/><rect x="113.9" y="400.1" width="2.6" height="3.0" fill="#cbcbcb"/><rect x="116.5" y="400.1" width="2.6" height="3.0" fill="#dbdbdb"/><rect x="119.1" y="400.1" width="2.6" height="3.0" fill="#b6b6b6"/><rect x="121.7" y="400.1" width="2.6" height="3.0" fill="#adadad"/><rect x="124.3" y="400.1" width="2.6" height="3.0" fill="#d3d3d3"/><rect x="126.9" y="400.1" width="2.6" height="3.0" fill="#afafaf"/><rect x="129.5" y="400.1" width="2.6" height="3.0" fill="#bcbcbc"/><rect x="132.1" y="400.1" width="2.6" height="3.0" fill="#bababa"/><rect x="134.7" y="400.1" width="2.6" height="3.0" fill="#a6a6a6"/><rect x="137.3" y="400.1" width="2.6" height="3.0" fill="#c7c7c7"/><rect x="199.7" y="400.1" width="2.6" height="3.0" fill="#c9c9c9"/><rect x="202.3" y="400.1" width="2.6" height="3.0" fill="#a2a2a2"/><rect x="204.9" y="400.1" width="2.6" height="3.0" fill="#a5a5a5"/><rect x="207.5" y="400.1" width="2.6" height="3.0" fill="#b4b4b4"/><rect x="210.1" y="400.1" width="2.6" height="3.0" fill="#dddddd"/><rect x="212.7" y="400.1" width="2.6" height="3.0" fill="#b1b1b1"/><rect x="215.3" y="400.1" width="2.6" height="3.0" fill="#c9c9c9"/><rect x="217.9" y="400.1" width="2.6" height="3.0" fill="#f4f4f4"/><rect x="220.5" y="400.1" width="2.6" height="3.0" fill="#b0b0b0"/><rect x="223.1" y="400.1" width="2.6" height="3.0" fill="#aeaeae"/><rect x="225.7" y="400.1" width="2.6" height="3.0" fill="#a6a6a6"/><rect x="228.3" y="400.1" width="2.6" height="3.0" fill="#acacac"/><rect x="230.9" y="400.1" width="2.6" height="3.0" fill="#f0f0f0"/><rect x="233.5" y="400.1" width="2.6" height="3.0" fill="#c9c9c9"/><rect x="236.1" y="400.1" width="2.6" height="3.0" fill="#d1d1d1"/><rect x="238.7" y="400.1" width="2.6" height="3.0" fill="#cdcdcd"/><rect x="241.3" y="400.1" width="2.6" height="3.0" fill="#d0d0d0"/><rect x="243.9" y="400.1" width="2.6" height="3.0" fill="#bdbdbd"/><rect x="246.5" y="400.1" width="2.6" height="3.0" fill="#b8b8b8"/><rect x="249.1" y="400.1" width="2.6" height="3.0" fill="#d9d9d9"/><rect x="251.7" y="400.1" width="2.6" height="3.0" fill="#c7c7c7"/><rect x="254.3" y="400.1" width="2.6" height="3.0" fill="#b2b2b2"/><rect x="256.9" y="400.1" width="2.6" height="3.0" fill="#acacac"/><rect x="259.5" y="400.1" width="2.6" height="3.0" fill="#c2c2c2"/><rect x="306.3" y="400.1" width="2.6" height="3.0" fill="#acacac"/><rect x="308.9" y="400.1" width="2.6" height="3.0" fill="#bcbcbc"/><rect x="311.5" y="400.1" width="2.6" height="3.0" fill="#a8a8a8"/><rect x="314.1" y="400.1" width="2.6" height="3.0" fill="#b9b9b9"/><rect x="316.7" y="400.1" width="2.6" height="3.0" fill="#eaeaea"/><rect x="319.3" y="400.1" width="2.6" height="3.0" fill="#aeaeae"/><rect x="321.9" y="400.1" width="2.6" height="3.0" fill="#a6a6a6"/><rect x="324.5" y="400.1" width="2.6" height="3.0" fill="#979797"/><rect x="327.1" y="400.1" width="2.6" height="3.0" fill="#b4b4b4"/><rect x="329.7" y="400.1" width="2.6" height="3.0" fill="#e5e5e5"/><rect x="332.3" y="400.1" width="2.6" height="3.0" fill="#b4b4b4"/><rect x="334.9" y="400.1" width="2.6" height="3.0" fill="#d7d7d7"/><rect x="337.5" y="400.1" width="2.6" height="3.0" fill="#b9b9b9"/><rect x="340.1" y="400.1" width="2.6" height="3.0" fill="#b1b1b1"/><rect x="342.7" y="400.1" width="2.6" height="3.0" fill="#b5b5b5"/><rect x="345.3" y="400.1" width="2.6" height="3.0" fill="#ececec"/><rect x="64.5" y="410.8" width="2.6" height="2.8" fill="#ababab"/><rect x="67.1" y="410.8" width="2.6" height="2.8" fill="#dcdcdc"/><rect x="69.7" y="410.8" width="2.6" height="2.8" fill="#cbcbcb"/><rect x="72.3" y="410.8" width="2.6" height="2.8" fill="#d9d9d9"/><rect x="74.9" y="410.8" width="2.6" height="2.8" fill="#cbcbcb"/><rect x="77.5" y="410.8" width="2.6" height="2.8" fill="#d1d1d1"/><rect x="80.1" y="410.8" width="2.6" height="2.8" fill="#dfdfdf"/><rect x="82.7" y="410.8" width="2.6" height="2.8" fill="#dadada"/><rect x="85.3" y="410.8" width="2.6" height="2.8" fill="#d4d4d4"/><rect x="87.9" y="410.8" width="2.6" height="2.8" fill="#dadada"/><rect x="90.5" y="410.8" width="2.6" height="2.8" fill="#c6c6c6"/><rect x="93.1" y="410.8" width="2.6" height="2.8" fill="#f7f7f7"/><rect x="95.7" y="410.8" width="2.6" height="2.8" fill="#c4c4c4"/><rect x="98.3" y="410.8" width="2.6" height="2.8" fill="#d5d5d5"/><rect x="100.9" y="410.8" width="2.6" height="2.8" fill="#cdcdcd"/><rect x="103.5" y="410.8" width="2.6" height="2.8" fill="#e6e6e6"/><rect x="106.1" y="410.8" width="2.6" height="2.8" fill="#b7b7b7"/><rect x="111.3" y="410.8" width="2.6" height="2.8" fill="#d1d1d1"/><rect x="113.9" y="410.8" width="2.6" height="2.8" fill="#c5c5c5"/><rect x="116.5" y="410.8" width="2.6" height="2.8" fill="#c5c5c5"/><rect x="119.1" y="410.8" width="2.6" height="2.8" fill="#bdbdbd"/><rect x="121.7" y="410.8" width="2.6" height="2.8" fill="#a8a8a8"/><rect x="124.3" y="410.8" width="2.6" height="2.8" fill="#bcbcbc"/><rect x="129.5" y="410.8" width="2.6" height="2.8" fill="#adadad"/><rect x="132.1" y="410.8" width="2.6" height="2.8" fill="#dbdbdb"/><rect x="134.7" y="410.8" width="2.6" height="2.8" fill="#d0d0d0"/><rect x="137.3" y="410.8" width="2.6" height="2.8" fill="#d3d3d3"/><rect x="139.9" y="410.8" width="2.6" height="2.8" fill="#d2d2d2"/><rect x="142.5" y="410.8" width="2.6" height="2.8" fill="#d0d0d0"/><rect x="145.1" y="410.8" width="2.6" height="2.8" fill="#d8d8d8"/><rect x="147.7" y="410.8" width="2.6" height="2.8" fill="#eeeeee"/><rect x="150.3" y="410.8" width="2.6" height="2.8" fill="#cccccc"/><rect x="152.9" y="410.8" width="2.6" height="2.8" fill="#c5c5c5"/><rect x="155.5" y="410.8" width="2.6" height="2.8" fill="#d0d0d0"/><rect x="158.1" y="410.8" width="2.6" height="2.8" fill="#b8b8b8"/><rect x="160.7" y="410.8" width="2.6" height="2.8" fill="#d6d6d6"/><rect x="163.3" y="410.8" width="2.6" height="2.8" fill="#cfcfcf"/><rect x="165.9" y="410.8" width="2.6" height="2.8" fill="#ebebeb"/><rect x="168.5" y="410.8" width="2.6" height="2.8" fill="#d0d0d0"/><rect x="171.1" y="410.8" width="2.6" height="2.8" fill="#9e9e9e"/><rect x="173.7" y="410.8" width="2.6" height="2.8" fill="#c2c2c2"/><rect x="176.3" y="410.8" width="2.6" height="2.8" fill="#c3c3c3"/><rect x="199.7" y="410.8" width="2.6" height="2.8" fill="#cdcdcd"/><rect x="202.3" y="410.8" width="2.6" height="2.8" fill="#c2c2c2"/><rect x="204.9" y="410.8" width="2.6" height="2.8" fill="#b7b7b7"/><rect x="207.5" y="410.8" width="2.6" height="2.8" fill="#cdcdcd"/><rect x="210.1" y="410.8" width="2.6" height="2.8" fill="#cbcbcb"/><rect x="212.7" y="410.8" width="2.6" height="2.8" fill="#cfcfcf"/><rect x="215.3" y="410.8" width="2.6" height="2.8" fill="#aaaaaa"/><rect x="217.9" y="410.8" width="2.6" height="2.8" fill="#eeeeee"/><rect x="220.5" y="410.8" width="2.6" height="2.8" fill="#bcbcbc"/><rect x="223.1" y="410.8" width="2.6" height="2.8" fill="#a5a5a5"/><rect x="225.7" y="410.8" width="2.6" height="2.8" fill="#bdbdbd"/><rect x="228.3" y="410.8" width="2.6" height="2.8" fill="#ebebeb"/><rect x="230.9" y="410.8" width="2.6" height="2.8" fill="#9e9e9e"/><rect x="233.5" y="410.8" width="2.6" height="2.8" fill="#aeaeae"/><rect x="236.1" y="410.8" width="2.6" height="2.8" fill="#acacac"/><rect x="238.7" y="410.8" width="2.6" height="2.8" fill="#f0f0f0"/><rect x="241.3" y="410.8" width="2.6" height="2.8" fill="#a0a0a0"/><rect x="243.9" y="410.8" width="2.6" height="2.8" fill="#b3b3b3"/><rect x="246.5" y="410.8" width="2.6" height="2.8" fill="#bcbcbc"/><rect x="249.1" y="410.8" width="2.6" height="2.8" fill="#eaeaea"/><rect x="251.7" y="410.8" width="2.6" height="2.8" fill="#bebebe"/><rect x="256.9" y="410.8" width="2.6" height="2.8" fill="#a2a2a2"/><rect x="303.7" y="410.8" width="2.6" height="2.8" fill="#c2c2c2"/><rect x="306.3" y="410.8" width="2.6" height="2.8" fill="#d9d9d9"/><rect x="308.9" y="410.8" width="2.6" height="2.8" fill="#b3b3b3"/><rect x="311.5" y="410.8" width="2.6" height="2.8" fill="#d4d4d4"/><rect x="314.1" y="410.8" width="2.6" height="2.8" fill="#c8c8c8"/><rect x="316.7" y="410.8" width="2.6" height="2.8" fill="#ececec"/><rect x="319.3" y="410.8" width="2.6" height="2.8" fill="#cbcbcb"/><rect x="321.9" y="410.8" width="2.6" height="2.8" fill="#a1a1a1"/><rect x="324.5" y="410.8" width="2.6" height="2.8" fill="#bebebe"/><rect x="327.1" y="410.8" width="2.6" height="2.8" fill="#b9b9b9"/><rect x="329.7" y="410.8" width="2.6" height="2.8" fill="#f9f9f9"/><rect x="332.3" y="410.8" width="2.6" height="2.8" fill="#bebebe"/><rect x="337.5" y="410.8" width="2.6" height="2.8" fill="#b8b8b8"/><rect x="340.1" y="410.8" width="2.6" height="2.8" fill="#e4e4e4"/><rect x="342.7" y="410.8" width="2.6" height="2.8" fill="#bfbfbf"/><rect x="345.3" y="410.8" width="2.6" height="2.8" fill="#bbbbbb"/><rect x="347.9" y="410.8" width="2.6" height="2.8" fill="#dedede"/><rect x="64.5" y="413.6" width="2.6" height="2.8" fill="#c3c3c3"/><rect x="67.1" y="413.6" width="2.6" height="2.8" fill="#ababab"/><rect x="69.7" y="413.6" width="2.6" height="2.8" fill="#8e8e8e"/><rect x="72.3" y="413.6" width="2.6" height="2.8" fill="#c5c5c5"/><rect x="74.9" y="413.6" width="2.6" height="2.8" fill="#cccccc"/><rect x="77.5" y="413.6" width="2.6" height="2.8" fill="#a9a9a9"/><rect x="80.1" y="413.6" width="2.6" height="2.8" fill="#b7b7b7"/><rect x="82.7" y="413.6" width="2.6" height="2.8" fill="#9d9d9d"/><rect x="85.3" y="413.6" width="2.6" height="2.8" fill="#bebebe"/><rect x="87.9" y="413.6" width="2.6" height="2.8" fill="#c2c2c2"/><rect x="90.5" y="413.6" width="2.6" height="2.8" fill="#9e9e9e"/><rect x="93.1" y="413.6" width="2.6" height="2.8" fill="#eeeeee"/><rect x="95.7" y="413.6" width="2.6" height="2.8" fill="#c1c1c1"/><rect x="98.3" y="413.6" width="2.6" height="2.8" fill="#d4d4d4"/><rect x="100.9" y="413.6" width="2.6" height="2.8" fill="#b1b1b1"/><rect x="103.5" y="413.6" width="2.6" height="2.8" fill="#d1d1d1"/><rect x="106.1" y="413.6" width="2.6" height="2.8" fill="#b8b8b8"/><rect x="108.7" y="413.6" width="2.6" height="2.8" fill="#dcdcdc"/><rect x="111.3" y="413.6" width="2.6" height="2.8" fill="#cbcbcb"/><rect x="113.9" y="413.6" width="2.6" height="2.8" fill="#bebebe"/><rect x="116.5" y="413.6" width="2.6" height="2.8" fill="#b3b3b3"/><rect x="119.1" y="413.6" width="2.6" height="2.8" fill="#b9b9b9"/><rect x="121.7" y="413.6" width="2.6" height="2.8" fill="#b5b5b5"/><rect x="124.3" y="413.6" width="2.6" height="2.8" fill="#b1b1b1"/><rect x="129.5" y="413.6" width="2.6" height="2.8" fill="#c2c2c2"/><rect x="132.1" y="413.6" width="2.6" height="2.8" fill="#a2a2a2"/><rect x="134.7" y="413.6" width="2.6" height="2.8" fill="#a3a3a3"/><rect x="137.3" y="413.6" width="2.6" height="2.8" fill="#cbcbcb"/><rect x="139.9" y="413.6" width="2.6" height="2.8" fill="#acacac"/><rect x="142.5" y="413.6" width="2.6" height="2.8" fill="#a3a3a3"/><rect x="145.1" y="413.6" width="2.6" height="2.8" fill="#b9b9b9"/><rect x="147.7" y="413.6" width="2.6" height="2.8" fill="#d8d8d8"/><rect x="150.3" y="413.6" width="2.6" height="2.8" fill="#c6c6c6"/><rect x="152.9" y="413.6" width="2.6" height="2.8" fill="#c4c4c4"/><rect x="155.5" y="413.6" width="2.6" height="2.8" fill="#cecece"/><rect x="158.1" y="413.6" width="2.6" height="2.8" fill="#9a9a9a"/><rect x="160.7" y="413.6" width="2.6" height="2.8" fill="#b8b8b8"/><rect x="163.3" y="413.6" width="2.6" height="2.8" fill="#dddddd"/><rect x="165.9" y="413.6" width="2.6" height="2.8" fill="#e7e7e7"/><rect x="168.5" y="413.6" width="2.6" height="2.8" fill="#bbbbbb"/><rect x="171.1" y="413.6" width="2.6" height="2.8" fill="#adadad"/><rect x="173.7" y="413.6" width="2.6" height="2.8" fill="#a8a8a8"/><rect x="176.3" y="413.6" width="2.6" height="2.8" fill="#bdbdbd"/><rect x="178.9" y="413.6" width="2.6" height="2.8" fill="#eeeeee"/><rect x="199.7" y="413.6" width="2.6" height="2.8" fill="#cacaca"/><rect x="202.3" y="413.6" width="2.6" height="2.8" fill="#bcbcbc"/><rect x="204.9" y="413.6" width="2.6" height="2.8" fill="#b3b3b3"/><rect x="207.5" y="413.6" width="2.6" height="2.8" fill="#c9c9c9"/><rect x="210.1" y="413.6" width="2.6" height="2.8" fill="#cacaca"/><rect x="212.7" y="413.6" width="2.6" height="2.8" fill="#c9c9c9"/><rect x="215.3" y="413.6" width="2.6" height="2.8" fill="#b0b0b0"/><rect x="217.9" y="413.6" width="2.6" height="2.8" fill="#e4e4e4"/><rect x="220.5" y="413.6" width="2.6" height="2.8" fill="#b2b2b2"/><rect x="223.1" y="413.6" width="2.6" height="2.8" fill="#b4b4b4"/><rect x="225.7" y="413.6" width="2.6" height="2.8" fill="#a2a2a2"/><rect x="228.3" y="413.6" width="2.6" height="2.8" fill="#e5e5e5"/><rect x="230.9" y="413.6" width="2.6" height="2.8" fill="#a3a3a3"/><rect x="233.5" y="413.6" width="2.6" height="2.8" fill="#a1a1a1"/><rect x="236.1" y="413.6" width="2.6" height="2.8" fill="#a6a6a6"/><rect x="238.7" y="413.6" width="2.6" height="2.8" fill="#ededed"/><rect x="241.3" y="413.6" width="2.6" height="2.8" fill="#b0b0b0"/><rect x="243.9" y="413.6" width="2.6" height="2.8" fill="#929292"/><rect x="246.5" y="413.6" width="2.6" height="2.8" fill="#b7b7b7"/><rect x="249.1" y="413.6" width="2.6" height="2.8" fill="#e8e8e8"/><rect x="251.7" y="413.6" width="2.6" height="2.8" fill="#b9b9b9"/><rect x="254.3" y="413.6" width="2.6" height="2.8" fill="#c4c4c4"/><rect x="256.9" y="413.6" width="2.6" height="2.8" fill="#c1c1c1"/><rect x="259.5" y="413.6" width="2.6" height="2.8" fill="#d6d6d6"/><rect x="303.7" y="413.6" width="2.6" height="2.8" fill="#c0c0c0"/><rect x="306.3" y="413.6" width="2.6" height="2.8" fill="#d8d8d8"/><rect x="308.9" y="413.6" width="2.6" height="2.8" fill="#969696"/><rect x="311.5" y="413.6" width="2.6" height="2.8" fill="#b5b5b5"/><rect x="314.1" y="413.6" width="2.6" height="2.8" fill="#dbdbdb"/><rect x="316.7" y="413.6" width="2.6" height="2.8" fill="#e3e3e3"/><rect x="319.3" y="413.6" width="2.6" height="2.8" fill="#b4b4b4"/><rect x="321.9" y="413.6" width="2.6" height="2.8" fill="#aeaeae"/><rect x="324.5" y="413.6" width="2.6" height="2.8" fill="#9f9f9f"/><rect x="327.1" y="413.6" width="2.6" height="2.8" fill="#b3b3b3"/><rect x="329.7" y="413.6" width="2.6" height="2.8" fill="#e8e8e8"/><rect x="332.3" y="413.6" width="2.6" height="2.8" fill="#aaaaaa"/><rect x="334.9" y="413.6" width="2.6" height="2.8" fill="#ededed"/><rect x="337.5" y="413.6" width="2.6" height="2.8" fill="#adadad"/><rect x="340.1" y="413.6" width="2.6" height="2.8" fill="#cbcbcb"/><rect x="342.7" y="413.6" width="2.6" height="2.8" fill="#c4c4c4"/><rect x="345.3" y="413.6" width="2.6" height="2.8" fill="#b5b5b5"/><rect x="347.9" y="413.6" width="2.6" height="2.8" fill="#d8d8d8"/><rect x="90.5" y="416.5" width="2.6" height="2.8" fill="#d4d4d4"/><rect x="129.5" y="416.5" width="2.6" height="2.8" fill="#f9f9f9"/><rect x="150.3" y="416.5" width="2.6" height="2.8" fill="#eaeaea"/><rect x="111.3" y="419.3" width="2.6" height="2.8" fill="#e5e5e5"/><rect x="113.9" y="419.3" width="2.6" height="2.8" fill="#cacaca"/><rect x="116.5" y="419.3" width="2.6" height="2.8" fill="#f5f5f5"/><rect x="119.1" y="419.3" width="2.6" height="2.8" fill="#bbbbbb"/><rect x="121.7" y="419.3" width="2.6" height="2.8" fill="#bfbfbf"/><rect x="124.3" y="419.3" width="2.6" height="2.8" fill="#989898"/><rect x="126.9" y="419.3" width="2.6" height="2.8" fill="#b3b3b3"/><rect x="129.5" y="419.3" width="2.6" height="2.8" fill="#c9c9c9"/><rect x="111.3" y="422.1" width="2.6" height="2.8" fill="#e8e8e8"/><rect x="113.9" y="422.1" width="2.6" height="2.8" fill="#c6c6c6"/><rect x="116.5" y="422.1" width="2.6" height="2.8" fill="#e6e6e6"/><rect x="119.1" y="422.1" width="2.6" height="2.8" fill="#bababa"/><rect x="121.7" y="422.1" width="2.6" height="2.8" fill="#cbcbcb"/><rect x="124.3" y="422.1" width="2.6" height="2.8" fill="#b9b9b9"/><rect x="126.9" y="422.1" width="2.6" height="2.8" fill="#bfbfbf"/><rect x="129.5" y="422.1" width="2.6" height="2.8" fill="#cacaca"/><rect x="129.5" y="424.9" width="2.6" height="2.8" fill="#f1f1f1"/><rect x="95.7" y="432.0" width="2.6" height="3.0" fill="#e2e2e2"/><rect x="98.3" y="432.0" width="2.6" height="3.0" fill="#d3d3d3"/><rect x="100.9" y="432.0" width="2.6" height="3.0" fill="#bababa"/><rect x="103.5" y="432.0" width="2.6" height="3.0" fill="#dddddd"/><rect x="106.1" y="432.0" width="2.6" height="3.0" fill="#cecece"/><rect x="108.7" y="432.0" width="2.6" height="3.0" fill="#d2d2d2"/><rect x="111.3" y="432.0" width="2.6" height="3.0" fill="#cbcbcb"/><rect x="113.9" y="432.0" width="2.6" height="3.0" fill="#dedede"/><rect x="116.5" y="432.0" width="2.6" height="3.0" fill="#e3e3e3"/><rect x="119.1" y="432.0" width="2.6" height="3.0" fill="#e4e4e4"/><rect x="121.7" y="432.0" width="2.6" height="3.0" fill="#dedede"/><rect x="124.3" y="432.0" width="2.6" height="3.0" fill="#e7e7e7"/><rect x="126.9" y="432.0" width="2.6" height="3.0" fill="#eeeeee"/><rect x="129.5" y="432.0" width="2.6" height="3.0" fill="#eaeaea"/><rect x="132.1" y="432.0" width="2.6" height="3.0" fill="#f0f0f0"/><rect x="134.7" y="432.0" width="2.6" height="3.0" fill="#e7e7e7"/><rect x="137.3" y="432.0" width="2.6" height="3.0" fill="#dbdbdb"/><rect x="139.9" y="432.0" width="2.6" height="3.0" fill="#e8e8e8"/><rect x="142.5" y="432.0" width="2.6" height="3.0" fill="#f3f3f3"/><rect x="145.1" y="432.0" width="2.6" height="3.0" fill="#f3f3f3"/><rect x="147.7" y="432.0" width="2.6" height="3.0" fill="#f1f1f1"/><rect x="199.7" y="432.0" width="2.6" height="3.0" fill="#dedede"/><rect x="202.3" y="432.0" width="2.6" height="3.0" fill="#d0d0d0"/><rect x="204.9" y="432.0" width="2.6" height="3.0" fill="#d6d6d6"/><rect x="207.5" y="432.0" width="2.6" height="3.0" fill="#cdcdcd"/><rect x="210.1" y="432.0" width="2.6" height="3.0" fill="#f4f4f4"/><rect x="212.7" y="432.0" width="2.6" height="3.0" fill="#cfcfcf"/><rect x="215.3" y="432.0" width="2.6" height="3.0" fill="#f6f6f6"/><rect x="217.9" y="432.0" width="2.6" height="3.0" fill="#cdcdcd"/><rect x="220.5" y="432.0" width="2.6" height="3.0" fill="#f3f3f3"/><rect x="223.1" y="432.0" width="2.6" height="3.0" fill="#c2c2c2"/><rect x="225.7" y="432.0" width="2.6" height="3.0" fill="#d5d5d5"/><rect x="228.3" y="432.0" width="2.6" height="3.0" fill="#d9d9d9"/><rect x="230.9" y="432.0" width="2.6" height="3.0" fill="#dadada"/><rect x="233.5" y="432.0" width="2.6" height="3.0" fill="#d4d4d4"/><rect x="236.1" y="432.0" width="2.6" height="3.0" fill="#c9c9c9"/><rect x="238.7" y="432.0" width="2.6" height="3.0" fill="#dddddd"/><rect x="241.3" y="432.0" width="2.6" height="3.0" fill="#f6f6f6"/><rect x="243.9" y="432.0" width="2.6" height="3.0" fill="#c9c9c9"/><rect x="246.5" y="432.0" width="2.6" height="3.0" fill="#cfcfcf"/><rect x="249.1" y="432.0" width="2.6" height="3.0" fill="#f5f5f5"/><rect x="251.7" y="432.0" width="2.6" height="3.0" fill="#cdcdcd"/><rect x="254.3" y="432.0" width="2.6" height="3.0" fill="#d8d8d8"/><rect x="256.9" y="432.0" width="2.6" height="3.0" fill="#c3c3c3"/><rect x="259.5" y="432.0" width="2.6" height="3.0" fill="#e4e4e4"/><rect x="303.7" y="432.0" width="2.6" height="3.0" fill="#dadada"/><rect x="306.3" y="432.0" width="2.6" height="3.0" fill="#e5e5e5"/><rect x="308.9" y="432.0" width="2.6" height="3.0" fill="#c0c0c0"/><rect x="311.5" y="432.0" width="2.6" height="3.0" fill="#d8d8d8"/><rect x="314.1" y="432.0" width="2.6" height="3.0" fill="#d7d7d7"/><rect x="316.7" y="432.0" width="2.6" height="3.0" fill="#eeeeee"/><rect x="319.3" y="432.0" width="2.6" height="3.0" fill="#dadada"/><rect x="321.9" y="432.0" width="2.6" height="3.0" fill="#cbcbcb"/><rect x="324.5" y="432.0" width="2.6" height="3.0" fill="#d3d3d3"/><rect x="327.1" y="432.0" width="2.6" height="3.0" fill="#cfcfcf"/><rect x="329.7" y="432.0" width="2.6" height="3.0" fill="#f7f7f7"/><rect x="332.3" y="432.0" width="2.6" height="3.0" fill="#d0d0d0"/><rect x="337.5" y="432.0" width="2.6" height="3.0" fill="#c8c8c8"/><rect x="340.1" y="432.0" width="2.6" height="3.0" fill="#d6d6d6"/><rect x="342.7" y="432.0" width="2.6" height="3.0" fill="#e1e1e1"/><rect x="345.3" y="432.0" width="2.6" height="3.0" fill="#c4c4c4"/><rect x="95.7" y="435.0" width="2.6" height="3.0" fill="#b1b1b1"/><rect x="98.3" y="435.0" width="2.6" height="3.0" fill="#a7a7a7"/><rect x="100.9" y="435.0" width="2.6" height="3.0" fill="#aeaeae"/><rect x="103.5" y="435.0" width="2.6" height="3.0" fill="#d0d0d0"/><rect x="106.1" y="435.0" width="2.6" height="3.0" fill="#9b9b9b"/><rect x="108.7" y="435.0" width="2.6" height="3.0" fill="#adadad"/><rect x="111.3" y="435.0" width="2.6" height="3.0" fill="#c2c2c2"/><rect x="113.9" y="435.0" width="2.6" height="3.0" fill="#c5c5c5"/><rect x="116.5" y="435.0" width="2.6" height="3.0" fill="#cfcfcf"/><rect x="119.1" y="435.0" width="2.6" height="3.0" fill="#bebebe"/><rect x="121.7" y="435.0" width="2.6" height="3.0" fill="#aaaaaa"/><rect x="124.3" y="435.0" width="2.6" height="3.0" fill="#9a9a9a"/><rect x="126.9" y="435.0" width="2.6" height="3.0" fill="#b2b2b2"/><rect x="129.5" y="435.0" width="2.6" height="3.0" fill="#c5c5c5"/><rect x="132.1" y="435.0" width="2.6" height="3.0" fill="#9b9b9b"/><rect x="134.7" y="435.0" width="2.6" height="3.0" fill="#bdbdbd"/><rect x="137.3" y="435.0" width="2.6" height="3.0" fill="#989898"/><rect x="139.9" y="435.0" width="2.6" height="3.0" fill="#adadad"/><rect x="142.5" y="435.0" width="2.6" height="3.0" fill="#a8a8a8"/><rect x="145.1" y="435.0" width="2.6" height="3.0" fill="#afafaf"/><rect x="147.7" y="435.0" width="2.6" height="3.0" fill="#e1e1e1"/><rect x="199.7" y="435.0" width="2.6" height="3.0" fill="#c6c6c6"/><rect x="202.3" y="435.0" width="2.6" height="3.0" fill="#bdbdbd"/><rect x="204.9" y="435.0" width="2.6" height="3.0" fill="#b8b8b8"/><rect x="207.5" y="435.0" width="2.6" height="3.0" fill="#dddddd"/><rect x="210.1" y="435.0" width="2.6" height="3.0" fill="#f0f0f0"/><rect x="212.7" y="435.0" width="2.6" height="3.0" fill="#bfbfbf"/><rect x="215.3" y="435.0" width="2.6" height="3.0" fill="#bcbcbc"/><rect x="217.9" y="435.0" width="2.6" height="3.0" fill="#adadad"/><rect x="220.5" y="435.0" width="2.6" height="3.0" fill="#eaeaea"/><rect x="223.1" y="435.0" width="2.6" height="3.0" fill="#a4a4a4"/><rect x="225.7" y="435.0" width="2.6" height="3.0" fill="#b4b4b4"/><rect x="228.3" y="435.0" width="2.6" height="3.0" fill="#b4b4b4"/><rect x="230.9" y="435.0" width="2.6" height="3.0" fill="#bbbbbb"/><rect x="233.5" y="435.0" width="2.6" height="3.0" fill="#c2c2c2"/><rect x="236.1" y="435.0" width="2.6" height="3.0" fill="#b7b7b7"/><rect x="238.7" y="435.0" width="2.6" height="3.0" fill="#e3e3e3"/><rect x="241.3" y="435.0" width="2.6" height="3.0" fill="#c9c9c9"/><rect x="243.9" y="435.0" width="2.6" height="3.0" fill="#a7a7a7"/><rect x="246.5" y="435.0" width="2.6" height="3.0" fill="#c0c0c0"/><rect x="249.1" y="435.0" width="2.6" height="3.0" fill="#ebebeb"/><rect x="251.7" y="435.0" width="2.6" height="3.0" fill="#b7b7b7"/><rect x="254.3" y="435.0" width="2.6" height="3.0" fill="#d5d5d5"/><rect x="256.9" y="435.0" width="2.6" height="3.0" fill="#c2c2c2"/><rect x="259.5" y="435.0" width="2.6" height="3.0" fill="#c6c6c6"/><rect x="303.7" y="435.0" width="2.6" height="3.0" fill="#d7d7d7"/><rect x="306.3" y="435.0" width="2.6" height="3.0" fill="#cfcfcf"/><rect x="308.9" y="435.0" width="2.6" height="3.0" fill="#939393"/><rect x="311.5" y="435.0" width="2.6" height="3.0" fill="#cccccc"/><rect x="314.1" y="435.0" width="2.6" height="3.0" fill="#d7d7d7"/><rect x="316.7" y="435.0" width="2.6" height="3.0" fill="#f0f0f0"/><rect x="319.3" y="435.0" width="2.6" height="3.0" fill="#bababa"/><rect x="321.9" y="435.0" width="2.6" height="3.0" fill="#9d9d9d"/><rect x="324.5" y="435.0" width="2.6" height="3.0" fill="#999999"/><rect x="327.1" y="435.0" width="2.6" height="3.0" fill="#b0b0b0"/><rect x="329.7" y="435.0" width="2.6" height="3.0" fill="#f1f1f1"/><rect x="332.3" y="435.0" width="2.6" height="3.0" fill="#b7b7b7"/><rect x="334.9" y="435.0" width="2.6" height="3.0" fill="#f5f5f5"/><rect x="337.5" y="435.0" width="2.6" height="3.0" fill="#b6b6b6"/><rect x="340.1" y="435.0" width="2.6" height="3.0" fill="#cfcfcf"/><rect x="342.7" y="435.0" width="2.6" height="3.0" fill="#b3b3b3"/><rect x="345.3" y="435.0" width="2.6" height="3.0" fill="#b9b9b9"/><rect x="347.9" y="435.0" width="2.6" height="3.0" fill="#f9f9f9"/><rect x="95.7" y="437.9" width="2.6" height="3.0" fill="#f9f9f9"/><rect x="98.3" y="437.9" width="2.6" height="3.0" fill="#f9f9f9"/><rect x="100.9" y="437.9" width="2.6" height="3.0" fill="#f6f6f6"/><rect x="103.5" y="437.9" width="2.6" height="3.0" fill="#f0f0f0"/><rect x="106.1" y="437.9" width="2.6" height="3.0" fill="#f7f7f7"/><rect x="111.3" y="437.9" width="2.6" height="3.0" fill="#f3f3f3"/><rect x="119.1" y="437.9" width="2.6" height="3.0" fill="#fafafa"/><rect x="121.7" y="437.9" width="2.6" height="3.0" fill="#f3f3f3"/><rect x="124.3" y="437.9" width="2.6" height="3.0" fill="#f3f3f3"/><rect x="132.1" y="437.9" width="2.6" height="3.0" fill="#f0f0f0"/><rect x="134.7" y="437.9" width="2.6" height="3.0" fill="#dddddd"/><rect x="137.3" y="437.9" width="2.6" height="3.0" fill="#f6f6f6"/><rect x="139.9" y="437.9" width="2.6" height="3.0" fill="#f3f3f3"/><rect x="142.5" y="437.9" width="2.6" height="3.0" fill="#f6f6f6"/><rect x="145.1" y="437.9" width="2.6" height="3.0" fill="#f5f5f5"/><rect x="199.7" y="437.9" width="2.6" height="3.0" fill="#f9f9f9"/><rect x="202.3" y="437.9" width="2.6" height="3.0" fill="#ececec"/><rect x="207.5" y="437.9" width="2.6" height="3.0" fill="#f1f1f1"/><rect x="210.1" y="437.9" width="2.6" height="3.0" fill="#f9f9f9"/><rect x="212.7" y="437.9" width="2.6" height="3.0" fill="#eeeeee"/><rect x="215.3" y="437.9" width="2.6" height="3.0" fill="#f6f6f6"/><rect x="220.5" y="437.9" width="2.6" height="3.0" fill="#f8f8f8"/><rect x="223.1" y="437.9" width="2.6" height="3.0" fill="#f0f0f0"/><rect x="225.7" y="437.9" width="2.6" height="3.0" fill="#f6f6f6"/><rect x="230.9" y="437.9" width="2.6" height="3.0" fill="#f9f9f9"/><rect x="233.5" y="437.9" width="2.6" height="3.0" fill="#f5f5f5"/><rect x="236.1" y="437.9" width="2.6" height="3.0" fill="#f5f5f5"/><rect x="238.7" y="437.9" width="2.6" height="3.0" fill="#f9f9f9"/><rect x="246.5" y="437.9" width="2.6" height="3.0" fill="#efefef"/><rect x="249.1" y="437.9" width="2.6" height="3.0" fill="#f4f4f4"/><rect x="256.9" y="437.9" width="2.6" height="3.0" fill="#ededed"/><rect x="303.7" y="437.9" width="2.6" height="3.0" fill="#f4f4f4"/><rect x="306.3" y="437.9" width="2.6" height="3.0" fill="#f4f4f4"/><rect x="308.9" y="437.9" width="2.6" height="3.0" fill="#f3f3f3"/><rect x="311.5" y="437.9" width="2.6" height="3.0" fill="#f1f1f1"/><rect x="314.1" y="437.9" width="2.6" height="3.0" fill="#f3f3f3"/><rect x="316.7" y="437.9" width="2.6" height="3.0" fill="#f3f3f3"/><rect x="319.3" y="437.9" width="2.6" height="3.0" fill="#efefef"/><rect x="321.9" y="437.9" width="2.6" height="3.0" fill="#f3f3f3"/><rect x="327.1" y="437.9" width="2.6" height="3.0" fill="#f3f3f3"/><rect x="329.7" y="437.9" width="2.6" height="3.0" fill="#f6f6f6"/><rect x="332.3" y="437.9" width="2.6" height="3.0" fill="#ececec"/><rect x="334.9" y="437.9" width="2.6" height="3.0" fill="#f9f9f9"/><rect x="337.5" y="437.9" width="2.6" height="3.0" fill="#ececec"/><rect x="340.1" y="437.9" width="2.6" height="3.0" fill="#eeeeee"/><rect x="342.7" y="437.9" width="2.6" height="3.0" fill="#f5f5f5"/><rect x="345.3" y="437.9" width="2.6" height="3.0" fill="#f1f1f1"/><rect x="72.3" y="445.2" width="2.6" height="3.0" fill="#efefef"/><rect x="74.9" y="445.2" width="2.6" height="3.0" fill="#bcbcbc"/><rect x="77.5" y="445.2" width="2.6" height="3.0" fill="#d2d2d2"/><rect x="80.1" y="445.2" width="2.6" height="3.0" fill="#d1d1d1"/><rect x="82.7" y="445.2" width="2.6" height="3.0" fill="#d9d9d9"/><rect x="87.9" y="445.2" width="2.6" height="3.0" fill="#c6c6c6"/><rect x="90.5" y="445.2" width="2.6" height="3.0" fill="#cecece"/><rect x="93.1" y="445.2" width="2.6" height="3.0" fill="#dadada"/><rect x="95.7" y="445.2" width="2.6" height="3.0" fill="#e0e0e0"/><rect x="98.3" y="445.2" width="2.6" height="3.0" fill="#d7d7d7"/><rect x="100.9" y="445.2" width="2.6" height="3.0" fill="#e3e3e3"/><rect x="103.5" y="445.2" width="2.6" height="3.0" fill="#f2f2f2"/><rect x="106.1" y="445.2" width="2.6" height="3.0" fill="#f8f8f8"/><rect x="108.7" y="445.2" width="2.6" height="3.0" fill="#bfbfbf"/><rect x="111.3" y="445.2" width="2.6" height="3.0" fill="#c9c9c9"/><rect x="113.9" y="445.2" width="2.6" height="3.0" fill="#f1f1f1"/><rect x="116.5" y="445.2" width="2.6" height="3.0" fill="#e8e8e8"/><rect x="124.3" y="445.2" width="2.6" height="3.0" fill="#c9c9c9"/><rect x="126.9" y="445.2" width="2.6" height="3.0" fill="#f7f7f7"/><rect x="129.5" y="445.2" width="2.6" height="3.0" fill="#cbcbcb"/><rect x="132.1" y="445.2" width="2.6" height="3.0" fill="#cccccc"/><rect x="134.7" y="445.2" width="2.6" height="3.0" fill="#d1d1d1"/><rect x="137.3" y="445.2" width="2.6" height="3.0" fill="#cdcdcd"/><rect x="139.9" y="445.2" width="2.6" height="3.0" fill="#d1d1d1"/><rect x="142.5" y="445.2" width="2.6" height="3.0" fill="#d0d0d0"/><rect x="145.1" y="445.2" width="2.6" height="3.0" fill="#eeeeee"/><rect x="147.7" y="445.2" width="2.6" height="3.0" fill="#cacaca"/><rect x="150.3" y="445.2" width="2.6" height="3.0" fill="#c2c2c2"/><rect x="152.9" y="445.2" width="2.6" height="3.0" fill="#ebebeb"/><rect x="155.5" y="445.2" width="2.6" height="3.0" fill="#cacaca"/><rect x="158.1" y="445.2" width="2.6" height="3.0" fill="#d3d3d3"/><rect x="160.7" y="445.2" width="2.6" height="3.0" fill="#cccccc"/><rect x="163.3" y="445.2" width="2.6" height="3.0" fill="#c8c8c8"/><rect x="165.9" y="445.2" width="2.6" height="3.0" fill="#d5d5d5"/><rect x="168.5" y="445.2" width="2.6" height="3.0" fill="#c8c8c8"/><rect x="199.7" y="445.2" width="2.6" height="3.0" fill="#d5d5d5"/><rect x="202.3" y="445.2" width="2.6" height="3.0" fill="#cacaca"/><rect x="204.9" y="445.2" width="2.6" height="3.0" fill="#eeeeee"/><rect x="207.5" y="445.2" width="2.6" height="3.0" fill="#d0d0d0"/><rect x="210.1" y="445.2" width="2.6" height="3.0" fill="#cdcdcd"/><rect x="212.7" y="445.2" width="2.6" height="3.0" fill="#d4d4d4"/><rect x="215.3" y="445.2" width="2.6" height="3.0" fill="#dcdcdc"/><rect x="217.9" y="445.2" width="2.6" height="3.0" fill="#d2d2d2"/><rect x="220.5" y="445.2" width="2.6" height="3.0" fill="#dcdcdc"/><rect x="223.1" y="445.2" width="2.6" height="3.0" fill="#cbcbcb"/><rect x="225.7" y="445.2" width="2.6" height="3.0" fill="#c4c4c4"/><rect x="228.3" y="445.2" width="2.6" height="3.0" fill="#e0e0e0"/><rect x="230.9" y="445.2" width="2.6" height="3.0" fill="#d4d4d4"/><rect x="233.5" y="445.2" width="2.6" height="3.0" fill="#d7d7d7"/><rect x="236.1" y="445.2" width="2.6" height="3.0" fill="#c3c3c3"/><rect x="238.7" y="445.2" width="2.6" height="3.0" fill="#efefef"/><rect x="241.3" y="445.2" width="2.6" height="3.0" fill="#e3e3e3"/><rect x="243.9" y="445.2" width="2.6" height="3.0" fill="#e1e1e1"/><rect x="246.5" y="445.2" width="2.6" height="3.0" fill="#b9b9b9"/><rect x="249.1" y="445.2" width="2.6" height="3.0" fill="#eaeaea"/><rect x="251.7" y="445.2" width="2.6" height="3.0" fill="#cfcfcf"/><rect x="254.3" y="445.2" width="2.6" height="3.0" fill="#dadada"/><rect x="256.9" y="445.2" width="2.6" height="3.0" fill="#d1d1d1"/><rect x="259.5" y="445.2" width="2.6" height="3.0" fill="#f2f2f2"/><rect x="303.7" y="445.2" width="2.6" height="3.0" fill="#cfcfcf"/><rect x="306.3" y="445.2" width="2.6" height="3.0" fill="#e5e5e5"/><rect x="308.9" y="445.2" width="2.6" height="3.0" fill="#c5c5c5"/><rect x="311.5" y="445.2" width="2.6" height="3.0" fill="#d8d8d8"/><rect x="314.1" y="445.2" width="2.6" height="3.0" fill="#d7d7d7"/><rect x="316.7" y="445.2" width="2.6" height="3.0" fill="#eeeeee"/><rect x="319.3" y="445.2" width="2.6" height="3.0" fill="#d9d9d9"/><rect x="321.9" y="445.2" width="2.6" height="3.0" fill="#c8c8c8"/><rect x="324.5" y="445.2" width="2.6" height="3.0" fill="#d1d1d1"/><rect x="327.1" y="445.2" width="2.6" height="3.0" fill="#cfcfcf"/><rect x="329.7" y="445.2" width="2.6" height="3.0" fill="#f9f9f9"/><rect x="332.3" y="445.2" width="2.6" height="3.0" fill="#cdcdcd"/><rect x="337.5" y="445.2" width="2.6" height="3.0" fill="#c7c7c7"/><rect x="340.1" y="445.2" width="2.6" height="3.0" fill="#dedede"/><rect x="342.7" y="445.2" width="2.6" height="3.0" fill="#d1d1d1"/><rect x="345.3" y="445.2" width="2.6" height="3.0" fill="#c5c5c5"/><rect x="347.9" y="445.2" width="2.6" height="3.0" fill="#e5e5e5"/><rect x="74.9" y="448.2" width="2.6" height="3.0" fill="#c1c1c1"/><rect x="77.5" y="448.2" width="2.6" height="3.0" fill="#c5c5c5"/><rect x="80.1" y="448.2" width="2.6" height="3.0" fill="#d2d2d2"/><rect x="82.7" y="448.2" width="2.6" height="3.0" fill="#b7b7b7"/><rect x="85.3" y="448.2" width="2.6" height="3.0" fill="#d5d5d5"/><rect x="87.9" y="448.2" width="2.6" height="3.0" fill="#b4b4b4"/><rect x="90.5" y="448.2" width="2.6" height="3.0" fill="#b4b4b4"/><rect x="93.1" y="448.2" width="2.6" height="3.0" fill="#a8a8a8"/><rect x="95.7" y="448.2" width="2.6" height="3.0" fill="#b2b2b2"/><rect x="98.3" y="448.2" width="2.6" height="3.0" fill="#9f9f9f"/><rect x="100.9" y="448.2" width="2.6" height="3.0" fill="#a9a9a9"/><rect x="103.5" y="448.2" width="2.6" height="3.0" fill="#b5b5b5"/><rect x="108.7" y="448.2" width="2.6" height="3.0" fill="#c8c8c8"/><rect x="111.3" y="448.2" width="2.6" height="3.0" fill="#f0f0f0"/><rect x="113.9" y="448.2" width="2.6" height="3.0" fill="#9e9e9e"/><rect x="119.1" y="448.2" width="2.6" height="3.0" fill="#e1e1e1"/><rect x="124.3" y="448.2" width="2.6" height="3.0" fill="#aaaaaa"/><rect x="126.9" y="448.2" width="2.6" height="3.0" fill="#b8b8b8"/><rect x="129.5" y="448.2" width="2.6" height="3.0" fill="#b3b3b3"/><rect x="132.1" y="448.2" width="2.6" height="3.0" fill="#a4a4a4"/><rect x="134.7" y="448.2" width="2.6" height="3.0" fill="#adadad"/><rect x="137.3" y="448.2" width="2.6" height="3.0" fill="#a2a2a2"/><rect x="139.9" y="448.2" width="2.6" height="3.0" fill="#979797"/><rect x="142.5" y="448.2" width="2.6" height="3.0" fill="#cbcbcb"/><rect x="145.1" y="448.2" width="2.6" height="3.0" fill="#c6c6c6"/><rect x="147.7" y="448.2" width="2.6" height="3.0" fill="#b5b5b5"/><rect x="150.3" y="448.2" width="2.6" height="3.0" fill="#999999"/><rect x="152.9" y="448.2" width="2.6" height="3.0" fill="#a5a5a5"/><rect x="155.5" y="448.2" width="2.6" height="3.0" fill="#b2b2b2"/><rect x="158.1" y="448.2" width="2.6" height="3.0" fill="#aeaeae"/><rect x="160.7" y="448.2" width="2.6" height="3.0" fill="#a9a9a9"/><rect x="163.3" y="448.2" width="2.6" height="3.0" fill="#bababa"/><rect x="165.9" y="448.2" width="2.6" height="3.0" fill="#b8b8b8"/><rect x="168.5" y="448.2" width="2.6" height="3.0" fill="#9c9c9c"/><rect x="171.1" y="448.2" width="2.6" height="3.0" fill="#f3f3f3"/><rect x="199.7" y="448.2" width="2.6" height="3.0" fill="#bfbfbf"/><rect x="202.3" y="448.2" width="2.6" height="3.0" fill="#bababa"/><rect x="204.9" y="448.2" width="2.6" height="3.0" fill="#bbbbbb"/><rect x="207.5" y="448.2" width="2.6" height="3.0" fill="#b9b9b9"/><rect x="210.1" y="448.2" width="2.6" height="3.0" fill="#b3b3b3"/><rect x="212.7" y="448.2" width="2.6" height="3.0" fill="#acacac"/><rect x="215.3" y="448.2" width="2.6" height="3.0" fill="#c3c3c3"/><rect x="217.9" y="448.2" width="2.6" height="3.0" fill="#cecece"/><rect x="220.5" y="448.2" width="2.6" height="3.0" fill="#d0d0d0"/><rect x="223.1" y="448.2" width="2.6" height="3.0" fill="#bebebe"/><rect x="225.7" y="448.2" width="2.6" height="3.0" fill="#afafaf"/><rect x="228.3" y="448.2" width="2.6" height="3.0" fill="#e2e2e2"/><rect x="230.9" y="448.2" width="2.6" height="3.0" fill="#c6c6c6"/><rect x="233.5" y="448.2" width="2.6" height="3.0" fill="#a7a7a7"/><rect x="236.1" y="448.2" width="2.6" height="3.0" fill="#b1b1b1"/><rect x="238.7" y="448.2" width="2.6" height="3.0" fill="#bdbdbd"/><rect x="241.3" y="448.2" width="2.6" height="3.0" fill="#e0e0e0"/><rect x="243.9" y="448.2" width="2.6" height="3.0" fill="#b9b9b9"/><rect x="246.5" y="448.2" width="2.6" height="3.0" fill="#8d8d8d"/><rect x="249.1" y="448.2" width="2.6" height="3.0" fill="#e4e4e4"/><rect x="251.7" y="448.2" width="2.6" height="3.0" fill="#bababa"/><rect x="254.3" y="448.2" width="2.6" height="3.0" fill="#d8d8d8"/><rect x="256.9" y="448.2" width="2.6" height="3.0" fill="#a3a3a3"/><rect x="259.5" y="448.2" width="2.6" height="3.0" fill="#e0e0e0"/><rect x="303.7" y="448.2" width="2.6" height="3.0" fill="#bdbdbd"/><rect x="306.3" y="448.2" width="2.6" height="3.0" fill="#d2d2d2"/><rect x="308.9" y="448.2" width="2.6" height="3.0" fill="#939393"/><rect x="311.5" y="448.2" width="2.6" height="3.0" fill="#bbbbbb"/><rect x="314.1" y="448.2" width="2.6" height="3.0" fill="#d3d3d3"/><rect x="316.7" y="448.2" width="2.6" height="3.0" fill="#e5e5e5"/><rect x="319.3" y="448.2" width="2.6" height="3.0" fill="#b0b0b0"/><rect x="321.9" y="448.2" width="2.6" height="3.0" fill="#969696"/><rect x="324.5" y="448.2" width="2.6" height="3.0" fill="#9a9a9a"/><rect x="327.1" y="448.2" width="2.6" height="3.0" fill="#ababab"/><rect x="329.7" y="448.2" width="2.6" height="3.0" fill="#eaeaea"/><rect x="332.3" y="448.2" width="2.6" height="3.0" fill="#a7a7a7"/><rect x="334.9" y="448.2" width="2.6" height="3.0" fill="#efefef"/><rect x="337.5" y="448.2" width="2.6" height="3.0" fill="#aaaaaa"/><rect x="340.1" y="448.2" width="2.6" height="3.0" fill="#bcbcbc"/><rect x="342.7" y="448.2" width="2.6" height="3.0" fill="#bbbbbb"/><rect x="345.3" y="448.2" width="2.6" height="3.0" fill="#999999"/><rect x="347.9" y="448.2" width="2.6" height="3.0" fill="#d6d6d6"/></svg></div></div><svg class="abs" style="left:0;top:0" width="600" height="490"><line x1="63.5" y1="202.13000000000002" x2="70" y2="202.13000000000002" stroke="#b7c7cf" stroke-width="1"/><line x1="63.5" y1="215.87000000000003" x2="70" y2="215.87000000000003" stroke="#b7c7cf" stroke-width="1"/><line x1="63.5" y1="229.61000000000004" x2="70" y2="229.61000000000004" stroke="#b7c7cf" stroke-width="1"/><line x1="63.5" y1="243.35000000000005" x2="70" y2="243.35000000000005" stroke="#b7c7cf" stroke-width="1"/><line x1="63.5" y1="257.09000000000003" x2="70" y2="257.09000000000003" stroke="#b7c7cf" stroke-width="1"/><line x1="63.5" y1="270.83000000000004" x2="70" y2="270.83000000000004" stroke="#b7c7cf" stroke-width="1"/><line x1="63.5" y1="284.57000000000005" x2="70" y2="284.57000000000005" stroke="#b7c7cf" stroke-width="1"/><line x1="63.5" y1="298.31000000000006" x2="70" y2="298.31000000000006" stroke="#b7c7cf" stroke-width="1"/><line x1="63.5" y1="312.05000000000007" x2="70" y2="312.05000000000007" stroke="#b7c7cf" stroke-width="1"/><line x1="63.5" y1="325.7900000000001" x2="70" y2="325.7900000000001" stroke="#b7c7cf" stroke-width="1"/><line x1="63.5" y1="339.5300000000001" x2="70" y2="339.5300000000001" stroke="#b7c7cf" stroke-width="1"/><line x1="63.5" y1="353.2700000000001" x2="70" y2="353.2700000000001" stroke="#b7c7cf" stroke-width="1"/><line x1="63.5" y1="367.0100000000001" x2="70" y2="367.0100000000001" stroke="#b7c7cf" stroke-width="1"/><line x1="63.5" y1="380.7500000000001" x2="70" y2="380.7500000000001" stroke="#b7c7cf" stroke-width="1"/><line x1="63.5" y1="394.4900000000001" x2="70" y2="394.4900000000001" stroke="#b7c7cf" stroke-width="1"/><line x1="63.5" y1="408.23000000000013" x2="70" y2="408.23000000000013" stroke="#b7c7cf" stroke-width="1"/><line x1="63.5" y1="429.4" x2="70" y2="429.4" stroke="#b7c7cf" stroke-width="1"/><line x1="63.5" y1="442.6" x2="70" y2="442.6" stroke="#b7c7cf" stroke-width="1"/><line x1="63.5" y1="174.65" x2="63.5" y2="456.0" stroke="#b7c7cf" stroke-width="1"/></svg><div class="abs ct" style="left:371.6px;top:191.39000000000001px;width:78.69999999999999px">LAN</div><div class="abs ct" style="left:371.6px;top:205.13000000000002px;width:78.69999999999999px">LAN</div><div class="abs ct" style="left:371.6px;top:218.87000000000003px;width:78.69999999999999px">LAN</div><div class="abs ct" style="left:371.6px;top:232.61000000000004px;width:78.69999999999999px">Sans fil</div><div class="abs ct" style="left:371.6px;top:246.35000000000005px;width:78.69999999999999px">LAN</div><div class="abs ct" style="left:371.6px;top:260.09000000000003px;width:78.69999999999999px">Sans fil</div><div class="abs ct" style="left:371.6px;top:273.83000000000004px;width:78.69999999999999px">Sans fil</div><div class="abs ct" style="left:371.6px;top:287.57000000000005px;width:78.69999999999999px">Sans fil</div><div class="abs ct" style="left:371.6px;top:301.31000000000006px;width:78.69999999999999px">Sans fil</div><div class="abs ct" style="left:371.6px;top:315.05000000000007px;width:78.69999999999999px">LAN</div><div class="abs ct" style="left:371.6px;top:328.7900000000001px;width:78.69999999999999px">Sans fil</div><div class="abs ct" style="left:371.6px;top:342.5300000000001px;width:78.69999999999999px">LAN</div><div class="abs ct" style="left:371.6px;top:356.2700000000001px;width:78.69999999999999px">LAN</div><div class="abs ct" style="left:371.6px;top:370.0100000000001px;width:78.69999999999999px">LAN</div><div class="abs ct" style="left:371.6px;top:383.7500000000001px;width:78.69999999999999px">LAN</div><div class="abs ct" style="left:371.6px;top:397.4900000000001px;width:78.69999999999999px">LAN</div><div class="abs ct" style="left:371.6px;top:411.23000000000013px;width:78.69999999999999px">LAN</div><div class="abs ct" style="left:371.6px;top:432.4px;width:78.69999999999999px">Sans fil</div><div class="abs ct" style="left:371.6px;top:445.6px;width:78.69999999999999px">LAN</div><div class="abs th" style="left:63.5px;top:177.55px;width:117.5px">Nom</div><div class="abs th" style="left:181.0px;top:177.55px;width:99.39999999999998px">Adresse MAC</div><div class="abs th" style="left:280.4px;top:177.55px;width:91.20000000000005px">Adresse IPv4</div><div class="abs th" style="left:371.6px;top:177.55px;width:78.69999999999999px">Connexion</div><div class="abs th" style="left:63.5px;top:477.2px;width:117.5px">Nom</div><div class="abs th" style="left:181.0px;top:477.2px;width:99.39999999999998px">Adresse MAC</div><div class="abs th" style="left:280.4px;top:477.2px;width:91.20000000000005px">Adresse IPv6</div><div class="abs th" style="left:371.6px;top:477.2px;width:78.69999999999999px">Connexion</div>
<div class="abs btn" style="top:172px">Actualiser</div>
<div class="abs btn" style="top:193.7px">Ouverture dans le nav...</div>
<div class="abs btn" style="top:215px">Imprimer</div>
<div class="abs btn" style="top:315.8px">Tableau client DHCP</div>
</div></body></html>
